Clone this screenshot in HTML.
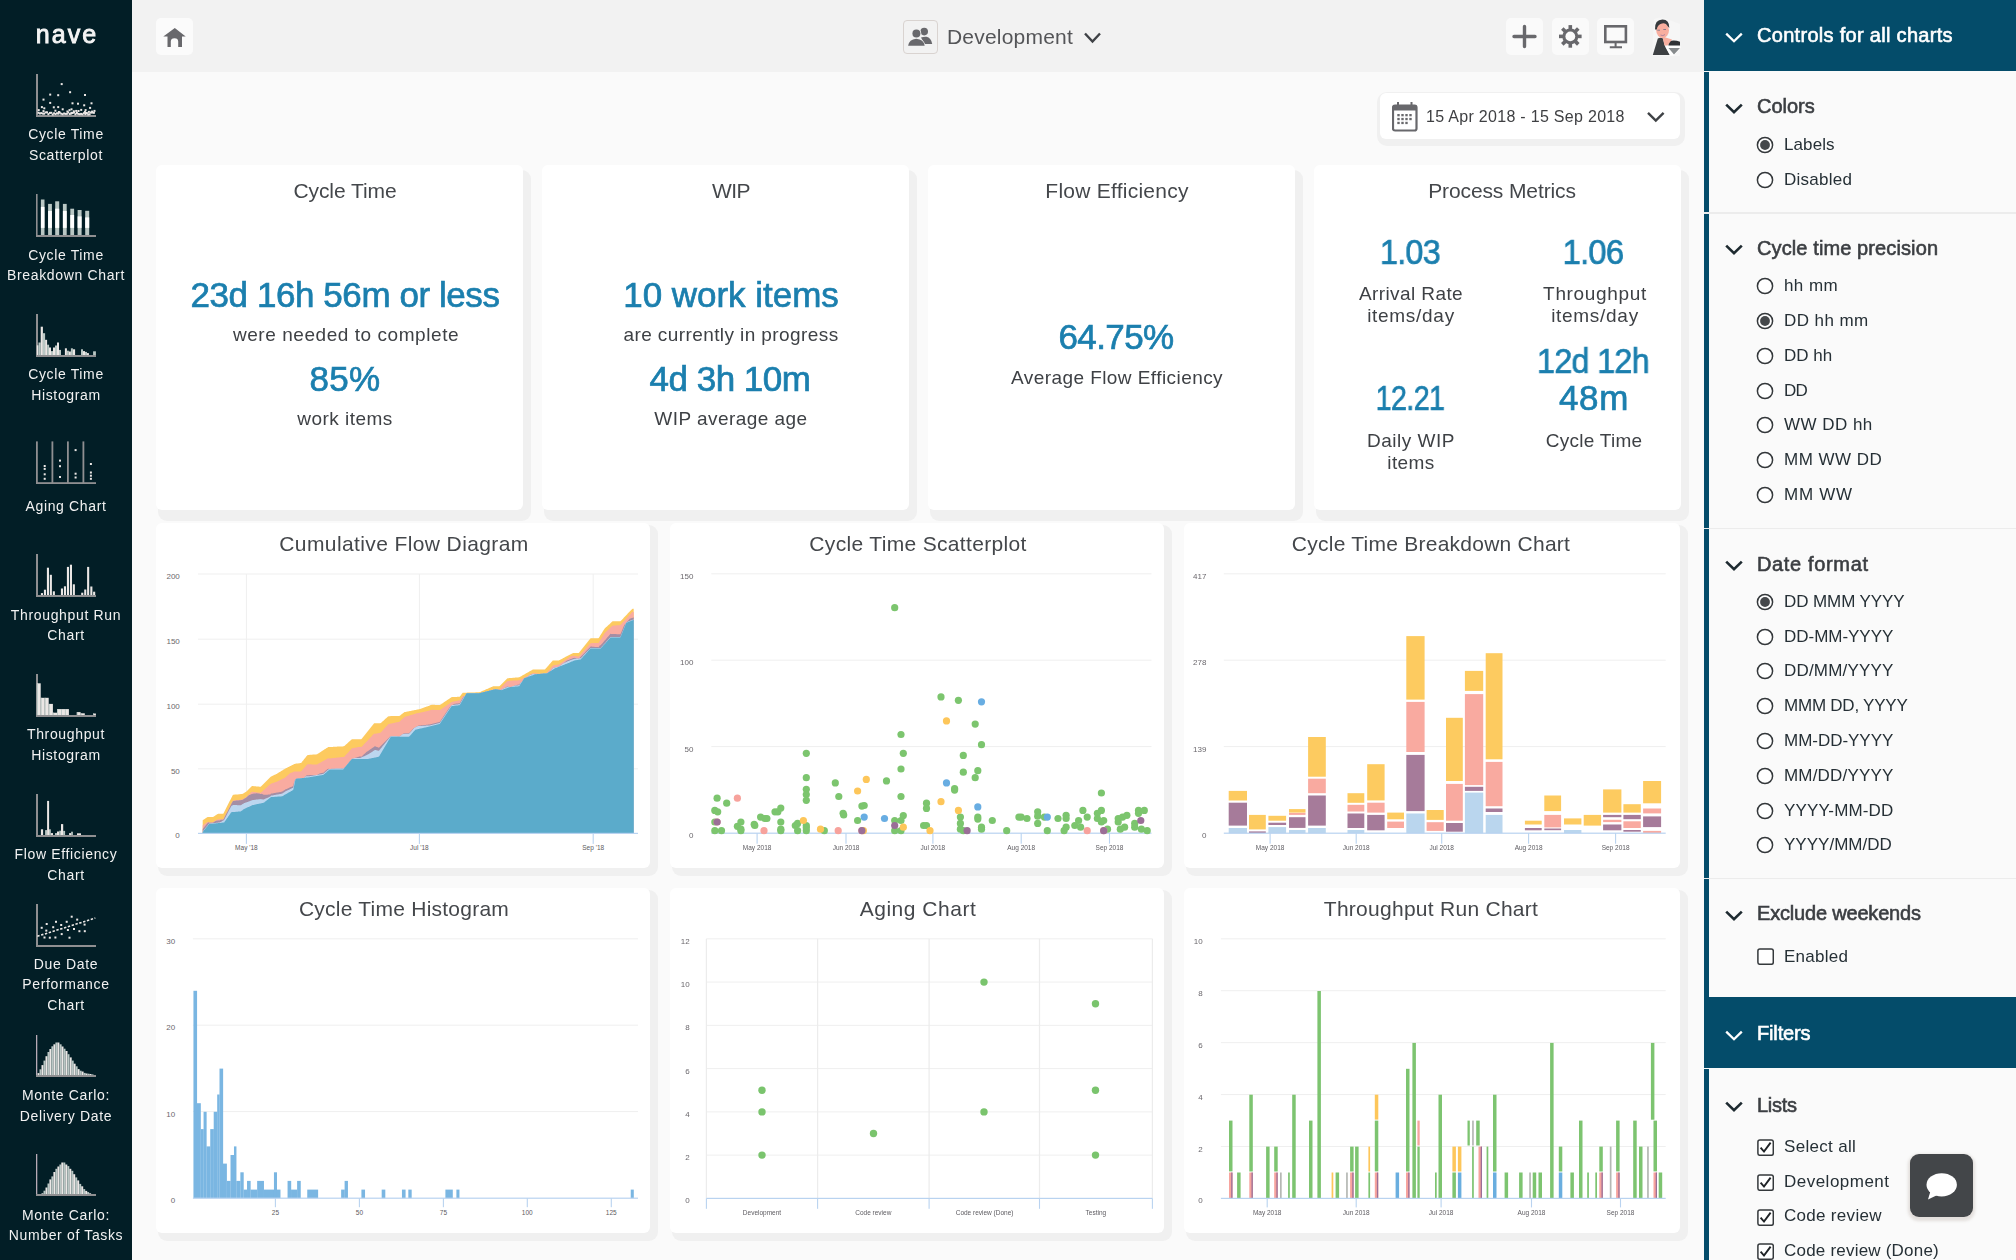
<!DOCTYPE html>
<html><head><meta charset="utf-8"><title>Nave Dashboard</title><style>
*{margin:0;padding:0;box-sizing:border-box}
html,body{width:2016px;height:1260px;overflow:hidden;background:#fafafa}
body{position:relative;font-family:"Liberation Sans",sans-serif}
.t{position:absolute;white-space:nowrap;font-family:"Liberation Sans",sans-serif;will-change:transform}
svg{display:block}
</style></head><body>
<div style="position:absolute;left:132px;top:72px;width:1572px;height:1188px;background:#fafafa"></div>
<div style="position:absolute;left:132px;top:0px;width:1572px;height:72px;background:#f2f2f2"></div>
<div style="position:absolute;left:0px;top:0px;width:132px;height:1260px;background:#021e26"></div>
<div style="position:absolute;left:156px;top:165px;width:367px;height:345px;background:#fff;border-radius:6px;box-shadow:5px 8px 0 3px #f0f0f0"></div>
<div style="position:absolute;left:542px;top:165px;width:367px;height:345px;background:#fff;border-radius:6px;box-shadow:5px 8px 0 3px #f0f0f0"></div>
<div style="position:absolute;left:928px;top:165px;width:367px;height:345px;background:#fff;border-radius:6px;box-shadow:5px 8px 0 3px #f0f0f0"></div>
<div style="position:absolute;left:1314px;top:165px;width:367px;height:345px;background:#fff;border-radius:6px;box-shadow:5px 8px 0 3px #f0f0f0"></div>
<div style="position:absolute;left:156px;top:523px;width:494px;height:345px;background:#fff;border-radius:6px;box-shadow:5px 5px 0 3px #f0f0f0"></div>
<div style="position:absolute;left:670px;top:523px;width:494px;height:345px;background:#fff;border-radius:6px;box-shadow:5px 5px 0 3px #f0f0f0"></div>
<div style="position:absolute;left:1184px;top:523px;width:496px;height:345px;background:#fff;border-radius:6px;box-shadow:5px 5px 0 3px #f0f0f0"></div>
<div style="position:absolute;left:156px;top:888px;width:494px;height:345px;background:#fff;border-radius:6px;box-shadow:5px 5px 0 3px #f0f0f0"></div>
<div style="position:absolute;left:670px;top:888px;width:494px;height:345px;background:#fff;border-radius:6px;box-shadow:5px 5px 0 3px #f0f0f0"></div>
<div style="position:absolute;left:1184px;top:888px;width:496px;height:345px;background:#fff;border-radius:6px;box-shadow:5px 5px 0 3px #f0f0f0"></div>
<div style="position:absolute;left:1704px;top:0px;width:312px;height:1260px;background:#fafafa"></div>
<div style="position:absolute;left:1704px;top:0px;width:312px;height:71px;background:#044c6a"></div>
<div style="position:absolute;left:1704px;top:72px;width:5px;height:925px;background:#044c6a"></div>
<div style="position:absolute;left:1704px;top:997px;width:312px;height:71px;background:#044c6a"></div>
<div style="position:absolute;left:1704px;top:1069px;width:5px;height:191px;background:#044c6a"></div>
<svg style="position:absolute;left:156px;top:523px" width="494" height="345" viewBox="156 523 494 345"><rect x="198.0" y="573.50" width="440.0" height="1" fill="#efefef"/><text x="179.8" y="579.0" font-size="8" fill="#6b686d" text-anchor="end" font-family="Liberation Sans">200</text><rect x="198.0" y="638.70" width="440.0" height="1" fill="#efefef"/><text x="179.8" y="644.2" font-size="8" fill="#6b686d" text-anchor="end" font-family="Liberation Sans">150</text><rect x="198.0" y="703.70" width="440.0" height="1" fill="#efefef"/><text x="179.8" y="709.2" font-size="8" fill="#6b686d" text-anchor="end" font-family="Liberation Sans">100</text><rect x="198.0" y="768.30" width="440.0" height="1" fill="#efefef"/><text x="179.8" y="773.8" font-size="8" fill="#6b686d" text-anchor="end" font-family="Liberation Sans">50</text><text x="179.8" y="838.4" font-size="8" fill="#6b686d" text-anchor="end" font-family="Liberation Sans">0</text><rect x="245.90" y="574.0" width="1" height="259.4" fill="#efefef"/><rect x="418.90" y="574.0" width="1" height="259.4" fill="#efefef"/><rect x="592.70" y="574.0" width="1" height="259.4" fill="#efefef"/><path d="M202.7 833.4 L202.7 820.2 L203.2 819.9 L203.7 819.5 L204.2 819.2 L204.7 818.9 L205.2 818.5 L205.7 818.2 L206.2 817.9 L206.7 817.5 L207.2 817.2 L207.7 817.0 L208.2 817.0 L208.7 817.0 L209.2 817.0 L209.7 817.0 L210.2 817.0 L210.7 817.0 L211.2 817.0 L211.7 817.0 L212.2 817.0 L212.7 817.0 L213.2 816.9 L213.7 816.5 L214.2 816.2 L214.7 815.9 L215.2 815.5 L215.7 815.2 L216.2 814.9 L216.7 814.5 L217.2 814.2 L217.7 813.9 L218.2 813.8 L218.7 813.8 L219.2 813.8 L219.7 813.8 L220.2 813.8 L220.7 813.8 L221.2 813.8 L221.7 813.8 L222.2 813.8 L222.7 813.8 L223.2 813.8 L223.7 813.0 L224.2 812.0 L224.7 811.0 L225.2 810.0 L225.7 809.1 L226.2 808.1 L226.7 807.1 L227.2 806.1 L227.7 805.1 L228.2 804.1 L228.7 803.1 L229.2 802.1 L229.7 801.1 L230.2 800.2 L230.7 799.2 L231.2 798.2 L231.7 797.2 L232.2 796.2 L232.7 795.2 L233.2 794.8 L233.7 794.7 L234.2 794.7 L234.7 794.6 L235.2 794.6 L235.7 794.6 L236.2 794.5 L236.7 794.5 L237.2 794.4 L237.7 794.4 L238.2 794.4 L238.7 794.3 L239.2 794.3 L239.7 794.2 L240.2 794.2 L240.7 794.1 L241.2 794.1 L241.7 794.1 L242.2 794.0 L242.7 793.8 L243.2 793.5 L243.7 793.2 L244.2 792.9 L244.7 792.6 L245.2 792.3 L245.7 792.0 L246.2 791.7 L246.7 791.2 L247.2 790.7 L247.7 790.2 L248.2 789.7 L248.7 789.2 L249.2 788.7 L249.7 788.2 L250.2 787.7 L250.7 787.2 L251.2 786.7 L251.7 786.2 L252.2 786.0 L252.7 786.1 L253.2 786.1 L253.7 786.2 L254.2 786.2 L254.7 786.3 L255.2 786.3 L255.7 786.3 L256.2 786.4 L256.7 786.4 L257.2 786.5 L257.7 786.5 L258.2 786.6 L258.7 786.6 L259.2 786.7 L259.7 786.7 L260.2 786.8 L260.7 786.7 L261.2 786.2 L261.7 785.7 L262.2 785.2 L262.7 784.7 L263.2 784.2 L263.7 783.7 L264.2 783.2 L264.7 782.7 L265.2 782.2 L265.7 781.7 L266.2 781.3 L266.7 780.8 L267.2 780.3 L267.7 779.8 L268.2 779.3 L268.7 778.8 L269.2 778.3 L269.7 777.8 L270.2 777.3 L270.7 776.8 L271.2 776.4 L271.7 776.2 L272.2 776.0 L272.7 775.7 L273.2 775.5 L273.7 775.3 L274.2 775.0 L274.7 774.8 L275.2 774.6 L275.7 774.4 L276.2 774.1 L276.7 773.9 L277.2 773.6 L277.7 773.3 L278.2 772.9 L278.7 772.6 L279.2 772.3 L279.7 772.0 L280.2 771.7 L280.7 771.4 L281.2 771.1 L281.7 770.8 L282.2 770.5 L282.7 770.2 L283.2 769.8 L283.7 769.5 L284.2 769.2 L284.7 768.9 L285.2 768.6 L285.7 768.4 L286.2 768.1 L286.7 767.9 L287.2 767.6 L287.7 767.4 L288.2 767.1 L288.7 766.9 L289.2 766.6 L289.7 766.4 L290.2 766.1 L290.7 765.9 L291.2 765.6 L291.7 765.4 L292.2 765.1 L292.7 764.9 L293.2 764.6 L293.7 764.4 L294.2 764.1 L294.7 763.9 L295.2 763.7 L295.7 763.7 L296.2 763.6 L296.7 763.6 L297.2 763.5 L297.7 763.4 L298.2 763.4 L298.7 763.3 L299.2 763.2 L299.7 763.2 L300.2 763.1 L300.7 763.1 L301.2 762.9 L301.7 762.2 L302.2 761.6 L302.7 761.0 L303.2 760.4 L303.7 759.8 L304.2 759.1 L304.7 758.5 L305.2 757.9 L305.7 757.2 L306.2 756.6 L306.7 756.0 L307.2 755.4 L307.7 755.0 L308.2 754.9 L308.7 754.9 L309.2 754.9 L309.7 754.8 L310.2 754.8 L310.7 754.8 L311.2 754.7 L311.7 754.7 L312.2 754.7 L312.7 754.6 L313.2 754.6 L313.7 754.5 L314.2 754.5 L314.7 754.5 L315.2 754.4 L315.7 754.4 L316.2 754.4 L316.7 754.3 L317.2 754.2 L317.7 753.8 L318.2 753.5 L318.7 753.2 L319.2 752.9 L319.7 752.5 L320.2 752.2 L320.7 751.9 L321.2 751.6 L321.7 751.3 L322.2 750.9 L322.7 750.6 L323.2 750.3 L323.7 750.0 L324.2 749.6 L324.7 749.3 L325.2 749.0 L325.7 748.7 L326.2 748.3 L326.7 748.0 L327.2 747.7 L327.7 747.4 L328.2 747.1 L328.7 747.1 L329.2 747.0 L329.7 747.0 L330.2 747.0 L330.7 747.0 L331.2 746.9 L331.7 746.9 L332.2 746.9 L332.7 746.9 L333.2 746.8 L333.7 746.8 L334.2 746.8 L334.7 746.8 L335.2 746.7 L335.7 746.7 L336.2 746.7 L336.7 746.7 L337.2 746.6 L337.7 746.6 L338.2 746.6 L338.7 746.6 L339.2 746.5 L339.7 746.5 L340.2 746.5 L340.7 746.5 L341.2 746.4 L341.7 746.4 L342.2 746.4 L342.7 746.4 L343.2 746.3 L343.7 746.3 L344.2 746.1 L344.7 745.7 L345.2 745.2 L345.7 744.8 L346.2 744.3 L346.7 743.9 L347.2 743.4 L347.7 743.0 L348.2 742.5 L348.7 742.1 L349.2 741.6 L349.7 741.2 L350.2 740.7 L350.7 740.3 L351.2 739.8 L351.7 739.4 L352.2 739.2 L352.7 739.2 L353.2 739.2 L353.7 739.2 L354.2 739.2 L354.7 739.2 L355.2 739.2 L355.7 739.2 L356.2 739.2 L356.7 739.2 L357.2 739.2 L357.7 739.2 L358.2 739.2 L358.7 739.2 L359.2 739.2 L359.7 739.2 L360.2 739.2 L360.7 739.2 L361.2 739.2 L361.7 738.8 L362.2 738.2 L362.7 737.6 L363.2 736.9 L363.7 736.3 L364.2 735.7 L364.7 735.1 L365.2 734.4 L365.7 733.8 L366.2 733.2 L366.7 732.6 L367.2 731.9 L367.7 731.3 L368.2 730.7 L368.7 730.1 L369.2 729.4 L369.7 728.8 L370.2 728.2 L370.7 727.6 L371.2 726.9 L371.7 726.3 L372.2 725.7 L372.7 725.1 L373.2 724.4 L373.7 723.8 L374.2 723.3 L374.7 723.3 L375.2 723.3 L375.7 723.3 L376.2 723.3 L376.7 723.3 L377.2 723.3 L377.7 723.3 L378.2 723.3 L378.7 723.3 L379.2 723.3 L379.7 723.3 L380.2 723.3 L380.7 723.1 L381.2 722.7 L381.7 722.2 L382.2 721.8 L382.7 721.3 L383.2 720.9 L383.7 720.4 L384.2 720.0 L384.7 719.5 L385.2 719.1 L385.7 718.6 L386.2 718.2 L386.7 717.7 L387.2 717.3 L387.7 716.8 L388.2 716.4 L388.7 716.2 L389.2 716.2 L389.7 716.2 L390.2 716.2 L390.7 716.1 L391.2 716.1 L391.7 716.1 L392.2 716.1 L392.7 716.1 L393.2 716.1 L393.7 716.1 L394.2 716.0 L394.7 716.0 L395.2 716.0 L395.7 716.0 L396.2 716.0 L396.7 716.0 L397.2 716.0 L397.7 715.9 L398.2 715.9 L398.7 715.9 L399.2 715.9 L399.7 715.7 L400.2 715.4 L400.7 715.0 L401.2 714.6 L401.7 714.2 L402.2 713.8 L402.7 713.4 L403.2 713.0 L403.7 712.7 L404.2 712.3 L404.7 712.1 L405.2 712.0 L405.7 711.9 L406.2 711.8 L406.7 711.7 L407.2 711.6 L407.7 711.5 L408.2 711.4 L408.7 711.3 L409.2 711.2 L409.7 711.1 L410.2 711.0 L410.7 710.9 L411.2 710.8 L411.7 710.7 L412.2 710.6 L412.7 710.5 L413.2 710.4 L413.7 710.3 L414.2 710.2 L414.7 710.1 L415.2 710.0 L415.7 709.9 L416.2 709.8 L416.7 709.7 L417.2 709.6 L417.7 709.5 L418.2 709.4 L418.7 709.3 L419.2 709.2 L419.7 709.1 L420.2 708.9 L420.7 708.7 L421.2 708.6 L421.7 708.4 L422.2 708.2 L422.7 708.0 L423.2 707.8 L423.7 707.7 L424.2 707.5 L424.7 707.3 L425.2 707.1 L425.7 706.9 L426.2 706.8 L426.7 706.6 L427.2 706.4 L427.7 706.2 L428.2 706.0 L428.7 705.9 L429.2 705.7 L429.7 705.5 L430.2 705.3 L430.7 705.1 L431.2 705.0 L431.7 704.8 L432.2 704.7 L432.7 704.7 L433.2 704.8 L433.7 704.8 L434.2 704.8 L434.7 704.8 L435.2 704.9 L435.7 704.9 L436.2 704.9 L436.7 704.9 L437.2 705.0 L437.7 705.0 L438.2 705.0 L438.7 705.0 L439.2 705.1 L439.7 705.1 L440.2 704.8 L440.7 704.5 L441.2 704.2 L441.7 703.8 L442.2 703.5 L442.7 703.2 L443.2 702.8 L443.7 702.5 L444.2 702.1 L444.7 701.8 L445.2 701.5 L445.7 701.1 L446.2 700.8 L446.7 700.5 L447.2 700.1 L447.7 699.8 L448.2 699.5 L448.7 699.1 L449.2 698.8 L449.7 698.4 L450.2 698.1 L450.7 697.8 L451.2 697.4 L451.7 697.1 L452.2 697.1 L452.7 697.1 L453.2 697.0 L453.7 697.0 L454.2 697.0 L454.7 697.0 L455.2 696.9 L455.7 696.9 L456.2 696.9 L456.7 696.9 L457.2 696.8 L457.7 696.8 L458.2 696.8 L458.7 696.8 L459.2 696.7 L459.7 696.7 L460.2 696.1 L460.7 695.4 L461.2 694.8 L461.7 694.1 L462.2 693.4 L462.7 692.8 L463.2 692.8 L463.7 692.8 L464.2 692.7 L464.7 692.7 L465.2 692.7 L465.7 692.7 L466.2 692.7 L466.7 692.7 L467.2 692.6 L467.7 692.6 L468.2 692.6 L468.7 692.6 L469.2 692.6 L469.7 692.5 L470.2 692.5 L470.7 692.5 L471.2 692.5 L471.7 692.5 L472.2 692.5 L472.7 692.4 L473.2 692.4 L473.7 692.4 L474.2 692.4 L474.7 692.4 L475.2 692.4 L475.7 692.3 L476.2 692.3 L476.7 692.3 L477.2 692.3 L477.7 692.3 L478.2 692.2 L478.7 692.2 L479.2 692.2 L479.7 692.1 L480.2 691.9 L480.7 691.7 L481.2 691.5 L481.7 691.3 L482.2 691.0 L482.7 690.8 L483.2 690.6 L483.7 690.4 L484.2 690.2 L484.7 690.0 L485.2 689.7 L485.7 689.5 L486.2 689.3 L486.7 689.1 L487.2 688.9 L487.7 688.7 L488.2 688.4 L488.7 688.2 L489.2 688.0 L489.7 687.8 L490.2 687.6 L490.7 687.4 L491.2 687.1 L491.7 686.9 L492.2 686.7 L492.7 686.5 L493.2 686.3 L493.7 686.2 L494.2 686.2 L494.7 686.2 L495.2 686.2 L495.7 686.2 L496.2 686.2 L496.7 686.2 L497.2 686.2 L497.7 686.2 L498.2 686.2 L498.7 686.2 L499.2 686.2 L499.7 685.9 L500.2 685.4 L500.7 684.9 L501.2 684.4 L501.7 683.9 L502.2 683.4 L502.7 682.9 L503.2 682.4 L503.7 681.9 L504.2 681.4 L504.7 680.9 L505.2 680.4 L505.7 679.9 L506.2 679.4 L506.7 678.9 L507.2 678.4 L507.7 678.3 L508.2 678.2 L508.7 678.2 L509.2 678.1 L509.7 678.1 L510.2 678.1 L510.7 678.0 L511.2 678.0 L511.7 677.9 L512.2 677.9 L512.7 677.8 L513.2 677.8 L513.7 677.8 L514.2 677.7 L514.7 677.7 L515.2 677.6 L515.7 677.6 L516.2 677.6 L516.7 677.5 L517.2 677.5 L517.7 677.4 L518.2 677.4 L518.7 677.3 L519.2 677.3 L519.7 677.0 L520.2 676.7 L520.7 676.4 L521.2 676.2 L521.7 675.9 L522.2 675.6 L522.7 675.3 L523.2 675.0 L523.7 674.7 L524.2 674.5 L524.7 674.2 L525.2 673.9 L525.7 673.6 L526.2 673.3 L526.7 673.0 L527.2 672.8 L527.7 672.5 L528.2 672.2 L528.7 671.9 L529.2 671.6 L529.7 671.3 L530.2 671.0 L530.7 670.8 L531.2 670.5 L531.7 670.2 L532.2 669.9 L532.7 669.6 L533.2 669.4 L533.7 669.4 L534.2 669.4 L534.7 669.4 L535.2 669.4 L535.7 669.4 L536.2 669.4 L536.7 669.4 L537.2 669.4 L537.7 669.4 L538.2 669.4 L538.7 669.4 L539.2 669.4 L539.7 669.4 L540.2 669.4 L540.7 669.4 L541.2 669.4 L541.7 669.4 L542.2 669.4 L542.7 669.4 L543.2 669.4 L543.7 669.4 L544.2 669.4 L544.7 669.4 L545.2 669.2 L545.7 668.6 L546.2 668.0 L546.7 667.5 L547.2 666.9 L547.7 666.3 L548.2 665.8 L548.7 665.2 L549.2 664.6 L549.7 664.0 L550.2 663.5 L550.7 662.9 L551.2 662.3 L551.7 661.8 L552.2 661.2 L552.7 660.6 L553.2 660.4 L553.7 660.4 L554.2 660.4 L554.7 660.4 L555.2 660.4 L555.7 660.4 L556.2 660.4 L556.7 660.4 L557.2 660.4 L557.7 660.4 L558.2 660.4 L558.7 660.4 L559.2 660.2 L559.7 660.0 L560.2 659.7 L560.7 659.5 L561.2 659.2 L561.7 658.9 L562.2 658.7 L562.7 658.4 L563.2 658.1 L563.7 657.9 L564.2 657.6 L564.7 657.4 L565.2 657.1 L565.7 656.8 L566.2 656.6 L566.7 656.3 L567.2 656.0 L567.7 655.8 L568.2 655.5 L568.7 655.3 L569.2 655.0 L569.7 654.7 L570.2 654.5 L570.7 654.2 L571.2 653.9 L571.7 653.7 L572.2 653.4 L572.7 653.2 L573.2 653.1 L573.7 653.1 L574.2 653.1 L574.7 653.1 L575.2 653.1 L575.7 653.1 L576.2 653.1 L576.7 653.1 L577.2 653.1 L577.7 653.1 L578.2 653.1 L578.7 653.1 L579.2 652.5 L579.7 651.8 L580.2 651.2 L580.7 650.6 L581.2 650.0 L581.7 649.3 L582.2 648.7 L582.7 648.1 L583.2 647.5 L583.7 646.8 L584.2 646.2 L584.7 645.6 L585.2 645.0 L585.7 644.3 L586.2 643.7 L586.7 643.1 L587.2 642.5 L587.7 641.8 L588.2 641.2 L588.7 640.6 L589.2 640.0 L589.7 639.3 L590.2 638.7 L590.7 638.2 L591.2 638.2 L591.7 638.2 L592.2 638.2 L592.7 638.2 L593.2 638.2 L593.7 638.2 L594.2 638.2 L594.7 638.2 L595.2 638.2 L595.7 638.2 L596.2 638.2 L596.7 638.2 L597.2 638.2 L597.7 638.2 L598.2 638.2 L598.7 638.0 L599.2 637.2 L599.7 636.4 L600.2 635.6 L600.7 634.8 L601.2 634.0 L601.7 633.2 L602.2 632.4 L602.7 631.6 L603.2 630.8 L603.7 630.0 L604.2 629.2 L604.7 628.5 L605.2 628.1 L605.7 627.6 L606.2 627.1 L606.7 626.7 L607.2 626.2 L607.7 625.7 L608.2 625.3 L608.7 624.8 L609.2 624.4 L609.7 623.9 L610.2 623.4 L610.7 623.0 L611.2 622.5 L611.7 622.0 L612.2 621.6 L612.7 621.3 L613.2 621.3 L613.7 621.3 L614.2 621.3 L614.7 621.3 L615.2 621.3 L615.7 621.3 L616.2 621.3 L616.7 621.3 L617.2 621.3 L617.7 621.3 L618.2 621.3 L618.7 621.3 L619.2 621.3 L619.7 621.3 L620.2 621.3 L620.7 621.0 L621.2 620.5 L621.7 619.9 L622.2 619.4 L622.7 618.9 L623.2 618.4 L623.7 617.8 L624.2 617.3 L624.7 616.8 L625.2 616.3 L625.7 615.7 L626.2 615.2 L626.7 614.7 L627.2 614.2 L627.7 613.6 L628.2 613.1 L628.7 612.6 L629.2 612.1 L629.7 611.5 L630.2 611.0 L630.7 610.5 L631.2 610.0 L631.7 609.4 L632.2 608.9 L632.7 608.8 L633.2 608.8 L633.7 608.8 L633.7 833.4 Z" fill="#fdca5f"/><path d="M202.7 833.4 L202.7 825.2 L203.2 824.9 L203.7 824.6 L204.2 824.2 L204.7 823.9 L205.2 823.6 L205.7 823.3 L206.2 823.0 L206.7 822.6 L207.2 822.3 L207.7 822.1 L208.2 822.1 L208.7 822.1 L209.2 822.2 L209.7 822.2 L210.2 822.2 L210.7 822.2 L211.2 822.2 L211.7 822.2 L212.2 822.2 L212.7 822.2 L213.2 822.1 L213.7 821.8 L214.2 821.5 L214.7 821.1 L215.2 820.8 L215.7 820.5 L216.2 820.2 L216.7 819.9 L217.2 819.5 L217.7 819.2 L218.2 819.2 L218.7 819.2 L219.2 819.2 L219.7 819.2 L220.2 819.2 L220.7 819.2 L221.2 819.2 L221.7 819.2 L222.2 819.3 L222.7 819.3 L223.2 819.3 L223.7 818.5 L224.2 817.5 L224.7 816.5 L225.2 815.6 L225.7 814.6 L226.2 813.6 L226.7 812.6 L227.2 811.7 L227.7 810.7 L228.2 809.7 L228.7 808.7 L229.2 807.7 L229.7 806.8 L230.2 805.8 L230.7 804.8 L231.2 803.8 L231.7 802.8 L232.2 801.9 L232.7 800.9 L233.2 800.5 L233.7 800.4 L234.2 800.4 L234.7 800.3 L235.2 800.3 L235.7 800.2 L236.2 800.1 L236.7 800.1 L237.2 800.0 L237.7 800.0 L238.2 799.9 L238.7 799.9 L239.2 799.8 L239.7 799.8 L240.2 799.7 L240.7 799.7 L241.2 799.6 L241.7 799.5 L242.2 799.5 L242.7 799.3 L243.2 799.0 L243.7 798.6 L244.2 798.3 L244.7 798.0 L245.2 797.7 L245.7 797.4 L246.2 797.1 L246.7 796.7 L247.2 796.2 L247.7 795.7 L248.2 795.2 L248.7 794.7 L249.2 794.3 L249.7 793.8 L250.2 793.3 L250.7 792.8 L251.2 792.3 L251.7 791.9 L252.2 791.7 L252.7 791.8 L253.2 791.8 L253.7 791.9 L254.2 792.0 L254.7 792.0 L255.2 792.1 L255.7 792.2 L256.2 792.2 L256.7 792.3 L257.2 792.4 L257.7 792.4 L258.2 792.5 L258.7 792.6 L259.2 792.6 L259.7 792.7 L260.2 792.8 L260.7 792.8 L261.2 792.3 L261.7 791.9 L262.2 791.4 L262.7 791.0 L263.2 790.5 L263.7 790.1 L264.2 789.7 L264.7 789.2 L265.2 788.8 L265.7 788.3 L266.2 787.9 L266.7 787.4 L267.2 787.0 L267.7 786.5 L268.2 786.1 L268.7 785.6 L269.2 785.2 L269.7 784.8 L270.2 784.3 L270.7 783.9 L271.2 783.6 L271.7 783.4 L272.2 783.2 L272.7 783.1 L273.2 782.9 L273.7 782.8 L274.2 782.6 L274.7 782.4 L275.2 782.3 L275.7 782.1 L276.2 782.0 L276.7 781.8 L277.2 781.5 L277.7 781.3 L278.2 781.0 L278.7 780.8 L279.2 780.6 L279.7 780.3 L280.2 780.1 L280.7 779.8 L281.2 779.6 L281.7 779.3 L282.2 779.1 L282.7 778.8 L283.2 778.6 L283.7 778.4 L284.2 778.1 L284.7 777.9 L285.2 777.5 L285.7 777.1 L286.2 776.6 L286.7 776.2 L287.2 775.7 L287.7 775.3 L288.2 774.8 L288.7 774.4 L289.2 773.9 L289.7 773.5 L290.2 773.1 L290.7 772.9 L291.2 772.8 L291.7 772.6 L292.2 772.4 L292.7 772.2 L293.2 772.0 L293.7 771.8 L294.2 771.6 L294.7 771.4 L295.2 771.4 L295.7 771.4 L296.2 771.4 L296.7 771.4 L297.2 771.4 L297.7 771.4 L298.2 771.4 L298.7 771.4 L299.2 771.4 L299.7 771.4 L300.2 771.4 L300.7 771.4 L301.2 771.3 L301.7 770.7 L302.2 770.1 L302.7 769.6 L303.2 769.0 L303.7 768.5 L304.2 767.9 L304.7 767.3 L305.2 766.8 L305.7 766.2 L306.2 765.6 L306.7 765.1 L307.2 764.5 L307.7 764.2 L308.2 764.2 L308.7 764.2 L309.2 764.3 L309.7 764.3 L310.2 764.3 L310.7 764.3 L311.2 764.3 L311.7 764.4 L312.2 764.4 L312.7 764.4 L313.2 764.4 L313.7 764.4 L314.2 764.4 L314.7 764.4 L315.2 764.4 L315.7 764.4 L316.2 764.4 L316.7 764.5 L317.2 764.4 L317.7 764.1 L318.2 763.8 L318.7 763.5 L319.2 763.2 L319.7 763.0 L320.2 762.7 L320.7 762.4 L321.2 762.1 L321.7 761.9 L322.2 761.6 L322.7 761.3 L323.2 761.0 L323.7 760.8 L324.2 760.5 L324.7 760.2 L325.2 759.9 L325.7 759.6 L326.2 759.4 L326.7 759.1 L327.2 758.8 L327.7 758.5 L328.2 758.3 L328.7 758.3 L329.2 758.4 L329.7 758.4 L330.2 758.4 L330.7 758.3 L331.2 758.3 L331.7 758.2 L332.2 758.2 L332.7 758.1 L333.2 758.1 L333.7 758.0 L334.2 757.9 L334.7 757.9 L335.2 757.8 L335.7 757.8 L336.2 757.7 L336.7 757.7 L337.2 757.6 L337.7 757.6 L338.2 757.5 L338.7 757.4 L339.2 757.4 L339.7 757.3 L340.2 757.3 L340.7 757.2 L341.2 757.2 L341.7 757.1 L342.2 757.1 L342.7 757.0 L343.2 756.9 L343.7 756.9 L344.2 756.7 L344.7 756.2 L345.2 755.7 L345.7 755.1 L346.2 754.6 L346.7 754.0 L347.2 753.5 L347.7 753.0 L348.2 752.4 L348.7 751.9 L349.2 751.3 L349.7 750.8 L350.2 750.2 L350.7 749.7 L351.2 749.1 L351.7 748.6 L352.2 748.3 L352.7 748.2 L353.2 748.1 L353.7 748.0 L354.2 747.9 L354.7 747.8 L355.2 747.7 L355.7 747.6 L356.2 747.5 L356.7 747.4 L357.2 747.3 L357.7 747.2 L358.2 747.1 L358.7 747.1 L359.2 747.0 L359.7 746.9 L360.2 746.8 L360.7 746.9 L361.2 747.0 L361.7 746.8 L362.2 746.2 L362.7 745.7 L363.2 745.2 L363.7 744.6 L364.2 744.1 L364.7 743.6 L365.2 743.0 L365.7 742.5 L366.2 742.0 L366.7 741.5 L367.2 740.9 L367.7 740.4 L368.2 739.9 L368.7 739.3 L369.2 738.8 L369.7 738.3 L370.2 737.8 L370.7 737.2 L371.2 736.7 L371.7 736.2 L372.2 735.6 L372.7 735.1 L373.2 734.6 L373.7 734.0 L374.2 733.6 L374.7 733.7 L375.2 733.8 L375.7 733.7 L376.2 733.6 L376.7 733.5 L377.2 733.4 L377.7 733.3 L378.2 733.2 L378.7 733.1 L379.2 733.0 L379.7 732.9 L380.2 732.8 L380.7 732.5 L381.2 732.0 L381.7 731.4 L382.2 730.9 L382.7 730.3 L383.2 729.8 L383.7 729.2 L384.2 728.7 L384.7 728.1 L385.2 727.6 L385.7 727.1 L386.2 726.5 L386.7 726.0 L387.2 725.4 L387.7 724.9 L388.2 724.3 L388.7 724.0 L389.2 723.9 L389.7 723.8 L390.2 723.7 L390.7 723.6 L391.2 723.5 L391.7 723.4 L392.2 723.3 L392.7 723.2 L393.2 723.1 L393.7 723.0 L394.2 722.9 L394.7 722.8 L395.2 722.6 L395.7 722.5 L396.2 722.4 L396.7 722.3 L397.2 722.2 L397.7 722.1 L398.2 722.0 L398.7 721.9 L399.2 721.8 L399.7 721.5 L400.2 721.1 L400.7 720.6 L401.2 720.1 L401.7 719.6 L402.2 719.1 L402.7 718.7 L403.2 718.2 L403.7 717.7 L404.2 717.2 L404.7 717.0 L405.2 716.8 L405.7 716.6 L406.2 716.5 L406.7 716.3 L407.2 716.2 L407.7 716.0 L408.2 715.9 L408.7 715.7 L409.2 715.6 L409.7 715.4 L410.2 715.3 L410.7 715.1 L411.2 715.0 L411.7 714.8 L412.2 714.7 L412.7 714.5 L413.2 714.4 L413.7 714.2 L414.2 714.1 L414.7 713.9 L415.2 713.8 L415.7 713.6 L416.2 713.5 L416.7 713.3 L417.2 713.2 L417.7 713.0 L418.2 712.9 L418.7 712.9 L419.2 712.8 L419.7 712.8 L420.2 712.7 L420.7 712.6 L421.2 712.5 L421.7 712.3 L422.2 712.2 L422.7 712.1 L423.2 712.0 L423.7 711.9 L424.2 711.8 L424.7 711.6 L425.2 711.5 L425.7 711.4 L426.2 711.3 L426.7 711.2 L427.2 711.0 L427.7 710.9 L428.2 710.8 L428.7 710.7 L429.2 710.6 L429.7 710.5 L430.2 710.3 L430.7 710.1 L431.2 710.0 L431.7 709.8 L432.2 709.7 L432.7 709.7 L433.2 709.8 L433.7 709.8 L434.2 709.8 L434.7 709.8 L435.2 709.9 L435.7 709.9 L436.2 709.9 L436.7 709.9 L437.2 710.0 L437.7 710.0 L438.2 710.0 L438.7 710.0 L439.2 710.1 L439.7 710.1 L440.2 709.8 L440.7 709.5 L441.2 709.2 L441.7 708.8 L442.2 708.5 L442.7 708.2 L443.2 707.8 L443.7 707.5 L444.2 707.1 L444.7 706.8 L445.2 706.5 L445.7 706.1 L446.2 705.8 L446.7 705.5 L447.2 705.1 L447.7 704.8 L448.2 704.5 L448.7 704.1 L449.2 703.8 L449.7 703.4 L450.2 703.1 L450.7 702.7 L451.2 702.3 L451.7 701.9 L452.2 701.8 L452.7 701.7 L453.2 701.6 L453.7 701.5 L454.2 701.4 L454.7 701.3 L455.2 701.2 L455.7 701.1 L456.2 701.0 L456.7 700.9 L457.2 700.8 L457.7 700.7 L458.2 700.6 L458.7 700.5 L459.2 700.4 L459.7 700.3 L460.2 699.6 L460.7 698.9 L461.2 698.2 L461.7 697.4 L462.2 696.7 L462.7 696.1 L463.2 696.1 L463.7 696.1 L464.2 696.0 L464.7 696.0 L465.2 695.6 L465.7 694.8 L466.2 693.9 L466.7 693.2 L467.2 693.2 L467.7 693.2 L468.2 693.2 L468.7 693.2 L469.2 693.2 L469.7 693.2 L470.2 693.2 L470.7 693.2 L471.2 693.2 L471.7 693.2 L472.2 693.2 L472.7 693.2 L473.2 693.2 L473.7 693.2 L474.2 693.2 L474.7 693.2 L475.2 693.2 L475.7 693.2 L476.2 693.2 L476.7 693.2 L477.2 693.2 L477.7 693.2 L478.2 693.2 L478.7 693.2 L479.2 693.2 L479.7 693.1 L480.2 693.0 L480.7 692.9 L481.2 692.8 L481.7 692.6 L482.2 692.5 L482.7 692.4 L483.2 692.3 L483.7 692.1 L484.2 692.0 L484.7 691.9 L485.2 691.8 L485.7 691.6 L486.2 691.5 L486.7 691.4 L487.2 691.3 L487.7 691.1 L488.2 691.0 L488.7 690.9 L489.2 690.8 L489.7 690.6 L490.2 690.5 L490.7 690.4 L491.2 690.2 L491.7 690.0 L492.2 689.8 L492.7 689.6 L493.2 689.3 L493.7 689.2 L494.2 689.2 L494.7 689.2 L495.2 689.2 L495.7 689.2 L496.2 689.2 L496.7 689.2 L497.2 689.2 L497.7 689.2 L498.2 689.2 L498.7 689.2 L499.2 689.2 L499.7 688.9 L500.2 688.4 L500.7 687.9 L501.2 687.4 L501.7 686.8 L502.2 686.3 L502.7 685.8 L503.2 685.3 L503.7 684.8 L504.2 684.3 L504.7 683.8 L505.2 683.2 L505.7 682.7 L506.2 682.2 L506.7 681.7 L507.2 681.2 L507.7 681.0 L508.2 681.0 L508.7 680.9 L509.2 680.9 L509.7 680.8 L510.2 680.8 L510.7 680.7 L511.2 680.7 L511.7 680.7 L512.2 680.7 L512.7 680.6 L513.2 680.6 L513.7 680.6 L514.2 680.5 L514.7 680.5 L515.2 680.5 L515.7 680.5 L516.2 680.4 L516.7 680.4 L517.2 680.4 L517.7 680.4 L518.2 680.3 L518.7 680.3 L519.2 680.3 L519.7 680.0 L520.2 679.7 L520.7 679.5 L521.2 679.2 L521.7 678.9 L522.2 678.7 L522.7 678.4 L523.2 678.1 L523.7 677.9 L524.2 677.6 L524.7 677.3 L525.2 677.0 L525.7 676.8 L526.2 676.5 L526.7 676.2 L527.2 676.0 L527.7 675.7 L528.2 675.4 L528.7 675.2 L529.2 674.9 L529.7 674.6 L530.2 674.4 L530.7 674.1 L531.2 673.9 L531.7 673.7 L532.2 673.5 L532.7 673.2 L533.2 673.1 L533.7 673.1 L534.2 673.2 L534.7 673.2 L535.2 673.3 L535.7 673.3 L536.2 673.4 L536.7 673.4 L537.2 673.5 L537.7 673.5 L538.2 673.6 L538.7 673.7 L539.2 673.7 L539.7 673.8 L540.2 673.8 L540.7 673.8 L541.2 673.8 L541.7 673.7 L542.2 673.7 L542.7 673.7 L543.2 673.6 L543.7 673.6 L544.2 673.5 L544.7 673.5 L545.2 673.5 L545.7 673.4 L546.2 673.1 L546.7 672.6 L547.2 672.1 L547.7 671.6 L548.2 671.1 L548.7 670.5 L549.2 670.0 L549.7 669.5 L550.2 668.9 L550.7 668.3 L551.2 667.6 L551.7 667.0 L552.2 666.3 L552.7 665.7 L553.2 665.4 L553.7 665.3 L554.2 665.2 L554.7 665.1 L555.2 665.0 L555.7 665.0 L556.2 664.9 L556.7 664.8 L557.2 664.7 L557.7 664.6 L558.2 664.5 L558.7 664.5 L559.2 664.2 L559.7 663.9 L560.2 663.5 L560.7 663.2 L561.2 662.8 L561.7 662.5 L562.2 662.2 L562.7 661.8 L563.2 661.5 L563.7 661.1 L564.2 660.8 L564.7 660.4 L565.2 660.1 L565.7 659.7 L566.2 659.4 L566.7 659.0 L567.2 658.7 L567.7 658.4 L568.2 658.0 L568.7 657.7 L569.2 657.3 L569.7 657.0 L570.2 656.7 L570.7 656.5 L571.2 656.3 L571.7 656.1 L572.2 655.9 L572.7 655.7 L573.2 655.7 L573.7 655.8 L574.2 655.9 L574.7 656.0 L575.2 656.0 L575.7 656.1 L576.2 656.2 L576.7 656.2 L577.2 656.3 L577.7 656.4 L578.2 656.4 L578.7 656.5 L579.2 656.0 L579.7 655.4 L580.2 654.8 L580.7 654.3 L581.2 653.7 L581.7 653.2 L582.2 652.6 L582.7 652.1 L583.2 651.5 L583.7 651.0 L584.2 650.4 L584.7 649.8 L585.2 649.3 L585.7 648.7 L586.2 648.2 L586.7 647.6 L587.2 647.1 L587.7 646.5 L588.2 646.0 L588.7 645.4 L589.2 644.8 L589.7 644.3 L590.2 643.7 L590.7 643.2 L591.2 643.2 L591.7 643.1 L592.2 643.1 L592.7 643.1 L593.2 643.1 L593.7 643.1 L594.2 643.1 L594.7 643.1 L595.2 643.0 L595.7 643.0 L596.2 643.0 L596.7 643.0 L597.2 643.0 L597.7 643.0 L598.2 643.0 L598.7 642.8 L599.2 642.0 L599.7 641.1 L600.2 640.3 L600.7 639.5 L601.2 638.7 L601.7 637.9 L602.2 637.0 L602.7 636.2 L603.2 635.4 L603.7 634.6 L604.2 633.8 L604.7 633.1 L605.2 632.6 L605.7 632.1 L606.2 631.6 L606.7 631.2 L607.2 630.7 L607.7 630.2 L608.2 629.7 L608.7 629.3 L609.2 628.8 L609.7 628.3 L610.2 627.8 L610.7 627.3 L611.2 626.8 L611.7 626.3 L612.2 625.9 L612.7 625.6 L613.2 625.5 L613.7 625.5 L614.2 625.5 L614.7 625.4 L615.2 625.4 L615.7 625.4 L616.2 625.4 L616.7 625.3 L617.2 625.3 L617.7 625.3 L618.2 625.2 L618.7 625.2 L619.2 625.2 L619.7 625.2 L620.2 625.1 L620.7 624.8 L621.2 624.2 L621.7 623.7 L622.2 623.1 L622.7 622.6 L623.2 622.0 L623.7 621.5 L624.2 620.9 L624.7 620.4 L625.2 619.8 L625.7 619.3 L626.2 618.7 L626.7 618.2 L627.2 617.6 L627.7 617.1 L628.2 616.5 L628.7 616.0 L629.2 615.4 L629.7 614.8 L630.2 614.3 L630.7 613.7 L631.2 613.2 L631.7 612.6 L632.2 612.0 L632.7 611.9 L633.2 611.9 L633.7 611.8 L633.7 833.4 Z" fill="#f9aba0"/><path d="M202.7 833.4 L202.7 829.0 L203.2 828.4 L203.7 827.8 L204.2 827.2 L204.7 826.6 L205.2 826.0 L205.7 825.3 L206.2 824.7 L206.7 824.1 L207.2 823.5 L207.7 822.9 L208.2 822.6 L208.7 822.6 L209.2 822.7 L209.7 822.7 L210.2 822.7 L210.7 822.7 L211.2 822.7 L211.7 822.7 L212.2 822.7 L212.7 822.7 L213.2 822.6 L213.7 822.3 L214.2 822.0 L214.7 821.6 L215.2 821.3 L215.7 821.0 L216.2 820.7 L216.7 820.7 L217.2 820.7 L217.7 820.6 L218.2 820.6 L218.7 820.5 L219.2 820.5 L219.7 820.5 L220.2 820.3 L220.7 819.8 L221.2 819.7 L221.7 819.7 L222.2 819.8 L222.7 819.8 L223.2 819.8 L223.7 819.0 L224.2 818.0 L224.7 817.0 L225.2 816.1 L225.7 815.1 L226.2 814.1 L226.7 813.1 L227.2 812.2 L227.7 811.2 L228.2 810.2 L228.7 809.2 L229.2 808.2 L229.7 807.3 L230.2 806.3 L230.7 805.3 L231.2 804.3 L231.7 803.3 L232.2 802.4 L232.7 801.4 L233.2 801.0 L233.7 800.9 L234.2 800.9 L234.7 800.8 L235.2 800.8 L235.7 800.7 L236.2 800.6 L236.7 800.6 L237.2 800.5 L237.7 800.5 L238.2 800.4 L238.7 800.4 L239.2 800.3 L239.7 800.3 L240.2 800.2 L240.7 800.2 L241.2 800.1 L241.7 800.0 L242.2 800.0 L242.7 799.8 L243.2 799.5 L243.7 799.1 L244.2 798.8 L244.7 798.5 L245.2 798.2 L245.7 797.9 L246.2 797.6 L246.7 797.2 L247.2 796.8 L247.7 796.3 L248.2 795.8 L248.7 795.4 L249.2 795.0 L249.7 794.9 L250.2 794.7 L250.7 794.5 L251.2 794.3 L251.7 794.1 L252.2 793.9 L252.7 793.8 L253.2 793.7 L253.7 793.6 L254.2 793.6 L254.7 793.5 L255.2 793.4 L255.7 793.4 L256.2 793.3 L256.7 793.2 L257.2 793.3 L257.7 793.4 L258.2 793.4 L258.7 793.5 L259.2 793.6 L259.7 793.7 L260.2 793.9 L260.7 794.1 L261.2 793.9 L261.7 793.7 L262.2 794.0 L262.7 794.2 L263.2 794.5 L263.7 794.8 L264.2 794.8 L264.7 794.8 L265.2 794.8 L265.7 794.7 L266.2 794.7 L266.7 794.7 L267.2 794.7 L267.7 794.7 L268.2 794.6 L268.7 794.6 L269.2 794.6 L269.7 794.6 L270.2 794.4 L270.7 794.0 L271.2 793.6 L271.7 793.6 L272.2 793.5 L272.7 793.4 L273.2 793.3 L273.7 793.2 L274.2 793.1 L274.7 793.0 L275.2 792.9 L275.7 792.8 L276.2 792.7 L276.7 792.6 L277.2 792.5 L277.7 792.4 L278.2 792.4 L278.7 792.3 L279.2 792.2 L279.7 792.1 L280.2 792.0 L280.7 791.9 L281.2 791.8 L281.7 791.7 L282.2 791.6 L282.7 791.2 L283.2 790.9 L283.7 790.5 L284.2 790.2 L284.7 789.9 L285.2 789.6 L285.7 789.3 L286.2 789.1 L286.7 788.9 L287.2 788.7 L287.7 788.4 L288.2 788.2 L288.7 788.0 L289.2 787.8 L289.7 787.6 L290.2 787.3 L290.7 787.1 L291.2 786.9 L291.7 786.7 L292.2 786.4 L292.7 786.2 L293.2 786.0 L293.7 783.7 L294.2 781.5 L294.7 780.4 L295.2 780.4 L295.7 778.9 L296.2 778.8 L296.7 778.8 L297.2 778.7 L297.7 778.6 L298.2 778.6 L298.7 778.5 L299.2 778.5 L299.7 778.4 L300.2 778.4 L300.7 778.3 L301.2 778.2 L301.7 778.2 L302.2 778.1 L302.7 778.1 L303.2 778.0 L303.7 777.9 L304.2 777.8 L304.7 777.3 L305.2 776.8 L305.7 776.3 L306.2 775.8 L306.7 775.3 L307.2 775.2 L307.7 775.2 L308.2 775.2 L308.7 775.2 L309.2 775.2 L309.7 775.1 L310.2 775.1 L310.7 775.0 L311.2 774.9 L311.7 774.9 L312.2 774.9 L312.7 774.9 L313.2 774.9 L313.7 774.9 L314.2 774.9 L314.7 774.9 L315.2 774.9 L315.7 774.9 L316.2 774.9 L316.7 775.0 L317.2 774.9 L317.7 774.6 L318.2 774.3 L318.7 774.0 L319.2 773.7 L319.7 773.5 L320.2 773.3 L320.7 773.2 L321.2 773.1 L321.7 773.0 L322.2 772.9 L322.7 772.8 L323.2 772.7 L323.7 772.4 L324.2 771.9 L324.7 771.5 L325.2 771.1 L325.7 770.6 L326.2 770.2 L326.7 769.7 L327.2 769.3 L327.7 769.0 L328.2 768.8 L328.7 768.8 L329.2 768.9 L329.7 768.9 L330.2 768.9 L330.7 768.9 L331.2 768.8 L331.7 768.8 L332.2 768.8 L332.7 768.8 L333.2 768.7 L333.7 768.7 L334.2 768.7 L334.7 768.7 L335.2 768.6 L335.7 768.6 L336.2 768.6 L336.7 768.6 L337.2 768.5 L337.7 768.5 L338.2 768.5 L338.7 768.5 L339.2 768.4 L339.7 768.4 L340.2 768.4 L340.7 768.4 L341.2 768.3 L341.7 768.3 L342.2 768.3 L342.7 768.3 L343.2 768.2 L343.7 768.2 L344.2 768.0 L344.7 767.6 L345.2 767.0 L345.7 766.4 L346.2 765.8 L346.7 765.2 L347.2 764.6 L347.7 764.0 L348.2 763.4 L348.7 762.8 L349.2 762.2 L349.7 761.6 L350.2 761.0 L350.7 760.4 L351.2 759.7 L351.7 759.1 L352.2 758.8 L352.7 758.6 L353.2 758.5 L353.7 758.3 L354.2 758.2 L354.7 758.0 L355.2 757.8 L355.7 757.7 L356.2 757.5 L356.7 757.4 L357.2 757.2 L357.7 757.0 L358.2 756.9 L358.7 756.7 L359.2 756.6 L359.7 756.4 L360.2 756.4 L360.7 756.5 L361.2 756.7 L361.7 756.5 L362.2 756.0 L362.7 755.5 L363.2 755.1 L363.7 754.6 L364.2 754.1 L364.7 753.7 L365.2 753.2 L365.7 752.7 L366.2 752.3 L366.7 751.8 L367.2 751.4 L367.7 751.2 L368.2 750.9 L368.7 750.5 L369.2 750.2 L369.7 749.8 L370.2 749.5 L370.7 749.1 L371.2 748.8 L371.7 748.4 L372.2 748.1 L372.7 747.7 L373.2 747.4 L373.7 747.0 L374.2 746.7 L374.7 746.3 L375.2 746.2 L375.7 746.4 L376.2 746.7 L376.7 746.9 L377.2 747.1 L377.7 747.3 L378.2 747.6 L378.7 747.8 L379.2 747.6 L379.7 747.1 L380.2 746.6 L380.7 746.1 L381.2 745.5 L381.7 745.0 L382.2 744.5 L382.7 744.0 L383.2 743.5 L383.7 743.0 L384.2 742.5 L384.7 742.0 L385.2 741.5 L385.7 741.0 L386.2 740.5 L386.7 740.0 L387.2 739.5 L387.7 739.0 L388.2 738.5 L388.7 738.0 L389.2 737.4 L389.7 736.9 L390.2 736.3 L390.7 736.2 L391.2 736.2 L391.7 736.2 L392.2 736.2 L392.7 736.2 L393.2 736.2 L393.7 736.3 L394.2 736.3 L394.7 736.3 L395.2 736.3 L395.7 736.3 L396.2 736.3 L396.7 736.3 L397.2 736.3 L397.7 736.4 L398.2 736.4 L398.7 736.4 L399.2 736.4 L399.7 736.3 L400.2 735.9 L400.7 735.5 L401.2 735.2 L401.7 734.8 L402.2 734.5 L402.7 734.1 L403.2 733.8 L403.7 733.5 L404.2 733.4 L404.7 733.3 L405.2 733.3 L405.7 733.3 L406.2 733.3 L406.7 733.3 L407.2 733.3 L407.7 733.3 L408.2 733.3 L408.7 733.3 L409.2 733.1 L409.7 732.5 L410.2 732.0 L410.7 731.4 L411.2 730.9 L411.7 730.3 L412.2 729.8 L412.7 729.2 L413.2 728.6 L413.7 728.2 L414.2 727.9 L414.7 727.7 L415.2 727.4 L415.7 727.1 L416.2 726.9 L416.7 726.6 L417.2 726.3 L417.7 726.1 L418.2 725.8 L418.7 725.5 L419.2 725.5 L419.7 725.4 L420.2 725.4 L420.7 725.4 L421.2 725.3 L421.7 725.3 L422.2 725.2 L422.7 725.2 L423.2 725.1 L423.7 725.1 L424.2 725.0 L424.7 725.0 L425.2 724.9 L425.7 724.9 L426.2 724.8 L426.7 724.8 L427.2 724.7 L427.7 724.7 L428.2 724.6 L428.7 724.5 L429.2 724.5 L429.7 724.4 L430.2 724.3 L430.7 724.2 L431.2 724.1 L431.7 723.9 L432.2 723.8 L432.7 723.7 L433.2 723.6 L433.7 723.4 L434.2 723.3 L434.7 723.2 L435.2 723.1 L435.7 722.9 L436.2 722.8 L436.7 722.7 L437.2 722.6 L437.7 722.4 L438.2 722.3 L438.7 722.2 L439.2 722.1 L439.7 721.9 L440.2 721.3 L440.7 720.6 L441.2 719.8 L441.7 719.1 L442.2 718.3 L442.7 717.6 L443.2 716.8 L443.7 716.1 L444.2 715.3 L444.7 714.6 L445.2 713.8 L445.7 713.1 L446.2 712.3 L446.7 711.6 L447.2 710.8 L447.7 710.1 L448.2 709.3 L448.7 708.6 L449.2 707.8 L449.7 707.3 L450.2 706.8 L450.7 706.3 L451.2 705.7 L451.7 705.2 L452.2 705.0 L452.7 704.7 L453.2 704.5 L453.7 704.3 L454.2 704.0 L454.7 703.8 L455.2 703.7 L455.7 703.7 L456.2 703.6 L456.7 703.5 L457.2 703.5 L457.7 703.4 L458.2 703.4 L458.7 703.3 L459.2 703.3 L459.7 703.2 L460.2 702.3 L460.7 701.5 L461.2 700.6 L461.7 699.8 L462.2 698.9 L462.7 698.1 L463.2 697.2 L463.7 696.6 L464.2 696.6 L464.7 696.5 L465.2 695.6 L465.7 694.8 L466.2 693.9 L466.7 693.2 L467.2 693.2 L467.7 693.2 L468.2 693.2 L468.7 693.2 L469.2 693.2 L469.7 693.2 L470.2 693.2 L470.7 693.2 L471.2 693.2 L471.7 693.2 L472.2 693.2 L472.7 693.2 L473.2 693.2 L473.7 693.2 L474.2 693.2 L474.7 693.2 L475.2 693.2 L475.7 693.2 L476.2 693.2 L476.7 693.2 L477.2 693.2 L477.7 693.2 L478.2 693.2 L478.7 693.2 L479.2 693.2 L479.7 693.1 L480.2 693.0 L480.7 692.9 L481.2 692.8 L481.7 692.6 L482.2 692.5 L482.7 692.4 L483.2 692.3 L483.7 692.1 L484.2 692.0 L484.7 691.9 L485.2 691.8 L485.7 691.6 L486.2 691.5 L486.7 691.4 L487.2 691.3 L487.7 691.1 L488.2 691.0 L488.7 690.9 L489.2 690.8 L489.7 690.6 L490.2 690.5 L490.7 690.4 L491.2 690.3 L491.7 690.1 L492.2 690.0 L492.7 689.9 L493.2 689.8 L493.7 689.6 L494.2 689.5 L494.7 689.4 L495.2 689.3 L495.7 689.3 L496.2 689.3 L496.7 689.4 L497.2 689.5 L497.7 689.6 L498.2 689.7 L498.7 689.8 L499.2 689.8 L499.7 689.9 L500.2 690.0 L500.7 690.1 L501.2 689.9 L501.7 689.6 L502.2 689.3 L502.7 689.0 L503.2 688.7 L503.7 688.5 L504.2 688.2 L504.7 687.9 L505.2 687.6 L505.7 687.3 L506.2 687.0 L506.7 686.7 L507.2 686.4 L507.7 686.5 L508.2 686.7 L508.7 686.8 L509.2 687.0 L509.7 687.2 L510.2 687.1 L510.7 687.0 L511.2 686.8 L511.7 686.7 L512.2 686.5 L512.7 686.3 L513.2 686.1 L513.7 686.0 L514.2 685.8 L514.7 685.6 L515.2 685.4 L515.7 685.3 L516.2 685.1 L516.7 684.9 L517.2 684.8 L517.7 684.7 L518.2 684.7 L518.7 684.6 L519.2 684.6 L519.7 683.8 L520.2 683.2 L520.7 682.8 L521.2 682.3 L521.7 681.9 L522.2 681.5 L522.7 680.7 L523.2 679.9 L523.7 679.1 L524.2 678.3 L524.7 678.1 L525.2 677.9 L525.7 677.7 L526.2 677.6 L526.7 677.4 L527.2 677.2 L527.7 676.9 L528.2 676.5 L528.7 676.1 L529.2 675.6 L529.7 675.2 L530.2 674.9 L530.7 674.7 L531.2 674.5 L531.7 674.4 L532.2 674.2 L532.7 674.0 L533.2 673.9 L533.7 674.0 L534.2 674.1 L534.7 674.2 L535.2 674.3 L535.7 674.2 L536.2 674.2 L536.7 674.2 L537.2 674.1 L537.7 674.1 L538.2 674.0 L538.7 674.0 L539.2 674.0 L539.7 673.9 L540.2 673.9 L540.7 673.8 L541.2 673.8 L541.7 673.7 L542.2 673.7 L542.7 673.7 L543.2 673.6 L543.7 673.6 L544.2 673.5 L544.7 673.5 L545.2 673.5 L545.7 673.4 L546.2 673.4 L546.7 673.3 L547.2 673.2 L547.7 672.9 L548.2 672.6 L548.7 672.2 L549.2 671.9 L549.7 671.6 L550.2 671.3 L550.7 670.9 L551.2 670.3 L551.7 669.6 L552.2 668.9 L552.7 668.2 L553.2 667.9 L553.7 667.8 L554.2 667.7 L554.7 667.5 L555.2 667.4 L555.7 667.3 L556.2 667.2 L556.7 667.1 L557.2 667.0 L557.7 666.9 L558.2 666.8 L558.7 666.6 L559.2 666.4 L559.7 666.0 L560.2 665.6 L560.7 665.2 L561.2 664.9 L561.7 664.5 L562.2 664.1 L562.7 663.7 L563.2 663.4 L563.7 663.0 L564.2 662.6 L564.7 662.2 L565.2 661.9 L565.7 661.5 L566.2 661.1 L566.7 660.8 L567.2 660.5 L567.7 660.3 L568.2 660.1 L568.7 659.9 L569.2 659.7 L569.7 659.5 L570.2 659.3 L570.7 659.1 L571.2 658.9 L571.7 658.7 L572.2 658.5 L572.7 658.3 L573.2 658.1 L573.7 657.9 L574.2 657.8 L574.7 657.9 L575.2 658.0 L575.7 658.1 L576.2 658.2 L576.7 658.3 L577.2 658.5 L577.7 658.6 L578.2 658.7 L578.7 658.8 L579.2 658.3 L579.7 657.8 L580.2 657.3 L580.7 656.8 L581.2 656.2 L581.7 655.7 L582.2 655.2 L582.7 654.7 L583.2 654.2 L583.7 653.7 L584.2 653.2 L584.7 652.7 L585.2 652.2 L585.7 651.6 L586.2 651.1 L586.7 650.6 L587.2 650.1 L587.7 649.6 L588.2 649.1 L588.7 648.6 L589.2 648.1 L589.7 647.6 L590.2 647.0 L590.7 646.6 L591.2 646.6 L591.7 646.6 L592.2 646.7 L592.7 646.7 L593.2 646.8 L593.7 646.8 L594.2 646.8 L594.7 646.9 L595.2 646.9 L595.7 647.0 L596.2 647.0 L596.7 647.0 L597.2 647.1 L597.7 647.1 L598.2 647.2 L598.7 647.0 L599.2 646.3 L599.7 645.5 L600.2 645.3 L600.7 645.2 L601.2 644.6 L601.7 644.0 L602.2 643.4 L602.7 642.9 L603.2 642.3 L603.7 641.7 L604.2 641.1 L604.7 640.5 L605.2 639.9 L605.7 639.4 L606.2 638.8 L606.7 638.2 L607.2 637.6 L607.7 637.0 L608.2 636.4 L608.7 635.9 L609.2 635.3 L609.7 634.7 L610.2 634.1 L610.7 633.8 L611.2 633.9 L611.7 633.9 L612.2 633.9 L612.7 633.9 L613.2 634.0 L613.7 634.0 L614.2 634.0 L614.7 634.1 L615.2 634.1 L615.7 634.1 L616.2 634.1 L616.7 634.2 L617.2 634.2 L617.7 634.2 L618.2 634.3 L618.7 634.3 L619.2 634.3 L619.7 634.3 L620.2 634.4 L620.7 633.6 L621.2 632.4 L621.7 631.2 L622.2 629.9 L622.7 628.7 L623.2 627.5 L623.7 626.2 L624.2 625.2 L624.7 624.6 L625.2 624.0 L625.7 623.4 L626.2 622.8 L626.7 622.2 L627.2 621.6 L627.7 621.1 L628.2 620.5 L628.7 619.9 L629.2 619.3 L629.7 618.7 L630.2 618.5 L630.7 618.4 L631.2 618.2 L631.7 618.0 L632.2 617.9 L632.7 617.7 L633.2 617.5 L633.7 617.4 L633.7 833.4 Z" fill="#a48ea5"/><path d="M202.7 833.4 L202.7 831.5 L203.2 830.9 L203.7 830.2 L204.2 829.6 L204.7 829.0 L205.2 828.4 L205.7 827.7 L206.2 827.1 L206.7 826.5 L207.2 825.9 L207.7 825.2 L208.2 824.6 L208.7 824.0 L209.2 823.6 L209.7 823.5 L210.2 823.5 L210.7 823.4 L211.2 823.4 L211.7 823.3 L212.2 823.3 L212.7 823.2 L213.2 823.2 L213.7 823.1 L214.2 823.0 L214.7 823.0 L215.2 822.9 L215.7 822.9 L216.2 822.8 L216.7 822.8 L217.2 822.7 L217.7 822.7 L218.2 822.6 L218.7 822.6 L219.2 822.5 L219.7 822.5 L220.2 822.3 L220.7 822.0 L221.2 821.7 L221.7 821.4 L222.2 821.1 L222.7 820.8 L223.2 820.5 L223.7 820.2 L224.2 819.8 L224.7 818.8 L225.2 817.8 L225.7 816.9 L226.2 815.9 L226.7 814.9 L227.2 814.0 L227.7 813.0 L228.2 812.0 L228.7 811.1 L229.2 810.1 L229.7 809.1 L230.2 808.2 L230.7 807.2 L231.2 806.2 L231.7 805.8 L232.2 805.5 L232.7 805.2 L233.2 805.1 L233.7 805.1 L234.2 805.1 L234.7 805.1 L235.2 805.1 L235.7 805.1 L236.2 805.1 L236.7 805.1 L237.2 805.2 L237.7 805.2 L238.2 805.2 L238.7 805.2 L239.2 805.2 L239.7 805.2 L240.2 805.2 L240.7 805.2 L241.2 805.0 L241.7 804.7 L242.2 804.3 L242.7 804.0 L243.2 803.7 L243.7 803.4 L244.2 803.1 L244.7 803.0 L245.2 802.8 L245.7 802.6 L246.2 802.4 L246.7 802.2 L247.2 802.1 L247.7 801.9 L248.2 801.7 L248.7 801.5 L249.2 801.3 L249.7 801.2 L250.2 801.0 L250.7 800.8 L251.2 800.6 L251.7 800.4 L252.2 800.2 L252.7 800.1 L253.2 800.0 L253.7 799.9 L254.2 799.9 L254.7 799.8 L255.2 799.7 L255.7 799.7 L256.2 799.6 L256.7 799.5 L257.2 799.5 L257.7 799.4 L258.2 799.4 L258.7 799.3 L259.2 799.2 L259.7 799.2 L260.2 799.1 L260.7 799.2 L261.2 799.2 L261.7 799.3 L262.2 799.3 L262.7 799.4 L263.2 799.4 L263.7 799.5 L264.2 799.3 L264.7 799.1 L265.2 798.8 L265.7 798.6 L266.2 798.4 L266.7 798.1 L267.2 797.9 L267.7 797.7 L268.2 797.4 L268.7 797.2 L269.2 797.0 L269.7 796.7 L270.2 796.4 L270.7 796.0 L271.2 795.6 L271.7 795.6 L272.2 795.5 L272.7 795.4 L273.2 795.3 L273.7 795.2 L274.2 795.1 L274.7 795.0 L275.2 794.9 L275.7 794.8 L276.2 794.7 L276.7 794.6 L277.2 794.5 L277.7 794.4 L278.2 794.4 L278.7 794.3 L279.2 794.2 L279.7 794.1 L280.2 794.0 L280.7 793.9 L281.2 793.8 L281.7 793.7 L282.2 793.6 L282.7 793.2 L283.2 792.9 L283.7 792.5 L284.2 792.2 L284.7 791.9 L285.2 791.6 L285.7 791.3 L286.2 791.1 L286.7 790.8 L287.2 790.6 L287.7 790.3 L288.2 790.1 L288.7 789.9 L289.2 789.6 L289.7 789.4 L290.2 789.1 L290.7 788.9 L291.2 788.6 L291.7 788.4 L292.2 788.1 L292.7 787.9 L293.2 787.7 L293.7 785.4 L294.2 783.1 L294.7 780.8 L295.2 780.4 L295.7 778.9 L296.2 778.8 L296.7 778.8 L297.2 778.7 L297.7 778.6 L298.2 778.6 L298.7 778.5 L299.2 778.5 L299.7 778.4 L300.2 778.4 L300.7 778.3 L301.2 778.2 L301.7 778.2 L302.2 778.1 L302.7 778.1 L303.2 778.0 L303.7 777.9 L304.2 777.8 L304.7 777.3 L305.2 776.8 L305.7 776.4 L306.2 776.3 L306.7 776.3 L307.2 776.3 L307.7 776.3 L308.2 776.3 L308.7 776.2 L309.2 776.2 L309.7 776.2 L310.2 776.1 L310.7 776.0 L311.2 775.9 L311.7 775.8 L312.2 775.8 L312.7 775.7 L313.2 775.6 L313.7 775.5 L314.2 775.4 L314.7 775.3 L315.2 775.3 L315.7 775.2 L316.2 775.1 L316.7 775.0 L317.2 774.9 L317.7 774.8 L318.2 774.8 L318.7 774.7 L319.2 774.6 L319.7 774.5 L320.2 774.4 L320.7 774.3 L321.2 774.3 L321.7 774.2 L322.2 774.1 L322.7 774.0 L323.2 773.9 L323.7 773.6 L324.2 773.1 L324.7 772.7 L325.2 772.3 L325.7 771.8 L326.2 771.4 L326.7 771.0 L327.2 770.5 L327.7 770.1 L328.2 769.7 L328.7 769.3 L329.2 768.9 L329.7 768.9 L330.2 768.9 L330.7 768.9 L331.2 768.8 L331.7 768.8 L332.2 768.8 L332.7 768.8 L333.2 768.7 L333.7 768.7 L334.2 768.7 L334.7 768.7 L335.2 768.6 L335.7 768.6 L336.2 768.6 L336.7 768.6 L337.2 768.5 L337.7 768.5 L338.2 768.5 L338.7 768.5 L339.2 768.4 L339.7 768.4 L340.2 768.4 L340.7 768.4 L341.2 768.4 L341.7 768.4 L342.2 768.4 L342.7 768.4 L343.2 768.4 L343.7 768.2 L344.2 768.0 L344.7 767.6 L345.2 767.0 L345.7 766.4 L346.2 765.8 L346.7 765.2 L347.2 764.6 L347.7 764.0 L348.2 763.4 L348.7 762.8 L349.2 762.2 L349.7 761.6 L350.2 761.0 L350.7 760.4 L351.2 759.7 L351.7 759.1 L352.2 758.8 L352.7 758.6 L353.2 758.5 L353.7 758.3 L354.2 758.2 L354.7 758.0 L355.2 758.0 L355.7 758.0 L356.2 758.0 L356.7 758.0 L357.2 758.0 L357.7 758.0 L358.2 758.0 L358.7 758.0 L359.2 758.0 L359.7 758.0 L360.2 757.9 L360.7 757.7 L361.2 757.5 L361.7 757.3 L362.2 757.0 L362.7 756.8 L363.2 756.6 L363.7 756.4 L364.2 756.2 L364.7 755.9 L365.2 755.7 L365.7 755.5 L366.2 755.3 L366.7 755.1 L367.2 754.8 L367.7 754.6 L368.2 754.3 L368.7 754.0 L369.2 753.7 L369.7 753.3 L370.2 753.0 L370.7 752.7 L371.2 752.4 L371.7 752.0 L372.2 751.7 L372.7 751.4 L373.2 751.1 L373.7 750.7 L374.2 750.4 L374.7 750.1 L375.2 750.0 L375.7 750.1 L376.2 750.2 L376.7 750.3 L377.2 750.4 L377.7 750.5 L378.2 750.7 L378.7 750.8 L379.2 750.4 L379.7 749.8 L380.2 749.2 L380.7 748.6 L381.2 748.0 L381.7 747.4 L382.2 746.7 L382.7 746.1 L383.2 745.5 L383.7 744.9 L384.2 744.3 L384.7 743.7 L385.2 743.1 L385.7 742.4 L386.2 741.8 L386.7 741.2 L387.2 740.6 L387.7 740.0 L388.2 739.4 L388.7 738.7 L389.2 738.1 L389.7 737.5 L390.2 736.8 L390.7 736.2 L391.2 736.2 L391.7 736.2 L392.2 736.2 L392.7 736.2 L393.2 736.2 L393.7 736.3 L394.2 736.3 L394.7 736.3 L395.2 736.3 L395.7 736.3 L396.2 736.3 L396.7 736.3 L397.2 736.3 L397.7 736.4 L398.2 736.4 L398.7 736.4 L399.2 736.4 L399.7 736.3 L400.2 735.9 L400.7 735.5 L401.2 735.2 L401.7 734.8 L402.2 734.5 L402.7 734.1 L403.2 734.0 L403.7 734.0 L404.2 733.9 L404.7 733.8 L405.2 733.8 L405.7 733.8 L406.2 733.8 L406.7 733.8 L407.2 733.8 L407.7 733.8 L408.2 733.8 L408.7 733.8 L409.2 733.6 L409.7 733.0 L410.2 732.5 L410.7 731.9 L411.2 731.4 L411.7 730.8 L412.2 730.2 L412.7 729.7 L413.2 729.1 L413.7 728.6 L414.2 728.0 L414.7 727.7 L415.2 727.4 L415.7 727.1 L416.2 726.9 L416.7 726.6 L417.2 726.3 L417.7 726.2 L418.2 726.1 L418.7 726.1 L419.2 726.0 L419.7 726.0 L420.2 726.0 L420.7 726.0 L421.2 725.9 L421.7 725.9 L422.2 725.9 L422.7 725.8 L423.2 725.8 L423.7 725.8 L424.2 725.8 L424.7 725.7 L425.2 725.7 L425.7 725.7 L426.2 725.6 L426.7 725.6 L427.2 725.6 L427.7 725.6 L428.2 725.5 L428.7 725.5 L429.2 725.4 L429.7 725.4 L430.2 725.3 L430.7 725.2 L431.2 725.1 L431.7 724.9 L432.2 724.8 L432.7 724.7 L433.2 724.6 L433.7 724.4 L434.2 724.3 L434.7 724.2 L435.2 724.1 L435.7 723.9 L436.2 723.8 L436.7 723.7 L437.2 723.6 L437.7 723.4 L438.2 723.3 L438.7 723.2 L439.2 723.1 L439.7 722.9 L440.2 722.3 L440.7 721.6 L441.2 720.8 L441.7 720.1 L442.2 719.3 L442.7 718.6 L443.2 717.8 L443.7 717.1 L444.2 716.3 L444.7 715.6 L445.2 714.8 L445.7 714.1 L446.2 713.3 L446.7 712.6 L447.2 711.8 L447.7 711.1 L448.2 710.3 L448.7 709.6 L449.2 708.8 L449.7 708.1 L450.2 707.3 L450.7 706.6 L451.2 705.8 L451.7 705.2 L452.2 705.0 L452.7 705.0 L453.2 704.9 L453.7 704.9 L454.2 704.8 L454.7 704.7 L455.2 704.7 L455.7 704.6 L456.2 704.5 L456.7 704.5 L457.2 704.4 L457.7 704.4 L458.2 704.3 L458.7 704.2 L459.2 704.2 L459.7 704.1 L460.2 703.2 L460.7 702.4 L461.2 701.5 L461.7 700.7 L462.2 699.8 L462.7 698.9 L463.2 698.1 L463.7 697.2 L464.2 696.6 L464.7 696.5 L465.2 695.6 L465.7 694.8 L466.2 693.9 L466.7 693.2 L467.2 693.2 L467.7 693.2 L468.2 693.2 L468.7 693.2 L469.2 693.2 L469.7 693.2 L470.2 693.2 L470.7 693.2 L471.2 693.2 L471.7 693.2 L472.2 693.2 L472.7 693.2 L473.2 693.2 L473.7 693.2 L474.2 693.2 L474.7 693.2 L475.2 693.2 L475.7 693.2 L476.2 693.2 L476.7 693.2 L477.2 693.2 L477.7 693.2 L478.2 693.2 L478.7 693.2 L479.2 693.2 L479.7 693.1 L480.2 693.0 L480.7 692.9 L481.2 692.8 L481.7 692.6 L482.2 692.5 L482.7 692.4 L483.2 692.3 L483.7 692.1 L484.2 692.0 L484.7 691.9 L485.2 691.8 L485.7 691.6 L486.2 691.5 L486.7 691.4 L487.2 691.3 L487.7 691.1 L488.2 691.0 L488.7 690.9 L489.2 690.8 L489.7 690.6 L490.2 690.5 L490.7 690.4 L491.2 690.3 L491.7 690.1 L492.2 690.0 L492.7 689.9 L493.2 689.8 L493.7 689.6 L494.2 689.5 L494.7 689.4 L495.2 689.3 L495.7 689.3 L496.2 689.3 L496.7 689.4 L497.2 689.5 L497.7 689.6 L498.2 689.7 L498.7 689.8 L499.2 689.8 L499.7 689.9 L500.2 690.0 L500.7 690.1 L501.2 689.9 L501.7 689.6 L502.2 689.3 L502.7 689.0 L503.2 688.7 L503.7 688.5 L504.2 688.2 L504.7 687.9 L505.2 687.7 L505.7 687.6 L506.2 687.4 L506.7 687.2 L507.2 687.0 L507.7 686.8 L508.2 686.7 L508.7 686.8 L509.2 687.0 L509.7 687.2 L510.2 687.1 L510.7 687.0 L511.2 686.8 L511.7 686.7 L512.2 686.5 L512.7 686.3 L513.2 686.1 L513.7 686.0 L514.2 685.8 L514.7 685.7 L515.2 685.6 L515.7 685.6 L516.2 685.5 L516.7 685.5 L517.2 685.4 L517.7 685.4 L518.2 685.3 L518.7 685.3 L519.2 685.2 L519.7 684.4 L520.2 683.6 L520.7 682.8 L521.2 682.3 L521.7 681.9 L522.2 681.5 L522.7 680.7 L523.2 679.9 L523.7 679.1 L524.2 678.3 L524.7 678.1 L525.2 677.9 L525.7 677.7 L526.2 677.6 L526.7 677.4 L527.2 677.2 L527.7 676.9 L528.2 676.5 L528.7 676.1 L529.2 675.6 L529.7 675.3 L530.2 675.1 L530.7 674.9 L531.2 674.7 L531.7 674.5 L532.2 674.3 L532.7 674.1 L533.2 673.9 L533.7 674.0 L534.2 674.1 L534.7 674.2 L535.2 674.3 L535.7 674.2 L536.2 674.2 L536.7 674.2 L537.2 674.1 L537.7 674.1 L538.2 674.0 L538.7 674.0 L539.2 674.0 L539.7 673.9 L540.2 673.9 L540.7 673.8 L541.2 673.8 L541.7 673.7 L542.2 673.7 L542.7 673.7 L543.2 673.6 L543.7 673.6 L544.2 673.5 L544.7 673.5 L545.2 673.5 L545.7 673.4 L546.2 673.4 L546.7 673.3 L547.2 673.2 L547.7 672.9 L548.2 672.6 L548.7 672.2 L549.2 671.9 L549.7 671.6 L550.2 671.3 L550.7 670.9 L551.2 670.3 L551.7 669.6 L552.2 668.9 L552.7 668.2 L553.2 667.9 L553.7 667.8 L554.2 667.7 L554.7 667.5 L555.2 667.4 L555.7 667.3 L556.2 667.2 L556.7 667.1 L557.2 667.0 L557.7 666.9 L558.2 666.8 L558.7 666.6 L559.2 666.4 L559.7 666.0 L560.2 665.6 L560.7 665.2 L561.2 664.9 L561.7 664.5 L562.2 664.1 L562.7 663.7 L563.2 663.4 L563.7 663.0 L564.2 662.8 L564.7 662.6 L565.2 662.4 L565.7 662.2 L566.2 662.0 L566.7 661.7 L567.2 661.5 L567.7 661.3 L568.2 661.1 L568.7 660.9 L569.2 660.7 L569.7 660.5 L570.2 660.3 L570.7 660.1 L571.2 659.9 L571.7 659.8 L572.2 659.6 L572.7 659.4 L573.2 659.3 L573.7 659.1 L574.2 659.0 L574.7 658.8 L575.2 658.7 L575.7 658.7 L576.2 658.6 L576.7 658.6 L577.2 658.5 L577.7 658.6 L578.2 658.7 L578.7 658.8 L579.2 658.3 L579.7 658.3 L580.2 658.2 L580.7 658.2 L581.2 657.7 L581.7 657.2 L582.2 656.7 L582.7 656.2 L583.2 655.6 L583.7 655.1 L584.2 654.6 L584.7 654.1 L585.2 653.6 L585.7 653.1 L586.2 652.6 L586.7 652.0 L587.2 651.5 L587.7 651.0 L588.2 650.5 L588.7 650.0 L589.2 649.5 L589.7 649.0 L590.2 648.4 L590.7 648.0 L591.2 648.0 L591.7 648.0 L592.2 648.0 L592.7 648.0 L593.2 648.0 L593.7 648.0 L594.2 648.0 L594.7 648.0 L595.2 648.0 L595.7 648.0 L596.2 648.0 L596.7 648.0 L597.2 648.0 L597.7 648.0 L598.2 648.0 L598.7 648.0 L599.2 648.0 L599.7 648.0 L600.2 648.0 L600.7 647.9 L601.2 647.3 L601.7 646.8 L602.2 646.2 L602.7 645.7 L603.2 645.1 L603.7 644.6 L604.2 644.0 L604.7 643.5 L605.2 642.9 L605.7 642.4 L606.2 641.8 L606.7 641.3 L607.2 640.7 L607.7 640.2 L608.2 639.6 L608.7 639.1 L609.2 638.5 L609.7 638.0 L610.2 637.4 L610.7 637.1 L611.2 637.1 L611.7 637.1 L612.2 637.1 L612.7 637.1 L613.2 637.1 L613.7 637.1 L614.2 637.1 L614.7 637.1 L615.2 637.1 L615.7 637.1 L616.2 637.1 L616.7 637.1 L617.2 637.1 L617.7 637.1 L618.2 637.1 L618.7 637.1 L619.2 637.1 L619.7 637.1 L620.2 637.1 L620.7 636.3 L621.2 635.1 L621.7 633.8 L622.2 632.6 L622.7 631.3 L623.2 630.0 L623.7 628.8 L624.2 627.5 L624.7 626.2 L625.2 625.0 L625.7 623.7 L626.2 622.8 L626.7 622.2 L627.2 621.9 L627.7 621.7 L628.2 621.5 L628.7 621.3 L629.2 621.1 L629.7 620.9 L630.2 620.7 L630.7 620.5 L631.2 620.3 L631.7 620.1 L632.2 619.9 L632.7 619.8 L633.2 619.6 L633.7 619.4 L633.7 833.4 Z" fill="#bcd6ef"/><path d="M202.7 833.4 L202.7 832.0 L203.2 831.4 L203.7 830.7 L204.2 830.1 L204.7 829.5 L205.2 828.9 L205.7 828.2 L206.2 827.6 L206.7 827.0 L207.2 826.4 L207.7 825.7 L208.2 825.1 L208.7 824.5 L209.2 824.1 L209.7 824.0 L210.2 824.0 L210.7 823.9 L211.2 823.9 L211.7 823.8 L212.2 823.8 L212.7 823.7 L213.2 823.7 L213.7 823.6 L214.2 823.5 L214.7 823.5 L215.2 823.4 L215.7 823.4 L216.2 823.3 L216.7 823.3 L217.2 823.2 L217.7 823.2 L218.2 823.1 L218.7 823.1 L219.2 823.0 L219.7 823.0 L220.2 822.9 L220.7 822.9 L221.2 822.8 L221.7 822.8 L222.2 822.7 L222.7 822.6 L223.2 822.6 L223.7 822.5 L224.2 822.4 L224.7 821.6 L225.2 820.9 L225.7 820.2 L226.2 819.5 L226.7 818.8 L227.2 818.1 L227.7 817.4 L228.2 816.6 L228.7 815.9 L229.2 815.2 L229.7 814.5 L230.2 813.8 L230.7 813.1 L231.2 812.3 L231.7 812.2 L232.2 812.1 L232.7 812.1 L233.2 812.0 L233.7 812.0 L234.2 812.0 L234.7 811.9 L235.2 811.9 L235.7 811.8 L236.2 811.8 L236.7 811.7 L237.2 811.7 L237.7 811.7 L238.2 811.6 L238.7 811.6 L239.2 811.5 L239.7 811.5 L240.2 811.5 L240.7 811.4 L241.2 811.1 L241.7 810.7 L242.2 810.4 L242.7 810.0 L243.2 809.6 L243.7 809.2 L244.2 808.9 L244.7 808.7 L245.2 808.5 L245.7 808.2 L246.2 808.0 L246.7 807.8 L247.2 807.6 L247.7 807.3 L248.2 807.1 L248.7 806.9 L249.2 806.7 L249.7 806.4 L250.2 806.2 L250.7 806.0 L251.2 805.8 L251.7 805.5 L252.2 805.3 L252.7 805.1 L253.2 805.0 L253.7 804.9 L254.2 804.8 L254.7 804.7 L255.2 804.6 L255.7 804.5 L256.2 804.3 L256.7 804.2 L257.2 804.1 L257.7 804.0 L258.2 803.9 L258.7 803.8 L259.2 803.7 L259.7 803.6 L260.2 803.5 L260.7 803.4 L261.2 803.3 L261.7 803.2 L262.2 803.0 L262.7 802.9 L263.2 802.8 L263.7 802.7 L264.2 802.4 L264.7 802.0 L265.2 801.6 L265.7 801.2 L266.2 800.8 L266.7 800.4 L267.2 800.1 L267.7 799.7 L268.2 799.3 L268.7 798.9 L269.2 798.5 L269.7 798.1 L270.2 797.7 L270.7 797.3 L271.2 797.1 L271.7 797.0 L272.2 797.0 L272.7 797.0 L273.2 796.9 L273.7 796.9 L274.2 796.9 L274.7 796.8 L275.2 796.8 L275.7 796.8 L276.2 796.7 L276.7 796.7 L277.2 796.7 L277.7 796.6 L278.2 796.6 L278.7 796.5 L279.2 796.5 L279.7 796.5 L280.2 796.4 L280.7 796.4 L281.2 796.4 L281.7 796.3 L282.2 796.2 L282.7 796.0 L283.2 795.7 L283.7 795.4 L284.2 795.1 L284.7 794.8 L285.2 794.5 L285.7 794.3 L286.2 794.0 L286.7 793.7 L287.2 793.4 L287.7 793.1 L288.2 792.8 L288.7 792.6 L289.2 792.3 L289.7 792.0 L290.2 791.7 L290.7 791.4 L291.2 791.1 L291.7 790.9 L292.2 790.6 L292.7 790.3 L293.2 790.0 L293.7 787.7 L294.2 785.4 L294.7 783.1 L295.2 780.8 L295.7 778.9 L296.2 778.8 L296.7 778.8 L297.2 778.7 L297.7 778.6 L298.2 778.6 L298.7 778.5 L299.2 778.5 L299.7 778.4 L300.2 778.4 L300.7 778.3 L301.2 778.2 L301.7 778.2 L302.2 778.1 L302.7 778.1 L303.2 778.0 L303.7 777.9 L304.2 777.9 L304.7 777.8 L305.2 777.8 L305.7 777.7 L306.2 777.6 L306.7 777.6 L307.2 777.5 L307.7 777.5 L308.2 777.4 L308.7 777.3 L309.2 777.3 L309.7 777.2 L310.2 777.1 L310.7 777.0 L311.2 776.9 L311.7 776.8 L312.2 776.8 L312.7 776.7 L313.2 776.6 L313.7 776.5 L314.2 776.4 L314.7 776.3 L315.2 776.3 L315.7 776.2 L316.2 776.1 L316.7 776.0 L317.2 775.9 L317.7 775.8 L318.2 775.8 L318.7 775.7 L319.2 775.6 L319.7 775.5 L320.2 775.4 L320.7 775.3 L321.2 775.3 L321.7 775.2 L322.2 775.1 L322.7 775.0 L323.2 774.9 L323.7 774.6 L324.2 774.1 L324.7 773.7 L325.2 773.3 L325.7 772.8 L326.2 772.4 L326.7 772.0 L327.2 771.5 L327.7 771.1 L328.2 770.7 L328.7 770.3 L329.2 769.8 L329.7 769.4 L330.2 769.4 L330.7 769.4 L331.2 769.4 L331.7 769.4 L332.2 769.4 L332.7 769.4 L333.2 769.4 L333.7 769.4 L334.2 769.4 L334.7 769.4 L335.2 769.4 L335.7 769.4 L336.2 769.4 L336.7 769.4 L337.2 769.4 L337.7 769.4 L338.2 769.4 L338.7 769.4 L339.2 769.4 L339.7 769.4 L340.2 769.4 L340.7 769.4 L341.2 769.4 L341.7 769.4 L342.2 769.4 L342.7 769.4 L343.2 769.4 L343.7 768.8 L344.2 768.2 L344.7 767.6 L345.2 767.0 L345.7 766.4 L346.2 765.8 L346.7 765.2 L347.2 764.6 L347.7 764.0 L348.2 763.4 L348.7 762.8 L349.2 762.2 L349.7 761.6 L350.2 761.0 L350.7 760.4 L351.2 759.8 L351.7 759.2 L352.2 759.0 L352.7 759.0 L353.2 759.0 L353.7 759.0 L354.2 759.0 L354.7 759.0 L355.2 759.0 L355.7 759.0 L356.2 759.0 L356.7 759.0 L357.2 759.0 L357.7 759.0 L358.2 759.0 L358.7 759.0 L359.2 759.0 L359.7 759.0 L360.2 759.0 L360.7 759.0 L361.2 759.0 L361.7 759.0 L362.2 759.0 L362.7 759.0 L363.2 759.0 L363.7 759.0 L364.2 759.0 L364.7 759.0 L365.2 759.0 L365.7 759.0 L366.2 759.0 L366.7 759.0 L367.2 759.0 L367.7 759.0 L368.2 758.9 L368.7 758.8 L369.2 758.7 L369.7 758.6 L370.2 758.5 L370.7 758.4 L371.2 758.3 L371.7 758.2 L372.2 758.1 L372.7 758.0 L373.2 757.9 L373.7 757.8 L374.2 757.7 L374.7 757.6 L375.2 757.5 L375.7 757.4 L376.2 757.3 L376.7 757.2 L377.2 757.1 L377.7 756.9 L378.2 756.8 L378.7 756.7 L379.2 756.2 L379.7 755.4 L380.2 754.5 L380.7 753.7 L381.2 752.9 L381.7 752.0 L382.2 751.2 L382.7 750.3 L383.2 749.5 L383.7 748.7 L384.2 747.8 L384.7 747.0 L385.2 746.2 L385.7 745.3 L386.2 744.5 L386.7 743.7 L387.2 742.8 L387.7 742.0 L388.2 741.1 L388.7 740.3 L389.2 739.5 L389.7 738.6 L390.2 737.8 L390.7 737.0 L391.2 736.8 L391.7 736.8 L392.2 736.8 L392.7 736.8 L393.2 736.8 L393.7 736.8 L394.2 736.8 L394.7 736.8 L395.2 736.8 L395.7 736.8 L396.2 736.8 L396.7 736.8 L397.2 736.8 L397.7 736.8 L398.2 736.8 L398.7 736.8 L399.2 736.8 L399.7 736.8 L400.2 736.8 L400.7 736.8 L401.2 736.8 L401.7 736.8 L402.2 736.8 L402.7 736.8 L403.2 736.8 L403.7 736.8 L404.2 736.8 L404.7 736.8 L405.2 736.8 L405.7 736.8 L406.2 736.8 L406.7 736.8 L407.2 736.8 L407.7 736.8 L408.2 736.8 L408.7 736.8 L409.2 736.6 L409.7 736.0 L410.2 735.5 L410.7 734.9 L411.2 734.4 L411.7 733.8 L412.2 733.2 L412.7 732.7 L413.2 732.1 L413.7 731.6 L414.2 731.0 L414.7 730.5 L415.2 729.9 L415.7 729.6 L416.2 729.5 L416.7 729.4 L417.2 729.3 L417.7 729.2 L418.2 729.1 L418.7 729.0 L419.2 728.8 L419.7 728.7 L420.2 728.6 L420.7 728.5 L421.2 728.4 L421.7 728.3 L422.2 728.2 L422.7 728.1 L423.2 728.0 L423.7 727.8 L424.2 727.7 L424.7 727.6 L425.2 727.5 L425.7 727.4 L426.2 727.3 L426.7 727.2 L427.2 727.1 L427.7 726.9 L428.2 726.8 L428.7 726.7 L429.2 726.6 L429.7 726.4 L430.2 726.3 L430.7 726.2 L431.2 726.1 L431.7 725.9 L432.2 725.8 L432.7 725.7 L433.2 725.6 L433.7 725.4 L434.2 725.3 L434.7 725.2 L435.2 725.1 L435.7 724.9 L436.2 724.8 L436.7 724.7 L437.2 724.6 L437.7 724.4 L438.2 724.3 L438.7 724.2 L439.2 724.1 L439.7 723.9 L440.2 723.3 L440.7 722.6 L441.2 721.8 L441.7 721.1 L442.2 720.3 L442.7 719.6 L443.2 718.8 L443.7 718.1 L444.2 717.3 L444.7 716.6 L445.2 715.8 L445.7 715.1 L446.2 714.3 L446.7 713.6 L447.2 712.8 L447.7 712.1 L448.2 711.3 L448.7 710.6 L449.2 709.8 L449.7 709.1 L450.2 708.3 L450.7 707.6 L451.2 706.8 L451.7 706.1 L452.2 706.0 L452.7 706.0 L453.2 705.9 L453.7 705.9 L454.2 705.8 L454.7 705.7 L455.2 705.7 L455.7 705.6 L456.2 705.5 L456.7 705.5 L457.2 705.4 L457.7 705.4 L458.2 705.3 L458.7 705.2 L459.2 705.2 L459.7 705.1 L460.2 704.2 L460.7 703.4 L461.2 702.5 L461.7 701.7 L462.2 700.8 L462.7 699.9 L463.2 699.1 L463.7 698.2 L464.2 697.3 L464.7 696.5 L465.2 695.6 L465.7 694.8 L466.2 693.9 L466.7 693.2 L467.2 693.2 L467.7 693.2 L468.2 693.2 L468.7 693.2 L469.2 693.2 L469.7 693.2 L470.2 693.2 L470.7 693.2 L471.2 693.2 L471.7 693.2 L472.2 693.2 L472.7 693.2 L473.2 693.2 L473.7 693.2 L474.2 693.2 L474.7 693.2 L475.2 693.2 L475.7 693.2 L476.2 693.2 L476.7 693.2 L477.2 693.2 L477.7 693.2 L478.2 693.2 L478.7 693.2 L479.2 693.2 L479.7 693.1 L480.2 693.0 L480.7 692.9 L481.2 692.8 L481.7 692.6 L482.2 692.5 L482.7 692.4 L483.2 692.3 L483.7 692.1 L484.2 692.0 L484.7 691.9 L485.2 691.8 L485.7 691.6 L486.2 691.5 L486.7 691.4 L487.2 691.3 L487.7 691.1 L488.2 691.0 L488.7 690.9 L489.2 690.8 L489.7 690.6 L490.2 690.5 L490.7 690.4 L491.2 690.3 L491.7 690.1 L492.2 690.0 L492.7 689.9 L493.2 689.8 L493.7 689.6 L494.2 689.5 L494.7 689.4 L495.2 689.3 L495.7 689.3 L496.2 689.3 L496.7 689.4 L497.2 689.5 L497.7 689.6 L498.2 689.7 L498.7 689.8 L499.2 689.8 L499.7 689.9 L500.2 690.0 L500.7 690.1 L501.2 690.2 L501.7 690.1 L502.2 689.9 L502.7 689.7 L503.2 689.5 L503.7 689.3 L504.2 689.1 L504.7 688.9 L505.2 688.7 L505.7 688.6 L506.2 688.4 L506.7 688.2 L507.2 688.0 L507.7 687.8 L508.2 687.6 L508.7 687.4 L509.2 687.2 L509.7 687.2 L510.2 687.1 L510.7 687.1 L511.2 687.0 L511.7 687.0 L512.2 686.9 L512.7 686.9 L513.2 686.8 L513.7 686.8 L514.2 686.7 L514.7 686.7 L515.2 686.6 L515.7 686.6 L516.2 686.5 L516.7 686.5 L517.2 686.4 L517.7 686.4 L518.2 686.3 L518.7 686.3 L519.2 686.2 L519.7 685.4 L520.2 684.6 L520.7 683.8 L521.2 683.0 L521.7 682.2 L522.2 681.5 L522.7 680.7 L523.2 679.9 L523.7 679.1 L524.2 678.3 L524.7 678.1 L525.2 677.9 L525.7 677.7 L526.2 677.6 L526.7 677.4 L527.2 677.2 L527.7 677.0 L528.2 676.8 L528.7 676.6 L529.2 676.5 L529.7 676.3 L530.2 676.1 L530.7 675.9 L531.2 675.7 L531.7 675.5 L532.2 675.4 L532.7 675.2 L533.2 675.0 L533.7 674.8 L534.2 674.6 L534.7 674.4 L535.2 674.3 L535.7 674.2 L536.2 674.2 L536.7 674.2 L537.2 674.1 L537.7 674.1 L538.2 674.0 L538.7 674.0 L539.2 674.0 L539.7 673.9 L540.2 673.9 L540.7 673.8 L541.2 673.8 L541.7 673.7 L542.2 673.7 L542.7 673.7 L543.2 673.6 L543.7 673.6 L544.2 673.5 L544.7 673.5 L545.2 673.5 L545.7 673.4 L546.2 673.4 L546.7 673.3 L547.2 673.2 L547.7 672.9 L548.2 672.6 L548.7 672.2 L549.2 671.9 L549.7 671.6 L550.2 671.3 L550.7 671.0 L551.2 670.7 L551.7 670.4 L552.2 670.1 L552.7 669.8 L553.2 669.5 L553.7 669.1 L554.2 668.8 L554.7 668.5 L555.2 668.3 L555.7 668.1 L556.2 667.9 L556.7 667.7 L557.2 667.5 L557.7 667.3 L558.2 667.1 L558.7 666.9 L559.2 666.7 L559.7 666.5 L560.2 666.3 L560.7 666.1 L561.2 665.9 L561.7 665.7 L562.2 665.5 L562.7 665.3 L563.2 665.1 L563.7 664.9 L564.2 664.7 L564.7 664.5 L565.2 664.3 L565.7 664.1 L566.2 663.9 L566.7 663.7 L567.2 663.5 L567.7 663.3 L568.2 663.1 L568.7 662.9 L569.2 662.7 L569.7 662.5 L570.2 662.2 L570.7 662.0 L571.2 661.8 L571.7 661.6 L572.2 661.4 L572.7 661.2 L573.2 661.0 L573.7 660.8 L574.2 660.6 L574.7 660.4 L575.2 660.3 L575.7 660.2 L576.2 660.2 L576.7 660.1 L577.2 660.0 L577.7 659.9 L578.2 659.8 L578.7 659.7 L579.2 659.7 L579.7 659.6 L580.2 659.5 L580.7 659.4 L581.2 658.8 L581.7 658.3 L582.2 657.7 L582.7 657.2 L583.2 656.6 L583.7 656.1 L584.2 655.5 L584.7 655.0 L585.2 654.4 L585.7 653.9 L586.2 653.3 L586.7 652.8 L587.2 652.2 L587.7 651.7 L588.2 651.1 L588.7 650.6 L589.2 650.0 L589.7 649.5 L590.2 648.9 L590.7 648.5 L591.2 648.5 L591.7 648.5 L592.2 648.5 L592.7 648.5 L593.2 648.5 L593.7 648.5 L594.2 648.5 L594.7 648.5 L595.2 648.5 L595.7 648.5 L596.2 648.5 L596.7 648.5 L597.2 648.5 L597.7 648.5 L598.2 648.5 L598.7 648.5 L599.2 648.5 L599.7 648.5 L600.2 648.5 L600.7 648.4 L601.2 647.8 L601.7 647.3 L602.2 646.7 L602.7 646.2 L603.2 645.6 L603.7 645.1 L604.2 644.5 L604.7 644.0 L605.2 643.4 L605.7 642.9 L606.2 642.3 L606.7 641.8 L607.2 641.2 L607.7 640.7 L608.2 640.1 L608.7 639.6 L609.2 639.0 L609.7 638.5 L610.2 637.9 L610.7 637.6 L611.2 637.6 L611.7 637.6 L612.2 637.6 L612.7 637.6 L613.2 637.6 L613.7 637.6 L614.2 637.6 L614.7 637.6 L615.2 637.6 L615.7 637.6 L616.2 637.6 L616.7 637.6 L617.2 637.6 L617.7 637.6 L618.2 637.6 L618.7 637.6 L619.2 637.6 L619.7 637.6 L620.2 637.6 L620.7 636.8 L621.2 635.6 L621.7 634.3 L622.2 633.1 L622.7 631.8 L623.2 630.5 L623.7 629.3 L624.2 628.0 L624.7 626.7 L625.2 625.5 L625.7 624.2 L626.2 623.0 L626.7 622.5 L627.2 622.4 L627.7 622.2 L628.2 622.0 L628.7 621.8 L629.2 621.6 L629.7 621.4 L630.2 621.2 L630.7 621.0 L631.2 620.8 L631.7 620.6 L632.2 620.4 L632.7 620.3 L633.2 620.1 L633.7 619.9 L633.7 833.4 Z" fill="#5babcb"/><rect x="198.0" y="832.80" width="440.0" height="1.2" fill="#b9d3f0"/><rect x="245.85" y="833.4" width="1.1" height="10.5" fill="#b9d3f0"/><text x="246.4" y="849.9" font-size="6.5" fill="#5d5b60" text-anchor="middle" font-family="Liberation Sans">May &#x27;18</text><rect x="418.85" y="833.4" width="1.1" height="10.5" fill="#b9d3f0"/><text x="419.4" y="849.9" font-size="6.5" fill="#5d5b60" text-anchor="middle" font-family="Liberation Sans">Jul &#x27;18</text><rect x="592.65" y="833.4" width="1.1" height="10.5" fill="#b9d3f0"/><text x="593.2" y="849.9" font-size="6.5" fill="#5d5b60" text-anchor="middle" font-family="Liberation Sans">Sep &#x27;18</text></svg>
<div class="t" style="top:533px;font-size:21px;line-height:21px;color:#44474b;letter-spacing:0.391px;left:-296.4px;width:1400px;text-align:center;">Cumulative Flow Diagram</div>
<svg style="position:absolute;left:670px;top:523px" width="494" height="345" viewBox="670 523 494 345"><rect x="711.3" y="573.30" width="440.2" height="1" fill="#efefef"/><text x="693.4" y="578.8" font-size="8" fill="#6b686d" text-anchor="end" font-family="Liberation Sans">150</text><rect x="711.3" y="659.70" width="440.2" height="1" fill="#efefef"/><text x="693.4" y="665.2" font-size="8" fill="#6b686d" text-anchor="end" font-family="Liberation Sans">100</text><rect x="711.3" y="746.10" width="440.2" height="1" fill="#efefef"/><text x="693.4" y="751.6" font-size="8" fill="#6b686d" text-anchor="end" font-family="Liberation Sans">50</text><text x="693.4" y="838.2" font-size="8" fill="#6b686d" text-anchor="end" font-family="Liberation Sans">0</text><rect x="711.3" y="832.60" width="440.2" height="1.2" fill="#b9d3f0"/><rect x="756.55" y="833.2" width="1.1" height="10.5" fill="#b9d3f0"/><text x="757.1" y="849.7" font-size="6.5" fill="#5d5b60" text-anchor="middle" font-family="Liberation Sans">May 2018</text><rect x="845.45" y="833.2" width="1.1" height="10.5" fill="#b9d3f0"/><text x="846.0" y="849.7" font-size="6.5" fill="#5d5b60" text-anchor="middle" font-family="Liberation Sans">Jun 2018</text><rect x="932.35" y="833.2" width="1.1" height="10.5" fill="#b9d3f0"/><text x="932.9" y="849.7" font-size="6.5" fill="#5d5b60" text-anchor="middle" font-family="Liberation Sans">Jul 2018</text><rect x="1020.65" y="833.2" width="1.1" height="10.5" fill="#b9d3f0"/><text x="1021.2" y="849.7" font-size="6.5" fill="#5d5b60" text-anchor="middle" font-family="Liberation Sans">Aug 2018</text><rect x="1108.95" y="833.2" width="1.1" height="10.5" fill="#b9d3f0"/><text x="1109.5" y="849.7" font-size="6.5" fill="#5d5b60" text-anchor="middle" font-family="Liberation Sans">Sep 2018</text><circle cx="717.1" cy="798.2" r="3.6" fill="#7cc56e"/><circle cx="714.8" cy="810.4" r="3.6" fill="#7cc56e"/><circle cx="717.7" cy="811.8" r="3.6" fill="#7cc56e"/><circle cx="714.8" cy="822.0" r="3.6" fill="#7cc56e"/><circle cx="714.8" cy="830.7" r="3.6" fill="#7cc56e"/><circle cx="721.5" cy="830.7" r="3.6" fill="#7cc56e"/><circle cx="726.7" cy="803.2" r="3.6" fill="#7cc56e"/><circle cx="737.4" cy="826.3" r="3.6" fill="#7cc56e"/><circle cx="740.9" cy="822.0" r="3.6" fill="#7cc56e"/><circle cx="740.9" cy="829.2" r="3.6" fill="#7cc56e"/><circle cx="740.9" cy="830.7" r="3.6" fill="#7cc56e"/><circle cx="754.2" cy="824.3" r="3.6" fill="#7cc56e"/><circle cx="754.8" cy="825.5" r="3.6" fill="#7cc56e"/><circle cx="760.6" cy="817.1" r="3.6" fill="#7cc56e"/><circle cx="764.9" cy="818.5" r="3.6" fill="#7cc56e"/><circle cx="766.9" cy="818.5" r="3.6" fill="#7cc56e"/><circle cx="775.0" cy="811.8" r="3.6" fill="#7cc56e"/><circle cx="777.9" cy="811.8" r="3.6" fill="#7cc56e"/><circle cx="780.8" cy="808.1" r="3.6" fill="#7cc56e"/><circle cx="780.8" cy="822.0" r="3.6" fill="#7cc56e"/><circle cx="780.8" cy="829.2" r="3.6" fill="#7cc56e"/><circle cx="780.8" cy="830.7" r="3.6" fill="#7cc56e"/><circle cx="795.3" cy="825.5" r="3.6" fill="#7cc56e"/><circle cx="797.6" cy="823.4" r="3.6" fill="#7cc56e"/><circle cx="797.6" cy="830.7" r="3.6" fill="#7cc56e"/><circle cx="806.3" cy="753.3" r="3.6" fill="#7cc56e"/><circle cx="806.3" cy="777.7" r="3.6" fill="#7cc56e"/><circle cx="806.3" cy="789.3" r="3.6" fill="#7cc56e"/><circle cx="806.3" cy="794.5" r="3.6" fill="#7cc56e"/><circle cx="806.3" cy="800.3" r="3.6" fill="#7cc56e"/><circle cx="806.3" cy="825.5" r="3.6" fill="#7cc56e"/><circle cx="806.3" cy="830.7" r="3.6" fill="#7cc56e"/><circle cx="806.3" cy="827.8" r="3.6" fill="#7cc56e"/><circle cx="824.3" cy="830.7" r="3.6" fill="#7cc56e"/><circle cx="835.3" cy="782.9" r="3.6" fill="#7cc56e"/><circle cx="838.8" cy="796.5" r="3.6" fill="#7cc56e"/><circle cx="843.1" cy="813.3" r="3.6" fill="#7cc56e"/><circle cx="843.7" cy="815.0" r="3.6" fill="#7cc56e"/><circle cx="857.6" cy="820.5" r="3.6" fill="#7cc56e"/><circle cx="861.9" cy="806.1" r="3.6" fill="#7cc56e"/><circle cx="864.2" cy="805.5" r="3.6" fill="#7cc56e"/><circle cx="886.5" cy="780.9" r="3.6" fill="#7cc56e"/><circle cx="894.7" cy="607.7" r="3.6" fill="#7cc56e"/><circle cx="894.7" cy="820.5" r="3.6" fill="#7cc56e"/><circle cx="894.7" cy="830.7" r="3.6" fill="#7cc56e"/><circle cx="901.0" cy="734.5" r="3.6" fill="#7cc56e"/><circle cx="903.3" cy="753.3" r="3.6" fill="#7cc56e"/><circle cx="901.0" cy="769.0" r="3.6" fill="#7cc56e"/><circle cx="901.0" cy="796.5" r="3.6" fill="#7cc56e"/><circle cx="903.3" cy="815.6" r="3.6" fill="#7cc56e"/><circle cx="901.0" cy="820.5" r="3.6" fill="#7cc56e"/><circle cx="901.0" cy="830.7" r="3.6" fill="#7cc56e"/><circle cx="923.6" cy="825.5" r="3.6" fill="#7cc56e"/><circle cx="926.5" cy="803.2" r="3.6" fill="#7cc56e"/><circle cx="926.5" cy="808.4" r="3.6" fill="#7cc56e"/><circle cx="926.5" cy="825.5" r="3.6" fill="#7cc56e"/><circle cx="941.0" cy="696.9" r="3.6" fill="#7cc56e"/><circle cx="954.6" cy="788.7" r="3.6" fill="#7cc56e"/><circle cx="954.6" cy="790.1" r="3.6" fill="#7cc56e"/><circle cx="958.4" cy="700.3" r="3.6" fill="#7cc56e"/><circle cx="960.4" cy="817.1" r="3.6" fill="#7cc56e"/><circle cx="960.4" cy="823.4" r="3.6" fill="#7cc56e"/><circle cx="960.4" cy="829.2" r="3.6" fill="#7cc56e"/><circle cx="963.3" cy="755.4" r="3.6" fill="#7cc56e"/><circle cx="963.3" cy="772.2" r="3.6" fill="#7cc56e"/><circle cx="963.3" cy="830.7" r="3.6" fill="#7cc56e"/><circle cx="975.2" cy="724.1" r="3.6" fill="#7cc56e"/><circle cx="975.2" cy="777.7" r="3.6" fill="#7cc56e"/><circle cx="977.8" cy="770.7" r="3.6" fill="#7cc56e"/><circle cx="977.8" cy="817.1" r="3.6" fill="#7cc56e"/><circle cx="977.8" cy="819.1" r="3.6" fill="#7cc56e"/><circle cx="981.5" cy="744.7" r="3.6" fill="#7cc56e"/><circle cx="981.5" cy="827.2" r="3.6" fill="#7cc56e"/><circle cx="981.5" cy="829.2" r="3.6" fill="#7cc56e"/><circle cx="992.3" cy="820.5" r="3.6" fill="#7cc56e"/><circle cx="1006.7" cy="830.7" r="3.6" fill="#7cc56e"/><circle cx="1018.9" cy="817.1" r="3.6" fill="#7cc56e"/><circle cx="1021.2" cy="817.1" r="3.6" fill="#7cc56e"/><circle cx="1027.0" cy="818.5" r="3.6" fill="#7cc56e"/><circle cx="1037.7" cy="811.8" r="3.6" fill="#7cc56e"/><circle cx="1037.7" cy="816.2" r="3.6" fill="#7cc56e"/><circle cx="1037.7" cy="823.4" r="3.6" fill="#7cc56e"/><circle cx="1044.4" cy="817.1" r="3.6" fill="#7cc56e"/><circle cx="1047.3" cy="830.7" r="3.6" fill="#7cc56e"/><circle cx="1058.0" cy="818.5" r="3.6" fill="#7cc56e"/><circle cx="1066.1" cy="815.3" r="3.6" fill="#7cc56e"/><circle cx="1066.1" cy="818.5" r="3.6" fill="#7cc56e"/><circle cx="1066.1" cy="827.2" r="3.6" fill="#7cc56e"/><circle cx="1064.1" cy="830.7" r="3.6" fill="#7cc56e"/><circle cx="1074.8" cy="825.5" r="3.6" fill="#7cc56e"/><circle cx="1078.6" cy="820.5" r="3.6" fill="#7cc56e"/><circle cx="1082.9" cy="810.4" r="3.6" fill="#7cc56e"/><circle cx="1080.6" cy="827.2" r="3.6" fill="#7cc56e"/><circle cx="1087.2" cy="817.1" r="3.6" fill="#7cc56e"/><circle cx="1097.4" cy="813.3" r="3.6" fill="#7cc56e"/><circle cx="1097.4" cy="818.5" r="3.6" fill="#7cc56e"/><circle cx="1101.4" cy="793.0" r="3.6" fill="#7cc56e"/><circle cx="1101.4" cy="810.4" r="3.6" fill="#7cc56e"/><circle cx="1101.4" cy="822.0" r="3.6" fill="#7cc56e"/><circle cx="1103.7" cy="820.5" r="3.6" fill="#7cc56e"/><circle cx="1107.5" cy="829.2" r="3.6" fill="#7cc56e"/><circle cx="1118.2" cy="818.5" r="3.6" fill="#7cc56e"/><circle cx="1118.2" cy="822.0" r="3.6" fill="#7cc56e"/><circle cx="1120.3" cy="829.2" r="3.6" fill="#7cc56e"/><circle cx="1122.6" cy="817.1" r="3.6" fill="#7cc56e"/><circle cx="1124.6" cy="827.2" r="3.6" fill="#7cc56e"/><circle cx="1126.9" cy="815.3" r="3.6" fill="#7cc56e"/><circle cx="1134.7" cy="823.4" r="3.6" fill="#7cc56e"/><circle cx="1134.7" cy="827.2" r="3.6" fill="#7cc56e"/><circle cx="1138.5" cy="810.4" r="3.6" fill="#7cc56e"/><circle cx="1138.5" cy="813.3" r="3.6" fill="#7cc56e"/><circle cx="1141.4" cy="829.2" r="3.6" fill="#7cc56e"/><circle cx="1144.3" cy="810.4" r="3.6" fill="#7cc56e"/><circle cx="1147.2" cy="830.7" r="3.6" fill="#7cc56e"/><circle cx="717.1" cy="822.0" r="3.6" fill="#f7a29c"/><circle cx="737.4" cy="798.2" r="3.6" fill="#f7a29c"/><circle cx="764.0" cy="830.7" r="3.6" fill="#f7a29c"/><circle cx="838.2" cy="830.7" r="3.6" fill="#f7a29c"/><circle cx="861.9" cy="830.7" r="3.6" fill="#f7a29c"/><circle cx="1087.2" cy="830.7" r="3.6" fill="#f7a29c"/><circle cx="1103.7" cy="830.7" r="3.6" fill="#f7a29c"/><circle cx="803.4" cy="820.5" r="3.6" fill="#fdc65a"/><circle cx="820.5" cy="829.2" r="3.6" fill="#fdc65a"/><circle cx="857.6" cy="791.0" r="3.6" fill="#fdc65a"/><circle cx="866.3" cy="779.4" r="3.6" fill="#fdc65a"/><circle cx="863.4" cy="830.7" r="3.6" fill="#fdc65a"/><circle cx="903.3" cy="827.2" r="3.6" fill="#fdc65a"/><circle cx="930.0" cy="830.7" r="3.6" fill="#fdc65a"/><circle cx="941.0" cy="801.7" r="3.6" fill="#fdc65a"/><circle cx="946.5" cy="720.9" r="3.6" fill="#fdc65a"/><circle cx="958.4" cy="810.4" r="3.6" fill="#fdc65a"/><circle cx="864.2" cy="817.1" r="3.6" fill="#68ade2"/><circle cx="884.5" cy="818.5" r="3.6" fill="#68ade2"/><circle cx="946.5" cy="782.9" r="3.6" fill="#68ade2"/><circle cx="977.8" cy="806.9" r="3.6" fill="#68ade2"/><circle cx="981.5" cy="701.8" r="3.6" fill="#68ade2"/><circle cx="1047.3" cy="817.1" r="3.6" fill="#68ade2"/><circle cx="717.1" cy="822.0" r="3.6" fill="#9a6f97"/><circle cx="861.9" cy="830.7" r="3.6" fill="#9a6f97"/><circle cx="894.7" cy="825.5" r="3.6" fill="#9a6f97"/><circle cx="967.1" cy="830.7" r="3.6" fill="#9a6f97"/><circle cx="1140.8" cy="820.5" r="3.6" fill="#9a6f97"/><circle cx="1103.7" cy="830.7" r="3.6" fill="#9a6f97"/></svg>
<div class="t" style="top:533px;font-size:21px;line-height:21px;color:#44474b;letter-spacing:0.332px;left:217.5px;width:1400px;text-align:center;">Cycle Time Scatterplot</div>
<svg style="position:absolute;left:1184px;top:523px" width="496" height="345" viewBox="1184 523 496 345"><rect x="1223.8" y="573.30" width="441.9" height="1" fill="#efefef"/><text x="1206.4" y="578.8" font-size="8" fill="#6b686d" text-anchor="end" font-family="Liberation Sans">417</text><rect x="1223.8" y="659.70" width="441.9" height="1" fill="#efefef"/><text x="1206.4" y="665.2" font-size="8" fill="#6b686d" text-anchor="end" font-family="Liberation Sans">278</text><rect x="1223.8" y="746.10" width="441.9" height="1" fill="#efefef"/><text x="1206.4" y="751.6" font-size="8" fill="#6b686d" text-anchor="end" font-family="Liberation Sans">139</text><text x="1206.4" y="838.2" font-size="8" fill="#6b686d" text-anchor="end" font-family="Liberation Sans">0</text><rect x="1228.7" y="828.0" width="18.3" height="5.2" fill="#bad6ee"/><rect x="1228.7" y="802.7" width="18.3" height="22.9" fill="#a67b9a"/><rect x="1228.7" y="790.9" width="18.3" height="9.6" fill="#fdcb60"/><rect x="1249.0" y="831.4" width="16.8" height="1.7" fill="#a67b9a"/><rect x="1249.0" y="814.9" width="16.8" height="14.5" fill="#fdcb60"/><rect x="1268.4" y="827.1" width="17.7" height="6.1" fill="#bad6ee"/><rect x="1268.4" y="822.7" width="17.7" height="2.3" fill="#a67b9a"/><rect x="1268.4" y="815.8" width="17.7" height="4.9" fill="#fdcb60"/><rect x="1289.0" y="830.0" width="16.5" height="3.2" fill="#bad6ee"/><rect x="1289.0" y="817.2" width="16.5" height="10.7" fill="#a67b9a"/><rect x="1289.0" y="812.9" width="16.5" height="2.0" fill="#f9aaa0"/><rect x="1289.0" y="809.1" width="16.5" height="3.5" fill="#fdcb60"/><rect x="1308.1" y="828.0" width="17.7" height="5.2" fill="#bad6ee"/><rect x="1308.1" y="795.5" width="17.7" height="30.1" fill="#a67b9a"/><rect x="1308.1" y="778.7" width="17.7" height="14.5" fill="#f9aaa0"/><rect x="1308.1" y="737.0" width="17.7" height="39.7" fill="#fdcb60"/><rect x="1347.5" y="830.0" width="16.8" height="3.2" fill="#bad6ee"/><rect x="1347.5" y="813.5" width="16.8" height="14.5" fill="#a67b9a"/><rect x="1347.5" y="804.8" width="16.8" height="6.7" fill="#f9aaa0"/><rect x="1347.5" y="793.2" width="16.8" height="9.6" fill="#fdcb60"/><rect x="1367.2" y="814.9" width="17.4" height="15.4" fill="#a67b9a"/><rect x="1367.2" y="802.7" width="17.4" height="9.9" fill="#f9aaa0"/><rect x="1367.2" y="764.2" width="17.4" height="36.2" fill="#fdcb60"/><rect x="1387.2" y="821.6" width="16.8" height="6.4" fill="#f9aaa0"/><rect x="1387.2" y="812.6" width="16.8" height="6.7" fill="#fdcb60"/><rect x="1406.3" y="813.5" width="18.3" height="19.7" fill="#bad6ee"/><rect x="1406.3" y="754.9" width="18.3" height="56.2" fill="#a67b9a"/><rect x="1406.3" y="701.9" width="18.3" height="50.1" fill="#f9aaa0"/><rect x="1406.3" y="636.1" width="18.3" height="63.5" fill="#fdcb60"/><rect x="1426.6" y="822.2" width="17.1" height="8.7" fill="#f9aaa0"/><rect x="1426.6" y="810.0" width="17.1" height="9.9" fill="#fdcb60"/><rect x="1446.0" y="823.0" width="16.8" height="8.7" fill="#a67b9a"/><rect x="1446.0" y="783.9" width="16.8" height="36.8" fill="#f9aaa0"/><rect x="1446.0" y="717.8" width="16.8" height="63.2" fill="#fdcb60"/><rect x="1464.9" y="792.6" width="18.3" height="40.6" fill="#bad6ee"/><rect x="1464.9" y="786.8" width="18.3" height="4.1" fill="#a67b9a"/><rect x="1464.9" y="694.1" width="18.3" height="91.0" fill="#f9aaa0"/><rect x="1464.9" y="670.9" width="18.3" height="20.0" fill="#fdcb60"/><rect x="1485.7" y="814.9" width="16.8" height="18.3" fill="#bad6ee"/><rect x="1485.7" y="808.5" width="16.8" height="3.5" fill="#a67b9a"/><rect x="1485.7" y="761.9" width="16.8" height="44.3" fill="#f9aaa0"/><rect x="1485.7" y="653.2" width="16.8" height="106.1" fill="#fdcb60"/><rect x="1524.9" y="828.0" width="16.8" height="2.3" fill="#a67b9a"/><rect x="1524.9" y="820.7" width="16.8" height="3.8" fill="#fdcb60"/><rect x="1544.3" y="828.5" width="16.8" height="1.7" fill="#a67b9a"/><rect x="1544.3" y="814.9" width="16.8" height="12.5" fill="#f9aaa0"/><rect x="1544.3" y="795.5" width="16.8" height="15.6" fill="#fdcb60"/><rect x="1564.0" y="830.0" width="17.4" height="3.2" fill="#bad6ee"/><rect x="1564.0" y="818.4" width="17.4" height="6.1" fill="#fdcb60"/><rect x="1583.7" y="814.9" width="17.4" height="10.7" fill="#fdcb60"/><rect x="1603.1" y="824.5" width="18.3" height="5.8" fill="#a67b9a"/><rect x="1603.1" y="819.8" width="18.3" height="2.3" fill="#f9aaa0"/><rect x="1603.1" y="814.9" width="18.3" height="2.3" fill="#a67b9a"/><rect x="1603.1" y="789.4" width="18.3" height="23.2" fill="#fdcb60"/><rect x="1623.4" y="830.0" width="17.4" height="1.7" fill="#a67b9a"/><rect x="1623.4" y="821.3" width="17.4" height="6.7" fill="#f9aaa0"/><rect x="1623.4" y="814.9" width="17.4" height="4.3" fill="#a67b9a"/><rect x="1623.4" y="804.2" width="17.4" height="8.4" fill="#fdcb60"/><rect x="1643.1" y="830.9" width="18.0" height="2.3" fill="#f9aaa0"/><rect x="1643.1" y="816.4" width="18.0" height="10.7" fill="#a67b9a"/><rect x="1643.1" y="808.5" width="18.0" height="4.9" fill="#f9aaa0"/><rect x="1643.1" y="781.0" width="18.0" height="22.3" fill="#fdcb60"/><rect x="1223.8" y="832.60" width="441.9" height="1.2" fill="#b9d3f0"/><rect x="1269.55" y="833.2" width="1.1" height="10.5" fill="#b9d3f0"/><text x="1270.1" y="849.7" font-size="6.5" fill="#5d5b60" text-anchor="middle" font-family="Liberation Sans">May 2018</text><rect x="1355.65" y="833.2" width="1.1" height="10.5" fill="#b9d3f0"/><text x="1356.2" y="849.7" font-size="6.5" fill="#5d5b60" text-anchor="middle" font-family="Liberation Sans">Jun 2018</text><rect x="1441.15" y="833.2" width="1.1" height="10.5" fill="#b9d3f0"/><text x="1441.7" y="849.7" font-size="6.5" fill="#5d5b60" text-anchor="middle" font-family="Liberation Sans">Jul 2018</text><rect x="1528.05" y="833.2" width="1.1" height="10.5" fill="#b9d3f0"/><text x="1528.6" y="849.7" font-size="6.5" fill="#5d5b60" text-anchor="middle" font-family="Liberation Sans">Aug 2018</text><rect x="1615.05" y="833.2" width="1.1" height="10.5" fill="#b9d3f0"/><text x="1615.6" y="849.7" font-size="6.5" fill="#5d5b60" text-anchor="middle" font-family="Liberation Sans">Sep 2018</text></svg>
<div class="t" style="top:533px;font-size:21px;line-height:21px;color:#44474b;letter-spacing:0.244px;left:731.1px;width:1400px;text-align:center;">Cycle Time Breakdown Chart</div>
<svg style="position:absolute;left:156px;top:888px" width="494" height="345" viewBox="156 888 494 345"><rect x="192.9" y="938.30" width="445.1" height="1" fill="#efefef"/><text x="175.2" y="943.8" font-size="8" fill="#6b686d" text-anchor="end" font-family="Liberation Sans">30</text><rect x="192.9" y="1024.70" width="445.1" height="1" fill="#efefef"/><text x="175.2" y="1030.2" font-size="8" fill="#6b686d" text-anchor="end" font-family="Liberation Sans">20</text><rect x="192.9" y="1111.10" width="445.1" height="1" fill="#efefef"/><text x="175.2" y="1116.6" font-size="8" fill="#6b686d" text-anchor="end" font-family="Liberation Sans">10</text><text x="175.2" y="1203.2" font-size="8" fill="#6b686d" text-anchor="end" font-family="Liberation Sans">0</text><rect x="193.44" y="990.8" width="3.63" height="207.4" fill="#7ab6e2"/><rect x="196.92" y="1103.2" width="3.91" height="95.0" fill="#7ab6e2"/><rect x="200.68" y="1129.1" width="3.05" height="69.1" fill="#7ab6e2"/><rect x="203.58" y="1111.8" width="3.05" height="86.4" fill="#7ab6e2"/><rect x="206.47" y="1146.4" width="3.91" height="51.8" fill="#7ab6e2"/><rect x="210.24" y="1129.1" width="3.63" height="69.1" fill="#7ab6e2"/><rect x="213.71" y="1111.8" width="3.63" height="86.4" fill="#7ab6e2"/><rect x="217.19" y="1094.5" width="2.47" height="103.7" fill="#7ab6e2"/><rect x="219.50" y="1068.6" width="3.63" height="129.6" fill="#7ab6e2"/><rect x="222.98" y="1163.6" width="3.91" height="34.6" fill="#7ab6e2"/><rect x="226.74" y="1180.9" width="3.91" height="17.3" fill="#7ab6e2"/><rect x="230.51" y="1155.0" width="3.63" height="43.2" fill="#7ab6e2"/><rect x="233.98" y="1146.4" width="2.47" height="51.8" fill="#7ab6e2"/><rect x="236.30" y="1180.9" width="4.20" height="17.3" fill="#7ab6e2"/><rect x="240.36" y="1172.3" width="3.34" height="25.9" fill="#7ab6e2"/><rect x="243.54" y="1189.6" width="3.63" height="8.6" fill="#7ab6e2"/><rect x="247.02" y="1180.9" width="3.63" height="17.3" fill="#7ab6e2"/><rect x="250.49" y="1189.6" width="6.81" height="8.6" fill="#7ab6e2"/><rect x="257.15" y="1180.9" width="6.81" height="17.3" fill="#7ab6e2"/><rect x="263.81" y="1189.6" width="10.29" height="8.6" fill="#7ab6e2"/><rect x="273.95" y="1172.3" width="3.05" height="25.9" fill="#7ab6e2"/><rect x="276.85" y="1189.6" width="3.63" height="8.6" fill="#7ab6e2"/><rect x="287.56" y="1180.9" width="3.63" height="17.3" fill="#7ab6e2"/><rect x="291.04" y="1189.6" width="6.23" height="8.6" fill="#7ab6e2"/><rect x="297.12" y="1180.9" width="3.63" height="17.3" fill="#7ab6e2"/><rect x="307.25" y="1189.6" width="10.87" height="8.6" fill="#7ab6e2"/><rect x="341.14" y="1189.6" width="3.63" height="8.6" fill="#7ab6e2"/><rect x="344.61" y="1180.9" width="3.34" height="17.3" fill="#7ab6e2"/><rect x="361.41" y="1189.6" width="3.63" height="8.6" fill="#7ab6e2"/><rect x="381.68" y="1189.6" width="3.63" height="8.6" fill="#7ab6e2"/><rect x="401.95" y="1189.6" width="3.63" height="8.6" fill="#7ab6e2"/><rect x="408.33" y="1189.6" width="3.34" height="8.6" fill="#7ab6e2"/><rect x="445.40" y="1189.6" width="7.39" height="8.6" fill="#7ab6e2"/><rect x="456.40" y="1189.6" width="3.05" height="8.6" fill="#7ab6e2"/><rect x="630.74" y="1189.6" width="3.05" height="8.6" fill="#7ab6e2"/><rect x="192.9" y="1197.60" width="445.1" height="1.2" fill="#b9d3f0"/><rect x="274.85" y="1198.2" width="1.1" height="9.0" fill="#b9d3f0"/><text x="275.4" y="1214.7" font-size="6.5" fill="#5d5b60" text-anchor="middle" font-family="Liberation Sans">25</text><rect x="358.85" y="1198.2" width="1.1" height="9.0" fill="#b9d3f0"/><text x="359.4" y="1214.7" font-size="6.5" fill="#5d5b60" text-anchor="middle" font-family="Liberation Sans">50</text><rect x="442.85" y="1198.2" width="1.1" height="9.0" fill="#b9d3f0"/><text x="443.4" y="1214.7" font-size="6.5" fill="#5d5b60" text-anchor="middle" font-family="Liberation Sans">75</text><rect x="526.75" y="1198.2" width="1.1" height="9.0" fill="#b9d3f0"/><text x="527.3" y="1214.7" font-size="6.5" fill="#5d5b60" text-anchor="middle" font-family="Liberation Sans">100</text><rect x="610.75" y="1198.2" width="1.1" height="9.0" fill="#b9d3f0"/><text x="611.3" y="1214.7" font-size="6.5" fill="#5d5b60" text-anchor="middle" font-family="Liberation Sans">125</text></svg>
<div class="t" style="top:898px;font-size:21px;line-height:21px;color:#44474b;letter-spacing:0.243px;left:-296.5px;width:1400px;text-align:center;">Cycle Time Histogram</div>
<svg style="position:absolute;left:670px;top:888px" width="494" height="345" viewBox="670 888 494 345"><rect x="706.4" y="938.30" width="446.0" height="1" fill="#efefef"/><text x="689.6" y="943.8" font-size="8" fill="#6b686d" text-anchor="end" font-family="Liberation Sans">12</text><rect x="706.4" y="981.57" width="446.0" height="1" fill="#efefef"/><text x="689.6" y="987.1" font-size="8" fill="#6b686d" text-anchor="end" font-family="Liberation Sans">10</text><rect x="706.4" y="1024.83" width="446.0" height="1" fill="#efefef"/><text x="689.6" y="1030.3" font-size="8" fill="#6b686d" text-anchor="end" font-family="Liberation Sans">8</text><rect x="706.4" y="1068.10" width="446.0" height="1" fill="#efefef"/><text x="689.6" y="1073.6" font-size="8" fill="#6b686d" text-anchor="end" font-family="Liberation Sans">6</text><rect x="706.4" y="1111.37" width="446.0" height="1" fill="#efefef"/><text x="689.6" y="1116.9" font-size="8" fill="#6b686d" text-anchor="end" font-family="Liberation Sans">4</text><rect x="706.4" y="1154.63" width="446.0" height="1" fill="#efefef"/><text x="689.6" y="1160.1" font-size="8" fill="#6b686d" text-anchor="end" font-family="Liberation Sans">2</text><text x="689.6" y="1203.4" font-size="8" fill="#6b686d" text-anchor="end" font-family="Liberation Sans">0</text><rect x="705.80" y="938.8" width="1.2" height="259.6" fill="#ececec"/><rect x="817.00" y="938.8" width="1.2" height="259.6" fill="#ececec"/><rect x="928.50" y="938.8" width="1.2" height="259.6" fill="#ececec"/><rect x="1038.90" y="938.8" width="1.2" height="259.6" fill="#ececec"/><rect x="1151.80" y="938.8" width="1.2" height="259.6" fill="#ececec"/><rect x="706.4" y="1197.80" width="446.0" height="1.2" fill="#b9d3f0"/><rect x="705.85" y="1198.4" width="1.1" height="10.4" fill="#b9d3f0"/><rect x="817.05" y="1198.4" width="1.1" height="10.4" fill="#b9d3f0"/><rect x="928.55" y="1198.4" width="1.1" height="10.4" fill="#b9d3f0"/><rect x="1038.95" y="1198.4" width="1.1" height="10.4" fill="#b9d3f0"/><rect x="1151.85" y="1198.4" width="1.1" height="10.4" fill="#b9d3f0"/><text x="762.0" y="1214.8" font-size="6.5" fill="#5d5b60" text-anchor="middle" font-family="Liberation Sans">Development</text><text x="873.3" y="1214.8" font-size="6.5" fill="#5d5b60" text-anchor="middle" font-family="Liberation Sans">Code review</text><text x="984.6" y="1214.8" font-size="6.5" fill="#5d5b60" text-anchor="middle" font-family="Liberation Sans">Code review (Done)</text><text x="1095.9" y="1214.8" font-size="6.5" fill="#5d5b60" text-anchor="middle" font-family="Liberation Sans">Testing</text><circle cx="762" cy="1090.2" r="3.7" fill="#7ac46d"/><circle cx="762" cy="1111.9" r="3.7" fill="#7ac46d"/><circle cx="762" cy="1155.1" r="3.7" fill="#7ac46d"/><circle cx="873.5" cy="1133.5" r="3.7" fill="#7ac46d"/><circle cx="984" cy="982.1" r="3.7" fill="#7ac46d"/><circle cx="984" cy="1111.9" r="3.7" fill="#7ac46d"/><circle cx="1095.5" cy="1003.7" r="3.7" fill="#7ac46d"/><circle cx="1095.5" cy="1090.2" r="3.7" fill="#7ac46d"/><circle cx="1095.5" cy="1155.1" r="3.7" fill="#7ac46d"/></svg>
<div class="t" style="top:898px;font-size:21px;line-height:21px;color:#44474b;letter-spacing:0.514px;left:217.6px;width:1400px;text-align:center;">Aging Chart</div>
<svg style="position:absolute;left:1184px;top:888px" width="496" height="345" viewBox="1184 888 496 345"><rect x="1220.9" y="938.30" width="444.8" height="1" fill="#efefef"/><text x="1202.6" y="943.8" font-size="8" fill="#6b686d" text-anchor="end" font-family="Liberation Sans">10</text><rect x="1220.9" y="990.22" width="444.8" height="1" fill="#efefef"/><text x="1202.6" y="995.7" font-size="8" fill="#6b686d" text-anchor="end" font-family="Liberation Sans">8</text><rect x="1220.9" y="1042.14" width="444.8" height="1" fill="#efefef"/><text x="1202.6" y="1047.6" font-size="8" fill="#6b686d" text-anchor="end" font-family="Liberation Sans">6</text><rect x="1220.9" y="1094.06" width="444.8" height="1" fill="#efefef"/><text x="1202.6" y="1099.6" font-size="8" fill="#6b686d" text-anchor="end" font-family="Liberation Sans">4</text><rect x="1220.9" y="1145.98" width="444.8" height="1" fill="#efefef"/><text x="1202.6" y="1151.5" font-size="8" fill="#6b686d" text-anchor="end" font-family="Liberation Sans">2</text><text x="1202.6" y="1203.4" font-size="8" fill="#6b686d" text-anchor="end" font-family="Liberation Sans">0</text><rect x="1229.0" y="1172.5" width="3.5" height="25.9" fill="#f7a49e"/><rect x="1231.2" y="1172.5" width="1.3" height="25.9" fill="#9a6f97"/><rect x="1229.0" y="1120.6" width="3.5" height="50.8" fill="#7dc470"/><rect x="1237.1" y="1172.5" width="3.5" height="25.9" fill="#7dc470"/><rect x="1249.3" y="1172.5" width="3.5" height="25.9" fill="#f7a49e"/><rect x="1251.5" y="1172.5" width="1.3" height="25.9" fill="#9a6f97"/><rect x="1249.3" y="1094.7" width="3.5" height="76.8" fill="#7dc470"/><rect x="1266.1" y="1146.6" width="3.5" height="51.8" fill="#7dc470"/><rect x="1274.2" y="1172.5" width="3.5" height="25.9" fill="#f7a49e"/><rect x="1276.4" y="1172.5" width="1.3" height="25.9" fill="#9a6f97"/><rect x="1274.2" y="1146.6" width="3.5" height="24.9" fill="#7dc470"/><rect x="1280.0" y="1172.5" width="1.7" height="25.9" fill="#b5b8b4"/><rect x="1288.1" y="1172.5" width="1.7" height="25.9" fill="#7dc470"/><rect x="1292.2" y="1094.7" width="3.5" height="103.7" fill="#7dc470"/><rect x="1309.0" y="1120.6" width="3.5" height="77.8" fill="#7dc470"/><rect x="1317.4" y="991.0" width="3.5" height="207.4" fill="#7dc470"/><rect x="1331.6" y="1172.5" width="1.7" height="25.9" fill="#fdc65a"/><rect x="1335.6" y="1172.5" width="3.5" height="25.9" fill="#7dc470"/><rect x="1346.1" y="1172.5" width="1.7" height="25.9" fill="#b5b8b4"/><rect x="1350.1" y="1172.5" width="3.5" height="25.9" fill="#f7a49e"/><rect x="1352.3" y="1172.5" width="1.3" height="25.9" fill="#9a6f97"/><rect x="1350.1" y="1146.6" width="3.5" height="24.9" fill="#7dc470"/><rect x="1355.1" y="1146.6" width="3.5" height="51.8" fill="#7dc470"/><rect x="1368.4" y="1172.5" width="1.7" height="25.9" fill="#7dc470"/><rect x="1368.4" y="1146.6" width="1.7" height="24.9" fill="#fdc65a"/><rect x="1374.8" y="1172.5" width="3.5" height="25.9" fill="#f7a49e"/><rect x="1376.9" y="1172.5" width="1.3" height="25.9" fill="#9a6f97"/><rect x="1374.8" y="1120.6" width="3.5" height="50.8" fill="#7dc470"/><rect x="1374.8" y="1094.7" width="3.5" height="24.9" fill="#fdc65a"/><rect x="1395.6" y="1172.5" width="3.5" height="25.9" fill="#6aaedf"/><rect x="1406.0" y="1172.5" width="3.5" height="25.9" fill="#f7a49e"/><rect x="1408.2" y="1172.5" width="1.3" height="25.9" fill="#9a6f97"/><rect x="1406.0" y="1068.8" width="3.5" height="102.7" fill="#7dc470"/><rect x="1412.4" y="1042.9" width="3.5" height="155.5" fill="#7dc470"/><rect x="1417.4" y="1146.6" width="2.3" height="51.8" fill="#7dc470"/><rect x="1417.4" y="1120.6" width="2.3" height="24.9" fill="#f7a49e"/><rect x="1435.0" y="1172.5" width="1.7" height="25.9" fill="#7dc470"/><rect x="1438.5" y="1094.7" width="3.5" height="103.7" fill="#7dc470"/><rect x="1452.4" y="1172.5" width="3.5" height="25.9" fill="#7dc470"/><rect x="1452.4" y="1146.6" width="3.5" height="24.9" fill="#fdc65a"/><rect x="1457.9" y="1172.5" width="3.5" height="25.9" fill="#6aaedf"/><rect x="1457.9" y="1146.6" width="3.5" height="24.9" fill="#fdc65a"/><rect x="1467.5" y="1120.6" width="2.3" height="24.9" fill="#7dc470"/><rect x="1472.1" y="1146.6" width="1.7" height="51.8" fill="#7dc470"/><rect x="1472.1" y="1120.6" width="1.7" height="24.9" fill="#b5b8b4"/><rect x="1476.2" y="1120.6" width="3.5" height="24.9" fill="#7dc470"/><rect x="1478.5" y="1146.6" width="3.5" height="51.8" fill="#f7a49e"/><rect x="1480.7" y="1146.6" width="1.3" height="51.8" fill="#9a6f97"/><rect x="1486.6" y="1146.6" width="1.7" height="51.8" fill="#7dc470"/><rect x="1493.0" y="1172.5" width="3.5" height="25.9" fill="#6aaedf"/><rect x="1493.0" y="1094.7" width="3.5" height="76.8" fill="#7dc470"/><rect x="1504.6" y="1172.5" width="3.5" height="25.9" fill="#7dc470"/><rect x="1519.1" y="1172.5" width="3.5" height="25.9" fill="#7dc470"/><rect x="1529.2" y="1172.5" width="1.7" height="25.9" fill="#b5b8b4"/><rect x="1532.7" y="1172.5" width="3.5" height="25.9" fill="#7dc470"/><rect x="1538.5" y="1172.5" width="3.5" height="25.9" fill="#7dc470"/><rect x="1550.1" y="1042.9" width="3.5" height="155.5" fill="#7dc470"/><rect x="1558.8" y="1172.5" width="3.5" height="25.9" fill="#6aaedf"/><rect x="1558.8" y="1146.6" width="3.5" height="24.9" fill="#7dc470"/><rect x="1570.4" y="1172.5" width="3.5" height="25.9" fill="#7dc470"/><rect x="1579.0" y="1120.6" width="3.5" height="77.8" fill="#7dc470"/><rect x="1587.2" y="1172.5" width="1.7" height="25.9" fill="#7dc470"/><rect x="1595.3" y="1172.5" width="1.7" height="25.9" fill="#7dc470"/><rect x="1599.3" y="1172.5" width="3.5" height="25.9" fill="#f7a49e"/><rect x="1601.5" y="1172.5" width="1.3" height="25.9" fill="#9a6f97"/><rect x="1599.3" y="1146.6" width="3.5" height="24.9" fill="#7dc470"/><rect x="1609.8" y="1146.6" width="1.7" height="51.8" fill="#b5b8b4"/><rect x="1616.1" y="1172.5" width="3.5" height="25.9" fill="#f7a49e"/><rect x="1618.3" y="1172.5" width="1.3" height="25.9" fill="#9a6f97"/><rect x="1616.1" y="1120.6" width="3.5" height="50.8" fill="#7dc470"/><rect x="1633.2" y="1120.6" width="3.5" height="77.8" fill="#7dc470"/><rect x="1639.0" y="1146.6" width="3.5" height="51.8" fill="#7dc470"/><rect x="1647.1" y="1146.6" width="1.7" height="51.8" fill="#b5b8b4"/><rect x="1650.9" y="1042.9" width="3.5" height="76.8" fill="#7dc470"/><rect x="1653.5" y="1172.5" width="3.5" height="25.9" fill="#f7a49e"/><rect x="1655.7" y="1172.5" width="1.3" height="25.9" fill="#9a6f97"/><rect x="1653.5" y="1120.6" width="3.5" height="50.8" fill="#7dc470"/><rect x="1658.7" y="1172.5" width="3.5" height="25.9" fill="#7dc470"/><rect x="1220.9" y="1197.80" width="444.8" height="1.2" fill="#b9d3f0"/><rect x="1266.65" y="1198.4" width="1.1" height="9.0" fill="#b9d3f0"/><text x="1267.2" y="1214.9" font-size="6.5" fill="#5d5b60" text-anchor="middle" font-family="Liberation Sans">May 2018</text><rect x="1355.65" y="1198.4" width="1.1" height="9.0" fill="#b9d3f0"/><text x="1356.2" y="1214.9" font-size="6.5" fill="#5d5b60" text-anchor="middle" font-family="Liberation Sans">Jun 2018</text><rect x="1440.55" y="1198.4" width="1.1" height="9.0" fill="#b9d3f0"/><text x="1441.1" y="1214.9" font-size="6.5" fill="#5d5b60" text-anchor="middle" font-family="Liberation Sans">Jul 2018</text><rect x="1530.95" y="1198.4" width="1.1" height="9.0" fill="#b9d3f0"/><text x="1531.5" y="1214.9" font-size="6.5" fill="#5d5b60" text-anchor="middle" font-family="Liberation Sans">Aug 2018</text><rect x="1619.95" y="1198.4" width="1.1" height="9.0" fill="#b9d3f0"/><text x="1620.5" y="1214.9" font-size="6.5" fill="#5d5b60" text-anchor="middle" font-family="Liberation Sans">Sep 2018</text></svg>
<div class="t" style="top:898px;font-size:21px;line-height:21px;color:#44474b;letter-spacing:0.27px;left:731.1px;width:1400px;text-align:center;">Throughput Run Chart</div>
<div style="position:absolute;left:156px;top:18px;width:37px;height:37px;background:#fbfbfb;border-radius:5px"></div>
<svg style="position:absolute;left:156px;top:18px;" width="37" height="37" viewBox="0 0 37 37"><path d="M7.3 18.4 L18.8 9.9 L29.7 18.4 L26 18.4 L26 28.9 L22.2 28.9 L22.2 23.6 Q22.2 20.2 18.5 20.2 Q14.8 20.2 14.8 23.6 L14.8 28.9 L11.5 28.9 L11.5 18.4 Z" fill="#68686c"/></svg>
<div style="position:absolute;left:903px;top:20px;width:35px;height:34px;border:1px solid #d9d3d0;border-radius:4px"></div>
<svg style="position:absolute;left:903px;top:20px;" width="35" height="34" viewBox="0 0 35 34"><circle cx="21.2" cy="11.6" r="3.8" fill="#68686c"/><path d="M18 17.6 Q20.5 16.6 23.5 16.8 Q28 17.5 29.2 23.9 L21.5 23.9 Z" fill="#68686c"/><circle cx="13.4" cy="13.4" r="4.9" fill="#f2f2f2"/><circle cx="13.4" cy="13.4" r="4.0" fill="#68686c"/><path d="M4.3 26.4 Q5 19 13.3 18 Q21.7 19 22.5 26.4 Z" fill="#f2f2f2"/><path d="M5.1 25.8 Q6 19.3 13.3 18.7 Q20.8 19.3 21.7 25.8 Z" fill="#68686c"/></svg>
<div class="t" style="top:26px;font-size:21px;line-height:21px;color:#545558;letter-spacing:0.2px;left:947.0px;">Development</div>
<svg style="position:absolute;left:1080px;top:28px;" width="24" height="20" viewBox="0 0 24 20"><path d="M5 5.5 L12.5 13.5 L20 5.5" fill="none" stroke="#3f4246" stroke-width="2.4"/></svg>
<div style="position:absolute;left:1506px;top:18px;width:37px;height:37px;background:#fafafa;border-radius:5px"></div>
<div style="position:absolute;left:1552px;top:18px;width:37px;height:37px;background:#fafafa;border-radius:5px"></div>
<div style="position:absolute;left:1597px;top:18px;width:37px;height:37px;background:#fafafa;border-radius:5px"></div>
<svg style="position:absolute;left:1506px;top:18px;" width="37" height="37" viewBox="0 0 37 37"><path d="M18.5 8.5 V28.5 M8 18.5 H29" stroke="#68686c" stroke-width="3.4" stroke-linecap="round"/></svg>
<svg style="position:absolute;left:1552px;top:18px;" width="37" height="37" viewBox="0 0 37 37"><circle cx="18.3" cy="18.4" r="8" fill="#68686c"/><rect x="16.5" y="7.1" width="3.6" height="5" fill="#68686c" transform="rotate(0 18.3 18.4)"/><rect x="16.5" y="7.1" width="3.6" height="5" fill="#68686c" transform="rotate(45 18.3 18.4)"/><rect x="16.5" y="7.1" width="3.6" height="5" fill="#68686c" transform="rotate(90 18.3 18.4)"/><rect x="16.5" y="7.1" width="3.6" height="5" fill="#68686c" transform="rotate(135 18.3 18.4)"/><rect x="16.5" y="7.1" width="3.6" height="5" fill="#68686c" transform="rotate(180 18.3 18.4)"/><rect x="16.5" y="7.1" width="3.6" height="5" fill="#68686c" transform="rotate(225 18.3 18.4)"/><rect x="16.5" y="7.1" width="3.6" height="5" fill="#68686c" transform="rotate(270 18.3 18.4)"/><rect x="16.5" y="7.1" width="3.6" height="5" fill="#68686c" transform="rotate(315 18.3 18.4)"/><circle cx="18.3" cy="18.4" r="4.9" fill="#fafafa"/></svg>
<svg style="position:absolute;left:1597px;top:18px;" width="37" height="37" viewBox="0 0 37 37"><rect x="8.3" y="8.3" width="20.6" height="15.7" fill="none" stroke="#68686c" stroke-width="2.6"/><path d="M18.6 24.5 V28.5 M12.8 29.3 H25" stroke="#68686c" stroke-width="2"/></svg>
<svg style="position:absolute;left:1645px;top:14px;" width="45" height="45" viewBox="0 0 45 45"><path d="M9 5 Q17 2 24 6 L35 10 L35 42 L7 42 Z" fill="#f6f6f6"/><path d="M7.8 41 L12.8 24.5 Q15.5 23 18 24.5 L19.5 31 L25 41 Z" fill="#3d4043"/><path d="M23.5 27.5 Q29 25.5 35 27.8 L35 31.5 L23.5 31.5 Z" fill="#2f3235"/><path d="M17.5 22.5 L27 25.5 L22.5 31.5 L19.5 31.5 Z" fill="#f8ae9f"/><ellipse cx="17.6" cy="16.3" rx="6.4" ry="7.6" fill="#f8ae9f"/><path d="M10 15.5 Q9.5 5.5 17.5 5.5 Q24.5 5.5 24.3 14 L22.5 12 Q21 8.5 17 9.5 Q12.5 10.5 11.8 15.5 Z" fill="#373a3d"/><path d="M12.3 16.2 H15 M18.3 15.5 H21" stroke="#8a7d8d" stroke-width="1"/><path d="M15.5 21 Q18 22.5 20 20.5" fill="none" stroke="#a07aa0" stroke-width="0.8"/><path d="M20 32.2 L35.5 32.2 L35.5 34 L29 41.5 L25 41.5 Z" fill="#ffffff"/><path d="M23.5 34 L35 34 L29 40.5 Z" fill="#878b8d"/></svg>
<div style="position:absolute;left:1380px;top:93px;width:300px;height:46px;background:#fff;border-radius:6px;box-shadow:1px 3px 0 4px #f0f0f0"></div>
<svg style="position:absolute;left:1392px;top:102px;" width="26" height="30" viewBox="0 0 26 30"><rect x="1" y="3.5" width="23.5" height="25" rx="2" fill="none" stroke="#68686c" stroke-width="2.2"/><rect x="1" y="3.5" width="23.5" height="5" fill="#68686c"/><path d="M6 0 V5 M19.5 0 V5" stroke="#68686c" stroke-width="2"/><rect x="5.3" y="12.0" width="2.4" height="2.3" fill="#68686c"/><rect x="9.3" y="12.0" width="2.4" height="2.3" fill="#68686c"/><rect x="13.3" y="12.0" width="2.4" height="2.3" fill="#68686c"/><rect x="17.3" y="12.0" width="2.4" height="2.3" fill="#68686c"/><rect x="5.3" y="15.9" width="2.4" height="2.3" fill="#68686c"/><rect x="9.3" y="15.9" width="2.4" height="2.3" fill="#68686c"/><rect x="13.3" y="15.9" width="2.4" height="2.3" fill="#68686c"/><rect x="17.3" y="15.9" width="2.4" height="2.3" fill="#68686c"/><rect x="5.3" y="19.8" width="2.4" height="2.3" fill="#68686c"/><rect x="9.3" y="19.8" width="2.4" height="2.3" fill="#68686c"/><rect x="13.3" y="19.8" width="2.4" height="2.3" fill="#68686c"/></svg>
<div class="t" style="top:109px;font-size:16px;line-height:16px;color:#3f4043;letter-spacing:0.3px;left:1425.5px;">15 Apr 2018 - 15 Sep 2018</div>
<svg style="position:absolute;left:1644px;top:108px;" width="24" height="18" viewBox="0 0 24 18"><path d="M4 4.8 L11.8 12.6 L19.6 4.8" fill="none" stroke="#3f4246" stroke-width="2.4"/></svg>
<div class="t" style="top:22px;font-size:25px;line-height:25px;color:#f4f4f4;letter-spacing:2.027px;left:-633.3px;width:1400px;text-align:center;-webkit-text-stroke:0.9px #f4f4f4">nave</div>
<svg style="position:absolute;left:36px;top:74px;" width="60" height="43" viewBox="0 0 60 43"><rect x="0" y="0" width="2" height="43" fill="#8f8f91"/><rect x="0" y="41" width="60" height="2" fill="#8f8f91"/><rect x="24.7" y="9.1" width="2" height="2" fill="#ebe7e5"/><rect x="33.1" y="17.2" width="2" height="2" fill="#ebe7e5"/><rect x="13.2" y="19.6" width="2" height="2" fill="#ebe7e5"/><rect x="21.2" y="20.2" width="2" height="2" fill="#ebe7e5"/><rect x="48.0" y="20.0" width="2" height="2" fill="#ebe7e5"/><rect x="6.5" y="24.6" width="2" height="2" fill="#ebe7e5"/><rect x="13.2" y="27.9" width="2" height="2" fill="#ebe7e5"/><rect x="35.5" y="28.3" width="2" height="2" fill="#ebe7e5"/><rect x="41.0" y="28.7" width="2" height="2" fill="#ebe7e5"/><rect x="47.2" y="30.3" width="2" height="2" fill="#ebe7e5"/><rect x="54.5" y="28.3" width="2" height="2" fill="#ebe7e5"/><rect x="4.9" y="32.1" width="2" height="2" fill="#ebe7e5"/><rect x="7.3" y="33.3" width="2" height="2" fill="#ebe7e5"/><rect x="16.8" y="32.3" width="2" height="2" fill="#ebe7e5"/><rect x="21.2" y="32.1" width="2" height="2" fill="#ebe7e5"/><rect x="53.1" y="32.9" width="2" height="2" fill="#ebe7e5"/><rect x="1.7" y="35.1" width="2" height="2" fill="#ebe7e5"/><rect x="6.5" y="36.1" width="2" height="2" fill="#ebe7e5"/><rect x="25.7" y="34.3" width="2" height="2" fill="#ebe7e5"/><rect x="32.5" y="35.1" width="2" height="2" fill="#ebe7e5"/><rect x="34.5" y="34.3" width="2" height="2" fill="#ebe7e5"/><rect x="44.2" y="34.9" width="2" height="2" fill="#ebe7e5"/><rect x="48.6" y="35.1" width="2" height="2" fill="#ebe7e5"/><rect x="57.5" y="35.9" width="2" height="2" fill="#ebe7e5"/><rect x="1.5" y="37.8" width="2" height="2" fill="#ebe7e5"/><rect x="2.9" y="38.5" width="2" height="2" fill="#ebe7e5"/><rect x="4.3" y="38.1" width="2" height="2" fill="#ebe7e5"/><rect x="5.8" y="38.6" width="2" height="2" fill="#ebe7e5"/><rect x="7.2" y="38.7" width="2" height="2" fill="#ebe7e5"/><rect x="8.6" y="37.4" width="2" height="2" fill="#ebe7e5"/><rect x="10.0" y="37.3" width="2" height="2" fill="#ebe7e5"/><rect x="11.4" y="39.1" width="2" height="2" fill="#ebe7e5"/><rect x="12.9" y="37.9" width="2" height="2" fill="#ebe7e5"/><rect x="14.3" y="37.8" width="2" height="2" fill="#ebe7e5"/><rect x="15.7" y="39.5" width="2" height="2" fill="#ebe7e5"/><rect x="17.1" y="38.3" width="2" height="2" fill="#ebe7e5"/><rect x="18.5" y="39.1" width="2" height="2" fill="#ebe7e5"/><rect x="20.0" y="38.3" width="2" height="2" fill="#ebe7e5"/><rect x="21.4" y="38.7" width="2" height="2" fill="#ebe7e5"/><rect x="22.8" y="37.6" width="2" height="2" fill="#ebe7e5"/><rect x="24.2" y="38.7" width="2" height="2" fill="#ebe7e5"/><rect x="25.6" y="39.2" width="2" height="2" fill="#ebe7e5"/><rect x="27.1" y="38.5" width="2" height="2" fill="#ebe7e5"/><rect x="28.5" y="38.9" width="2" height="2" fill="#ebe7e5"/><rect x="29.9" y="38.8" width="2" height="2" fill="#ebe7e5"/><rect x="31.3" y="37.4" width="2" height="2" fill="#ebe7e5"/><rect x="32.7" y="39.0" width="2" height="2" fill="#ebe7e5"/><rect x="34.2" y="38.6" width="2" height="2" fill="#ebe7e5"/><rect x="35.6" y="38.0" width="2" height="2" fill="#ebe7e5"/><rect x="37.0" y="37.4" width="2" height="2" fill="#ebe7e5"/><rect x="38.4" y="39.2" width="2" height="2" fill="#ebe7e5"/><rect x="39.8" y="38.3" width="2" height="2" fill="#ebe7e5"/><rect x="41.3" y="38.9" width="2" height="2" fill="#ebe7e5"/><rect x="42.7" y="39.2" width="2" height="2" fill="#ebe7e5"/><rect x="44.1" y="38.9" width="2" height="2" fill="#ebe7e5"/><rect x="45.5" y="39.3" width="2" height="2" fill="#ebe7e5"/><rect x="46.9" y="38.2" width="2" height="2" fill="#ebe7e5"/><rect x="48.4" y="39.1" width="2" height="2" fill="#ebe7e5"/><rect x="49.8" y="38.3" width="2" height="2" fill="#ebe7e5"/><rect x="51.2" y="39.4" width="2" height="2" fill="#ebe7e5"/><rect x="52.6" y="39.2" width="2" height="2" fill="#ebe7e5"/><rect x="54.0" y="37.5" width="2" height="2" fill="#ebe7e5"/><rect x="55.5" y="37.6" width="2" height="2" fill="#ebe7e5"/><rect x="56.9" y="37.8" width="2" height="2" fill="#ebe7e5"/><rect x="55.1" y="36.6" width="2" height="2" fill="#ebe7e5"/><rect x="36.8" y="36.3" width="2" height="2" fill="#ebe7e5"/><rect x="30.4" y="36.5" width="2" height="2" fill="#ebe7e5"/><rect x="21.9" y="37.0" width="2" height="2" fill="#ebe7e5"/><rect x="34.5" y="37.8" width="2" height="2" fill="#ebe7e5"/><rect x="39.8" y="37.8" width="2" height="2" fill="#ebe7e5"/><rect x="49.2" y="38.0" width="2" height="2" fill="#ebe7e5"/><rect x="39.2" y="35.9" width="2" height="2" fill="#ebe7e5"/><rect x="49.5" y="37.9" width="2" height="2" fill="#ebe7e5"/><rect x="51.9" y="36.9" width="2" height="2" fill="#ebe7e5"/><rect x="41.5" y="36.0" width="2" height="2" fill="#ebe7e5"/><rect x="47.9" y="36.9" width="2" height="2" fill="#ebe7e5"/><rect x="18.4" y="35.7" width="2" height="2" fill="#ebe7e5"/><rect x="49.1" y="38.0" width="2" height="2" fill="#ebe7e5"/></svg>
<div class="t" style="top:127px;font-size:14px;line-height:14px;color:#f2f2f2;letter-spacing:0.65px;left:-633.7px;width:1400px;text-align:center;">Cycle Time</div>
<div class="t" style="top:148px;font-size:14px;line-height:14px;color:#f2f2f2;letter-spacing:0.65px;left:-633.7px;width:1400px;text-align:center;">Scatterplot</div>
<svg style="position:absolute;left:36px;top:194px;" width="60" height="43" viewBox="0 0 60 43"><rect x="0" y="0" width="1.6" height="43" fill="#8f8f91"/><rect x="0" y="41" width="60" height="2" fill="#8f8f91"/><rect x="4.9" y="5.5" width="3.6" height="35.5" fill="#b9c7c4"/><rect x="4.9" y="12.9" width="3.6" height="21.0" fill="#fff"/><rect x="12.1" y="9.9" width="3.8" height="31.1" fill="#b9c7c4"/><rect x="12.1" y="17.0" width="3.8" height="16.9" fill="#fff"/><rect x="19.2" y="7.3" width="4.0" height="33.7" fill="#b9c7c4"/><rect x="19.2" y="14.7" width="4.0" height="19.2" fill="#fff"/><rect x="26.9" y="9.9" width="3.8" height="31.1" fill="#b9c7c4"/><rect x="26.9" y="17.0" width="3.8" height="16.9" fill="#fff"/><rect x="34.3" y="14.7" width="3.8" height="26.3" fill="#b9c7c4"/><rect x="34.3" y="21.0" width="3.8" height="12.9" fill="#fff"/><rect x="41.6" y="16.0" width="4.0" height="25.0" fill="#b9c7c4"/><rect x="41.6" y="22.4" width="4.0" height="11.5" fill="#fff"/><rect x="49.2" y="16.8" width="4.0" height="24.2" fill="#b9c7c4"/><rect x="49.2" y="23.4" width="4.0" height="10.5" fill="#fff"/></svg>
<div class="t" style="top:248px;font-size:14px;line-height:14px;color:#f2f2f2;letter-spacing:0.65px;left:-633.7px;width:1400px;text-align:center;">Cycle Time</div>
<div class="t" style="top:268px;font-size:14px;line-height:14px;color:#f2f2f2;letter-spacing:0.65px;left:-633.7px;width:1400px;text-align:center;">Breakdown Chart</div>
<svg style="position:absolute;left:36px;top:314px;" width="60" height="43" viewBox="0 0 60 43"><rect x="0" y="0" width="2" height="43" fill="#8f8f91"/><rect x="0" y="41" width="60" height="2" fill="#8f8f91"/><rect x="0.9" y="31.3" width="1.6" height="9.7" fill="#ebe7e5"/><rect x="2.5" y="28.5" width="2.2" height="12.5" fill="#b9c7c4"/><rect x="4.7" y="12.7" width="2.2" height="28.3" fill="#ebe7e5"/><rect x="6.9" y="19.2" width="2.2" height="21.8" fill="#b9c7c4"/><rect x="9.1" y="25.8" width="2.0" height="15.2" fill="#ebe7e5"/><rect x="11.1" y="30.7" width="2.0" height="10.3" fill="#b9c7c4"/><rect x="13.0" y="33.5" width="2.0" height="7.5" fill="#ebe7e5"/><rect x="15.0" y="37.1" width="2.0" height="3.9" fill="#b9c7c4"/><rect x="17.0" y="33.5" width="2.0" height="7.5" fill="#ebe7e5"/><rect x="19.0" y="31.5" width="2.0" height="9.5" fill="#b9c7c4"/><rect x="21.0" y="28.5" width="2.0" height="12.5" fill="#ebe7e5"/><rect x="23.0" y="35.9" width="2.0" height="5.1" fill="#b9c7c4"/><rect x="28.9" y="34.3" width="2.0" height="6.7" fill="#ebe7e5"/><rect x="30.9" y="36.7" width="2.0" height="4.3" fill="#b9c7c4"/><rect x="32.9" y="37.5" width="2.0" height="3.5" fill="#ebe7e5"/><rect x="34.9" y="34.3" width="2.0" height="6.7" fill="#b9c7c4"/><rect x="36.9" y="35.3" width="2.2" height="5.7" fill="#ebe7e5"/><rect x="45.0" y="35.3" width="2.0" height="5.7" fill="#b9c7c4"/><rect x="47.0" y="37.1" width="2.0" height="3.9" fill="#ebe7e5"/><rect x="49.0" y="37.9" width="2.0" height="3.1" fill="#b9c7c4"/><rect x="50.9" y="39.1" width="2.0" height="1.9" fill="#ebe7e5"/><rect x="57.1" y="37.3" width="2.8" height="3.7" fill="#b9c7c4"/></svg>
<div class="t" style="top:367px;font-size:14px;line-height:14px;color:#f2f2f2;letter-spacing:0.65px;left:-633.7px;width:1400px;text-align:center;">Cycle Time</div>
<div class="t" style="top:388px;font-size:14px;line-height:14px;color:#f2f2f2;letter-spacing:0.65px;left:-633.7px;width:1400px;text-align:center;">Histogram</div>
<svg style="position:absolute;left:36px;top:441px;" width="60" height="43" viewBox="0 0 60 43"><rect x="0" y="41.2" width="60" height="1.8" fill="#8f8f91"/><rect x="0.0" y="0.4" width="1.8" height="42" fill="#8f8f91"/><rect x="15.5" y="0.4" width="1.8" height="42" fill="#8f8f91"/><rect x="31.0" y="0.4" width="1.8" height="42" fill="#8f8f91"/><rect x="46.5" y="0.4" width="1.8" height="42" fill="#8f8f91"/><rect x="7.7" y="24.0" width="2" height="2" fill="#ebe7e5"/><rect x="7.7" y="26.9" width="2" height="2" fill="#ebe7e5"/><rect x="7.7" y="32.3" width="2" height="2" fill="#ebe7e5"/><rect x="7.7" y="36.8" width="2" height="2" fill="#ebe7e5"/><rect x="23.0" y="18.6" width="2" height="2" fill="#ebe7e5"/><rect x="23.0" y="24.2" width="2" height="2" fill="#ebe7e5"/><rect x="23.0" y="35.0" width="2" height="2" fill="#ebe7e5"/><rect x="38.6" y="8.1" width="2" height="2" fill="#ebe7e5"/><rect x="38.6" y="31.7" width="2" height="2" fill="#ebe7e5"/><rect x="38.6" y="35.5" width="2" height="2" fill="#ebe7e5"/><rect x="53.9" y="22.0" width="2" height="2" fill="#ebe7e5"/><rect x="53.9" y="30.5" width="2" height="2" fill="#ebe7e5"/><rect x="53.9" y="33.7" width="2" height="2" fill="#ebe7e5"/><rect x="53.9" y="36.8" width="2" height="2" fill="#ebe7e5"/></svg>
<div class="t" style="top:499px;font-size:14px;line-height:14px;color:#f2f2f2;letter-spacing:0.65px;left:-633.7px;width:1400px;text-align:center;">Aging Chart</div>
<svg style="position:absolute;left:36px;top:554px;" width="60" height="43" viewBox="0 0 60 43"><rect x="0" y="0" width="2" height="43" fill="#8f8f91"/><rect x="0" y="41" width="60" height="2" fill="#8f8f91"/><rect x="4.9" y="39.1" width="2.1" height="1.9" fill="#ebe7e5"/><rect x="7.9" y="35.7" width="2.1" height="5.3" fill="#ebe7e5"/><rect x="10.9" y="13.7" width="2.1" height="27.3" fill="#ebe7e5"/><rect x="13.8" y="20.8" width="2.1" height="20.2" fill="#ebe7e5"/><rect x="16.8" y="37.3" width="2.1" height="3.7" fill="#ebe7e5"/><rect x="24.9" y="34.5" width="2.1" height="6.5" fill="#ebe7e5"/><rect x="27.9" y="32.3" width="2.1" height="8.7" fill="#ebe7e5"/><rect x="30.9" y="12.9" width="2.1" height="28.1" fill="#ebe7e5"/><rect x="33.9" y="10.7" width="2.1" height="30.3" fill="#ebe7e5"/><rect x="36.8" y="30.3" width="2.1" height="10.7" fill="#ebe7e5"/><rect x="45.2" y="38.7" width="2.1" height="2.3" fill="#ebe7e5"/><rect x="48.2" y="35.5" width="2.1" height="5.5" fill="#ebe7e5"/><rect x="51.1" y="12.9" width="2.1" height="28.1" fill="#ebe7e5"/><rect x="54.3" y="32.5" width="2.1" height="8.5" fill="#ebe7e5"/><rect x="57.1" y="37.7" width="2.1" height="3.3" fill="#ebe7e5"/></svg>
<div class="t" style="top:608px;font-size:14px;line-height:14px;color:#f2f2f2;letter-spacing:0.65px;left:-633.7px;width:1400px;text-align:center;">Throughput Run</div>
<div class="t" style="top:628px;font-size:14px;line-height:14px;color:#f2f2f2;letter-spacing:0.65px;left:-633.7px;width:1400px;text-align:center;">Chart</div>
<svg style="position:absolute;left:36px;top:674px;" width="60" height="43" viewBox="0 0 60 43"><rect x="0" y="0" width="2" height="43" fill="#8f8f91"/><rect x="0" y="41" width="60" height="2" fill="#8f8f91"/><rect x="0.9" y="9.3" width="3.8" height="31.7" fill="#ebe7e5"/><rect x="0.9" y="9.3" width="0.9" height="31.7" fill="#b9c7c4"/><rect x="4.7" y="23.8" width="4.0" height="17.2" fill="#ebe7e5"/><rect x="4.7" y="23.8" width="0.9" height="17.2" fill="#b9c7c4"/><rect x="8.7" y="23.8" width="4.0" height="17.2" fill="#ebe7e5"/><rect x="8.7" y="23.8" width="0.9" height="17.2" fill="#b9c7c4"/><rect x="12.7" y="29.9" width="4.2" height="11.1" fill="#ebe7e5"/><rect x="12.7" y="29.9" width="0.9" height="11.1" fill="#b9c7c4"/><rect x="16.8" y="38.7" width="4.2" height="2.3" fill="#ebe7e5"/><rect x="16.8" y="38.7" width="0.9" height="2.3" fill="#b9c7c4"/><rect x="21.0" y="35.1" width="4.0" height="5.9" fill="#ebe7e5"/><rect x="21.0" y="35.1" width="0.9" height="5.9" fill="#b9c7c4"/><rect x="25.0" y="35.1" width="4.0" height="5.9" fill="#ebe7e5"/><rect x="25.0" y="35.1" width="0.9" height="5.9" fill="#b9c7c4"/><rect x="28.9" y="35.1" width="4.0" height="5.9" fill="#ebe7e5"/><rect x="28.9" y="35.1" width="0.9" height="5.9" fill="#b9c7c4"/><rect x="40.8" y="38.1" width="3.8" height="2.9" fill="#ebe7e5"/><rect x="40.8" y="38.1" width="0.9" height="2.9" fill="#b9c7c4"/><rect x="44.6" y="39.3" width="4.2" height="1.7" fill="#ebe7e5"/><rect x="44.6" y="39.3" width="0.9" height="1.7" fill="#b9c7c4"/><rect x="57.1" y="39.5" width="2.8" height="1.5" fill="#ebe7e5"/><rect x="57.1" y="39.5" width="0.9" height="1.5" fill="#b9c7c4"/></svg>
<div class="t" style="top:727px;font-size:14px;line-height:14px;color:#f2f2f2;letter-spacing:0.65px;left:-633.7px;width:1400px;text-align:center;">Throughput</div>
<div class="t" style="top:748px;font-size:14px;line-height:14px;color:#f2f2f2;letter-spacing:0.65px;left:-633.7px;width:1400px;text-align:center;">Histogram</div>
<svg style="position:absolute;left:36px;top:794px;" width="60" height="43" viewBox="0 0 60 43"><rect x="0" y="0" width="2" height="43" fill="#8f8f91"/><rect x="0" y="41" width="60" height="2" fill="#8f8f91"/><rect x="4.9" y="35.3" width="2.2" height="5.7" fill="#ebe7e5"/><rect x="9.1" y="36.1" width="2.0" height="4.9" fill="#b9c7c4"/><rect x="11.1" y="6.9" width="2.0" height="34.1" fill="#ebe7e5"/><rect x="13.0" y="35.3" width="1.8" height="5.7" fill="#b9c7c4"/><rect x="14.8" y="39.1" width="2.2" height="1.9" fill="#ebe7e5"/><rect x="19.0" y="39.1" width="2.0" height="1.9" fill="#b9c7c4"/><rect x="21.0" y="37.5" width="2.2" height="3.5" fill="#ebe7e5"/><rect x="23.2" y="36.7" width="1.8" height="4.3" fill="#b9c7c4"/><rect x="25.0" y="30.1" width="2.2" height="10.9" fill="#ebe7e5"/><rect x="27.1" y="36.9" width="2.0" height="4.1" fill="#b9c7c4"/><rect x="33.1" y="39.1" width="2.0" height="1.9" fill="#ebe7e5"/><rect x="35.1" y="37.7" width="1.8" height="3.3" fill="#b9c7c4"/><rect x="41.0" y="39.3" width="4.0" height="1.7" fill="#ebe7e5"/></svg>
<div class="t" style="top:847px;font-size:14px;line-height:14px;color:#f2f2f2;letter-spacing:0.65px;left:-633.7px;width:1400px;text-align:center;">Flow Efficiency</div>
<div class="t" style="top:868px;font-size:14px;line-height:14px;color:#f2f2f2;letter-spacing:0.65px;left:-633.7px;width:1400px;text-align:center;">Chart</div>
<svg style="position:absolute;left:36px;top:904px;" width="60" height="43" viewBox="0 0 60 43"><rect x="0" y="0" width="2" height="43" fill="#8f8f91"/><rect x="0" y="41" width="60" height="2" fill="#8f8f91"/><path d="M1.3 32.3 L59.3 14.1" stroke="#ebe7e5" stroke-width="1.6" stroke-dasharray="2.4 1.6"/><rect x="4.7" y="22.8" width="2" height="2" fill="#ebe7e5"/><rect x="7.5" y="32.5" width="2" height="2" fill="#ebe7e5"/><rect x="9.7" y="19.0" width="2" height="2" fill="#ebe7e5"/><rect x="9.3" y="25.6" width="2" height="2" fill="#ebe7e5"/><rect x="12.8" y="32.7" width="2" height="2" fill="#ebe7e5"/><rect x="16.2" y="22.2" width="2" height="2" fill="#ebe7e5"/><rect x="19.0" y="16.8" width="2" height="2" fill="#ebe7e5"/><rect x="18.4" y="32.5" width="2" height="2" fill="#ebe7e5"/><rect x="24.2" y="20.0" width="2" height="2" fill="#ebe7e5"/><rect x="24.7" y="29.1" width="2" height="2" fill="#ebe7e5"/><rect x="29.7" y="16.8" width="2" height="2" fill="#ebe7e5"/><rect x="30.9" y="25.0" width="2" height="2" fill="#ebe7e5"/><rect x="32.5" y="32.7" width="2" height="2" fill="#ebe7e5"/><rect x="34.7" y="11.7" width="2" height="2" fill="#ebe7e5"/><rect x="37.0" y="24.0" width="2" height="2" fill="#ebe7e5"/><rect x="40.2" y="14.6" width="2" height="2" fill="#ebe7e5"/><rect x="42.4" y="26.2" width="2" height="2" fill="#ebe7e5"/><rect x="47.6" y="19.6" width="2" height="2" fill="#ebe7e5"/><rect x="47.8" y="26.2" width="2" height="2" fill="#ebe7e5"/></svg>
<div class="t" style="top:957px;font-size:14px;line-height:14px;color:#f2f2f2;letter-spacing:0.65px;left:-633.7px;width:1400px;text-align:center;">Due Date</div>
<div class="t" style="top:977px;font-size:14px;line-height:14px;color:#f2f2f2;letter-spacing:0.65px;left:-633.7px;width:1400px;text-align:center;">Performance</div>
<div class="t" style="top:998px;font-size:14px;line-height:14px;color:#f2f2f2;letter-spacing:0.65px;left:-633.7px;width:1400px;text-align:center;">Chart</div>
<svg style="position:absolute;left:36px;top:1034px;" width="60" height="43" viewBox="0 0 60 43"><rect x="0" y="1" width="1.3" height="42" fill="#b7aab5"/><rect x="0" y="41" width="60" height="2" fill="#8f8f91"/><rect x="1.5" y="39.1" width="2" height="1.9" fill="#ebe7e5"/><rect x="3.5" y="35.3" width="2" height="5.7" fill="#b9c7c4"/><rect x="5.5" y="31.1" width="2" height="9.9" fill="#ebe7e5"/><rect x="7.5" y="26.6" width="2" height="14.4" fill="#b9c7c4"/><rect x="9.5" y="22.2" width="2" height="18.8" fill="#ebe7e5"/><rect x="11.5" y="18.0" width="2" height="23.0" fill="#b9c7c4"/><rect x="13.4" y="15.0" width="2" height="26.0" fill="#ebe7e5"/><rect x="15.4" y="12.3" width="2" height="28.7" fill="#b9c7c4"/><rect x="17.4" y="10.3" width="2" height="30.7" fill="#ebe7e5"/><rect x="19.4" y="8.5" width="2" height="32.5" fill="#b9c7c4"/><rect x="21.4" y="8.5" width="2" height="32.5" fill="#ebe7e5"/><rect x="23.6" y="10.3" width="2" height="30.7" fill="#b9c7c4"/><rect x="25.5" y="12.5" width="2" height="28.5" fill="#ebe7e5"/><rect x="27.5" y="14.7" width="2" height="26.3" fill="#b9c7c4"/><rect x="29.5" y="17.0" width="2" height="24.0" fill="#ebe7e5"/><rect x="31.5" y="20.2" width="2" height="20.8" fill="#b9c7c4"/><rect x="33.7" y="23.4" width="2" height="17.6" fill="#ebe7e5"/><rect x="35.7" y="26.6" width="2" height="14.4" fill="#b9c7c4"/><rect x="37.6" y="29.7" width="2" height="11.3" fill="#ebe7e5"/><rect x="39.6" y="32.3" width="2" height="8.7" fill="#b9c7c4"/><rect x="41.6" y="35.1" width="2" height="5.9" fill="#ebe7e5"/><rect x="43.6" y="36.7" width="2" height="4.3" fill="#b9c7c4"/><rect x="45.6" y="37.5" width="2" height="3.5" fill="#ebe7e5"/><rect x="47.6" y="38.9" width="2" height="2.1" fill="#b9c7c4"/><rect x="49.5" y="39.5" width="2" height="1.5" fill="#ebe7e5"/><rect x="51.5" y="39.7" width="2" height="1.3" fill="#b9c7c4"/><rect x="53.5" y="40.0" width="2" height="1.0" fill="#ebe7e5"/><rect x="55.5" y="40.4" width="2" height="0.6" fill="#b9c7c4"/><rect x="57.5" y="41.2" width="2" height="-0.2" fill="#ebe7e5"/></svg>
<div class="t" style="top:1088px;font-size:14px;line-height:14px;color:#f2f2f2;letter-spacing:0.65px;left:-633.7px;width:1400px;text-align:center;">Monte Carlo:</div>
<div class="t" style="top:1109px;font-size:14px;line-height:14px;color:#f2f2f2;letter-spacing:0.65px;left:-633.7px;width:1400px;text-align:center;">Delivery Date</div>
<svg style="position:absolute;left:36px;top:1153px;" width="60" height="43" viewBox="0 0 60 43"><rect x="0" y="1" width="1.3" height="42" fill="#b7aab5"/><rect x="0" y="41" width="60" height="2" fill="#8f8f91"/><rect x="1.5" y="41.8" width="2" height="-0.8" fill="#ebe7e5"/><rect x="3.5" y="41.0" width="2" height="-0.0" fill="#b9c7c4"/><rect x="5.5" y="40.3" width="2" height="0.7" fill="#ebe7e5"/><rect x="7.5" y="37.7" width="2" height="3.3" fill="#b9c7c4"/><rect x="9.5" y="34.5" width="2" height="6.5" fill="#ebe7e5"/><rect x="11.5" y="30.5" width="2" height="10.5" fill="#b9c7c4"/><rect x="13.4" y="26.4" width="2" height="14.6" fill="#ebe7e5"/><rect x="15.4" y="23.4" width="2" height="17.6" fill="#b9c7c4"/><rect x="17.4" y="19.0" width="2" height="22.0" fill="#ebe7e5"/><rect x="19.4" y="15.8" width="2" height="25.2" fill="#b9c7c4"/><rect x="21.4" y="13.5" width="2" height="27.5" fill="#ebe7e5"/><rect x="23.4" y="11.5" width="2" height="29.5" fill="#b9c7c4"/><rect x="25.3" y="9.5" width="2" height="31.5" fill="#ebe7e5"/><rect x="27.3" y="9.5" width="2" height="31.5" fill="#b9c7c4"/><rect x="29.3" y="11.5" width="2" height="29.5" fill="#ebe7e5"/><rect x="31.3" y="13.1" width="2" height="27.9" fill="#b9c7c4"/><rect x="33.3" y="15.8" width="2" height="25.2" fill="#ebe7e5"/><rect x="35.3" y="17.8" width="2" height="23.2" fill="#b9c7c4"/><rect x="37.2" y="21.2" width="2" height="19.8" fill="#ebe7e5"/><rect x="39.2" y="24.4" width="2" height="16.6" fill="#b9c7c4"/><rect x="41.2" y="27.4" width="2" height="13.6" fill="#ebe7e5"/><rect x="43.2" y="30.9" width="2" height="10.1" fill="#b9c7c4"/><rect x="45.2" y="33.3" width="2" height="7.7" fill="#ebe7e5"/><rect x="47.2" y="36.1" width="2" height="4.9" fill="#b9c7c4"/><rect x="49.2" y="37.9" width="2" height="3.1" fill="#ebe7e5"/><rect x="51.1" y="39.1" width="2" height="1.9" fill="#b9c7c4"/><rect x="53.1" y="40.3" width="2" height="0.7" fill="#ebe7e5"/><rect x="55.1" y="41.0" width="2" height="-0.0" fill="#b9c7c4"/><rect x="57.1" y="41.6" width="2" height="-0.6" fill="#ebe7e5"/><rect x="58.5" y="42.0" width="2" height="-1.0" fill="#b9c7c4"/></svg>
<div class="t" style="top:1208px;font-size:14px;line-height:14px;color:#f2f2f2;letter-spacing:0.65px;left:-633.7px;width:1400px;text-align:center;">Monte Carlo:</div>
<div class="t" style="top:1228px;font-size:14px;line-height:14px;color:#f2f2f2;letter-spacing:0.65px;left:-633.7px;width:1400px;text-align:center;">Number of Tasks</div>
<div class="t" style="top:180px;font-size:21px;line-height:21px;color:#44474b;letter-spacing:-0.062px;left:-354.8px;width:1400px;text-align:center;">Cycle Time</div>
<div class="t" style="top:180px;font-size:21px;line-height:21px;color:#44474b;letter-spacing:-0.528px;left:30.8px;width:1400px;text-align:center;">WIP</div>
<div class="t" style="top:180px;font-size:21px;line-height:21px;color:#44474b;letter-spacing:0.24px;left:416.8px;width:1400px;text-align:center;">Flow Efficiency</div>
<div class="t" style="top:180px;font-size:21px;line-height:21px;color:#44474b;letter-spacing:-0.11px;left:802.2px;width:1400px;text-align:center;">Process Metrics</div>
<div class="t" style="top:277px;font-size:35px;line-height:35px;color:#1b7fae;letter-spacing:-0.431px;left:-355.2px;width:1400px;text-align:center;-webkit-text-stroke:0.7px #1b7fae">23d 16h 56m or less</div>
<div class="t" style="top:325px;font-size:19px;line-height:19px;color:#3e4145;letter-spacing:0.559px;left:-354.4px;width:1400px;text-align:center;">were needed to complete</div>
<div class="t" style="top:361px;font-size:35px;line-height:35px;color:#1b7fae;letter-spacing:0.319px;left:-354.8px;width:1400px;text-align:center;-webkit-text-stroke:0.7px #1b7fae">85%</div>
<div class="t" style="top:409px;font-size:19px;line-height:19px;color:#3e4145;letter-spacing:0.447px;left:-354.6px;width:1400px;text-align:center;">work items</div>
<div class="t" style="top:277px;font-size:35px;line-height:35px;color:#1b7fae;letter-spacing:-0.034px;left:30.5px;width:1400px;text-align:center;-webkit-text-stroke:0.7px #1b7fae">10 work items</div>
<div class="t" style="top:325px;font-size:19px;line-height:19px;color:#3e4145;letter-spacing:0.411px;left:31.2px;width:1400px;text-align:center;">are currently in progress</div>
<div class="t" style="top:361px;font-size:35px;line-height:35px;color:#1b7fae;letter-spacing:-0.513px;left:30.2px;width:1400px;text-align:center;-webkit-text-stroke:0.7px #1b7fae">4d 3h 10m</div>
<div class="t" style="top:409px;font-size:19px;line-height:19px;color:#3e4145;letter-spacing:0.454px;left:31.2px;width:1400px;text-align:center;">WIP average age</div>
<div class="t" style="top:319px;font-size:35px;line-height:35px;color:#1b7fae;letter-spacing:-0.624px;left:416.4px;width:1400px;text-align:center;-webkit-text-stroke:0.7px #1b7fae">64.75%</div>
<div class="t" style="top:368px;font-size:19px;line-height:19px;color:#3e4145;letter-spacing:0.435px;left:417.1px;width:1400px;text-align:center;">Average Flow Efficiency</div>
<div class="t" style="top:234px;font-size:35px;line-height:35px;color:#1b7fae;letter-spacing:-0.8px;left:710.2px;width:1400px;text-align:center;transform:scaleX(0.9251);transform-origin:50% 0;-webkit-text-stroke:0.7px #1b7fae">1.03</div>
<div class="t" style="top:284px;font-size:19px;line-height:19px;color:#3e4145;letter-spacing:0.415px;left:710.8px;width:1400px;text-align:center;">Arrival Rate</div>
<div class="t" style="top:306px;font-size:19px;line-height:19px;color:#3e4145;letter-spacing:0.713px;left:711.0px;width:1400px;text-align:center;">items/day</div>
<div class="t" style="top:234px;font-size:35px;line-height:35px;color:#1b7fae;letter-spacing:-0.8px;left:892.8px;width:1400px;text-align:center;transform:scaleX(0.9372);transform-origin:50% 0;-webkit-text-stroke:0.7px #1b7fae">1.06</div>
<div class="t" style="top:284px;font-size:19px;line-height:19px;color:#3e4145;letter-spacing:0.66px;left:894.6px;width:1400px;text-align:center;">Throughput</div>
<div class="t" style="top:306px;font-size:19px;line-height:19px;color:#3e4145;letter-spacing:0.713px;left:894.7px;width:1400px;text-align:center;">items/day</div>
<div class="t" style="top:380px;font-size:35px;line-height:35px;color:#1b7fae;letter-spacing:-0.8px;left:709.8px;width:1400px;text-align:center;transform:scaleX(0.8223);transform-origin:50% 0;-webkit-text-stroke:0.7px #1b7fae">12.21</div>
<div class="t" style="top:431px;font-size:19px;line-height:19px;color:#3e4145;letter-spacing:0.514px;left:710.9px;width:1400px;text-align:center;">Daily WIP</div>
<div class="t" style="top:453px;font-size:19px;line-height:19px;color:#3e4145;letter-spacing:0.402px;left:710.8px;width:1400px;text-align:center;">items</div>
<div class="t" style="top:343px;font-size:35px;line-height:35px;color:#1b7fae;letter-spacing:-0.8px;left:893.0px;width:1400px;text-align:center;transform:scaleX(0.9266);transform-origin:50% 0;-webkit-text-stroke:0.7px #1b7fae">12d 12h</div>
<div class="t" style="top:380px;font-size:35px;line-height:35px;color:#1b7fae;letter-spacing:0.653px;left:893.5px;width:1400px;text-align:center;-webkit-text-stroke:0.7px #1b7fae">48m</div>
<div class="t" style="top:431px;font-size:19px;line-height:19px;color:#3e4145;letter-spacing:0.272px;left:893.9px;width:1400px;text-align:center;">Cycle Time</div>
<svg style="position:absolute;left:1724px;top:31px;" width="20" height="14" viewBox="0 0 20 14"><path d="M2.2 2.6 L10 10.2 L17.8 2.6" fill="none" stroke="#ffffff" stroke-width="2.3"/></svg>
<div class="t" style="top:25px;font-size:20px;line-height:20px;color:#ffffff;letter-spacing:0.301px;left:1757.0px;-webkit-text-stroke:0.6px #fff">Controls for all charts</div>
<svg style="position:absolute;left:1724px;top:102px;" width="20" height="14" viewBox="0 0 20 14"><path d="M2.2 2.6 L10 10.2 L17.8 2.6" fill="none" stroke="#1e2a30" stroke-width="2.6"/></svg>
<div class="t" style="top:96px;font-size:20px;line-height:20px;color:#3b3e42;letter-spacing:-0.016px;left:1757.3px;-webkit-text-stroke:0.6px #3b3e42">Colors</div>
<svg style="position:absolute;left:1756.3px;top:136.3px;" width="18" height="18" viewBox="0 0 18 18"><circle cx="9" cy="9" r="7.6" fill="#fff" stroke="#34383b" stroke-width="1.5"/><circle cx="9" cy="9" r="4.9" fill="#45484b"/></svg>
<div class="t" style="top:136px;font-size:17px;line-height:17px;color:#263036;letter-spacing:0.101px;left:1784.0px;">Labels</div>
<svg style="position:absolute;left:1756.3px;top:170.9px;" width="18" height="18" viewBox="0 0 18 18"><circle cx="9" cy="9" r="7.6" fill="#fff" stroke="#34383b" stroke-width="1.5"/></svg>
<div class="t" style="top:171px;font-size:17px;line-height:17px;color:#263036;letter-spacing:0.263px;left:1784.0px;">Disabled</div>
<div style="position:absolute;left:1704px;top:212px;width:312px;height:1.6px;background:#ececec"></div>
<svg style="position:absolute;left:1724px;top:243px;" width="20" height="14" viewBox="0 0 20 14"><path d="M2.2 2.6 L10 10.2 L17.8 2.6" fill="none" stroke="#1e2a30" stroke-width="2.6"/></svg>
<div class="t" style="top:238px;font-size:20px;line-height:20px;color:#3b3e42;letter-spacing:0.109px;left:1757.3px;-webkit-text-stroke:0.6px #3b3e42">Cycle time precision</div>
<svg style="position:absolute;left:1756.3px;top:277.0px;" width="18" height="18" viewBox="0 0 18 18"><circle cx="9" cy="9" r="7.6" fill="#fff" stroke="#34383b" stroke-width="1.5"/></svg>
<div class="t" style="top:277px;font-size:17px;line-height:17px;color:#263036;letter-spacing:0.416px;left:1784.0px;">hh mm</div>
<svg style="position:absolute;left:1756.3px;top:311.87px;" width="18" height="18" viewBox="0 0 18 18"><circle cx="9" cy="9" r="7.6" fill="#fff" stroke="#34383b" stroke-width="1.5"/><circle cx="9" cy="9" r="4.9" fill="#45484b"/></svg>
<div class="t" style="top:312px;font-size:17px;line-height:17px;color:#263036;letter-spacing:0.426px;left:1784.0px;">DD hh mm</div>
<svg style="position:absolute;left:1756.3px;top:346.74px;" width="18" height="18" viewBox="0 0 18 18"><circle cx="9" cy="9" r="7.6" fill="#fff" stroke="#34383b" stroke-width="1.5"/></svg>
<div class="t" style="top:347px;font-size:17px;line-height:17px;color:#263036;letter-spacing:0.028px;left:1784.0px;">DD hh</div>
<svg style="position:absolute;left:1756.3px;top:381.61px;" width="18" height="18" viewBox="0 0 18 18"><circle cx="9" cy="9" r="7.6" fill="#fff" stroke="#34383b" stroke-width="1.5"/></svg>
<div class="t" style="top:382px;font-size:17px;line-height:17px;color:#263036;letter-spacing:-0.8px;left:1784.0px;transform:scaleX(0.989);transform-origin:0 0;">DD</div>
<svg style="position:absolute;left:1756.3px;top:416.48px;" width="18" height="18" viewBox="0 0 18 18"><circle cx="9" cy="9" r="7.6" fill="#fff" stroke="#34383b" stroke-width="1.5"/></svg>
<div class="t" style="top:416px;font-size:17px;line-height:17px;color:#263036;letter-spacing:0.471px;left:1784.0px;">WW DD hh</div>
<svg style="position:absolute;left:1756.3px;top:451.35px;" width="18" height="18" viewBox="0 0 18 18"><circle cx="9" cy="9" r="7.6" fill="#fff" stroke="#34383b" stroke-width="1.5"/></svg>
<div class="t" style="top:451px;font-size:17px;line-height:17px;color:#263036;letter-spacing:0.485px;left:1784.0px;">MM WW DD</div>
<svg style="position:absolute;left:1756.3px;top:486.21999999999997px;" width="18" height="18" viewBox="0 0 18 18"><circle cx="9" cy="9" r="7.6" fill="#fff" stroke="#34383b" stroke-width="1.5"/></svg>
<div class="t" style="top:486px;font-size:17px;line-height:17px;color:#263036;letter-spacing:0.719px;left:1784.0px;">MM WW</div>
<div style="position:absolute;left:1704px;top:527.5px;width:312px;height:1.6px;background:#ececec"></div>
<svg style="position:absolute;left:1724px;top:559px;" width="20" height="14" viewBox="0 0 20 14"><path d="M2.2 2.6 L10 10.2 L17.8 2.6" fill="none" stroke="#1e2a30" stroke-width="2.6"/></svg>
<div class="t" style="top:554px;font-size:20px;line-height:20px;color:#3b3e42;letter-spacing:0.65px;left:1757.3px;-webkit-text-stroke:0.6px #3b3e42">Date format</div>
<svg style="position:absolute;left:1756.3px;top:592.8px;" width="18" height="18" viewBox="0 0 18 18"><circle cx="9" cy="9" r="7.6" fill="#fff" stroke="#34383b" stroke-width="1.5"/><circle cx="9" cy="9" r="4.9" fill="#45484b"/></svg>
<div class="t" style="top:593px;font-size:17px;line-height:17px;color:#263036;letter-spacing:-0.083px;left:1784.0px;">DD MMM YYYY</div>
<svg style="position:absolute;left:1756.3px;top:627.5999999999999px;" width="18" height="18" viewBox="0 0 18 18"><circle cx="9" cy="9" r="7.6" fill="#fff" stroke="#34383b" stroke-width="1.5"/></svg>
<div class="t" style="top:628px;font-size:17px;line-height:17px;color:#263036;letter-spacing:-0.029px;left:1784.0px;">DD-MM-YYYY</div>
<svg style="position:absolute;left:1756.3px;top:662.4px;" width="18" height="18" viewBox="0 0 18 18"><circle cx="9" cy="9" r="7.6" fill="#fff" stroke="#34383b" stroke-width="1.5"/></svg>
<div class="t" style="top:662px;font-size:17px;line-height:17px;color:#263036;letter-spacing:0.179px;left:1784.0px;">DD/MM/YYYY</div>
<svg style="position:absolute;left:1756.3px;top:697.1999999999999px;" width="18" height="18" viewBox="0 0 18 18"><circle cx="9" cy="9" r="7.6" fill="#fff" stroke="#34383b" stroke-width="1.5"/></svg>
<div class="t" style="top:697px;font-size:17px;line-height:17px;color:#263036;letter-spacing:-0.223px;left:1784.0px;">MMM DD, YYYY</div>
<svg style="position:absolute;left:1756.3px;top:732.0px;" width="18" height="18" viewBox="0 0 18 18"><circle cx="9" cy="9" r="7.6" fill="#fff" stroke="#34383b" stroke-width="1.5"/></svg>
<div class="t" style="top:732px;font-size:17px;line-height:17px;color:#263036;letter-spacing:-0.029px;left:1784.0px;">MM-DD-YYYY</div>
<svg style="position:absolute;left:1756.3px;top:766.8px;" width="18" height="18" viewBox="0 0 18 18"><circle cx="9" cy="9" r="7.6" fill="#fff" stroke="#34383b" stroke-width="1.5"/></svg>
<div class="t" style="top:767px;font-size:17px;line-height:17px;color:#263036;letter-spacing:0.179px;left:1784.0px;">MM/DD/YYYY</div>
<svg style="position:absolute;left:1756.3px;top:801.5999999999999px;" width="18" height="18" viewBox="0 0 18 18"><circle cx="9" cy="9" r="7.6" fill="#fff" stroke="#34383b" stroke-width="1.5"/></svg>
<div class="t" style="top:802px;font-size:17px;line-height:17px;color:#263036;letter-spacing:0.144px;left:1784.0px;">YYYY-MM-DD</div>
<svg style="position:absolute;left:1756.3px;top:836.3999999999999px;" width="18" height="18" viewBox="0 0 18 18"><circle cx="9" cy="9" r="7.6" fill="#fff" stroke="#34383b" stroke-width="1.5"/></svg>
<div class="t" style="top:836px;font-size:17px;line-height:17px;color:#263036;letter-spacing:0.012px;left:1784.0px;">YYYY/MM/DD</div>
<div style="position:absolute;left:1704px;top:877.5px;width:312px;height:1.6px;background:#ececec"></div>
<svg style="position:absolute;left:1724px;top:909px;" width="20" height="14" viewBox="0 0 20 14"><path d="M2.2 2.6 L10 10.2 L17.8 2.6" fill="none" stroke="#1e2a30" stroke-width="2.6"/></svg>
<div class="t" style="top:903px;font-size:20px;line-height:20px;color:#3b3e42;letter-spacing:-0.185px;left:1757.3px;-webkit-text-stroke:0.6px #3b3e42">Exclude weekends</div>
<svg style="position:absolute;left:1756.8px;top:948.2px;" width="17.2" height="17.2" viewBox="0 0 17.2 17.2"><rect x="0.9" y="0.9" width="15.4" height="15.4" rx="2" fill="#fff" stroke="#34383b" stroke-width="1.5"/></svg>
<div class="t" style="top:948px;font-size:17px;line-height:17px;color:#263036;letter-spacing:0.268px;left:1784.0px;">Enabled</div>
<svg style="position:absolute;left:1724px;top:1028.5px;" width="20" height="14" viewBox="0 0 20 14"><path d="M2.2 2.6 L10 10.2 L17.8 2.6" fill="none" stroke="#ffffff" stroke-width="2.3"/></svg>
<div class="t" style="top:1023px;font-size:20px;line-height:20px;color:#ffffff;letter-spacing:-0.156px;left:1757.4px;-webkit-text-stroke:0.6px #ffffff">Filters</div>
<svg style="position:absolute;left:1724px;top:1100px;" width="20" height="14" viewBox="0 0 20 14"><path d="M2.2 2.6 L10 10.2 L17.8 2.6" fill="none" stroke="#1e2a30" stroke-width="2.6"/></svg>
<div class="t" style="top:1095px;font-size:20px;line-height:20px;color:#3b3e42;letter-spacing:-0.281px;left:1757.3px;-webkit-text-stroke:0.6px #3b3e42">Lists</div>
<svg style="position:absolute;left:1756.8px;top:1138.9px;" width="17.2" height="17.2" viewBox="0 0 17.2 17.2"><rect x="0.9" y="0.9" width="15.4" height="15.4" rx="2" fill="#fff" stroke="#34383b" stroke-width="1.5"/><path d="M3.6 8.6 L7 12.6 L13.6 3.6" fill="none" stroke="#1f2326" stroke-width="1.9"/></svg>
<div class="t" style="top:1138px;font-size:17px;line-height:17px;color:#263036;letter-spacing:0.313px;left:1783.5px;">Select all</div>
<svg style="position:absolute;left:1756.8px;top:1173.75px;" width="17.2" height="17.2" viewBox="0 0 17.2 17.2"><rect x="0.9" y="0.9" width="15.4" height="15.4" rx="2" fill="#fff" stroke="#34383b" stroke-width="1.5"/><path d="M3.6 8.6 L7 12.6 L13.6 3.6" fill="none" stroke="#1f2326" stroke-width="1.9"/></svg>
<div class="t" style="top:1173px;font-size:17px;line-height:17px;color:#263036;letter-spacing:0.484px;left:1783.5px;">Development</div>
<svg style="position:absolute;left:1756.8px;top:1208.6000000000001px;" width="17.2" height="17.2" viewBox="0 0 17.2 17.2"><rect x="0.9" y="0.9" width="15.4" height="15.4" rx="2" fill="#fff" stroke="#34383b" stroke-width="1.5"/><path d="M3.6 8.6 L7 12.6 L13.6 3.6" fill="none" stroke="#1f2326" stroke-width="1.9"/></svg>
<div class="t" style="top:1207px;font-size:17px;line-height:17px;color:#263036;letter-spacing:0.302px;left:1783.5px;">Code review</div>
<svg style="position:absolute;left:1756.8px;top:1243.45px;" width="17.2" height="17.2" viewBox="0 0 17.2 17.2"><rect x="0.9" y="0.9" width="15.4" height="15.4" rx="2" fill="#fff" stroke="#34383b" stroke-width="1.5"/><path d="M3.6 8.6 L7 12.6 L13.6 3.6" fill="none" stroke="#1f2326" stroke-width="1.9"/></svg>
<div class="t" style="top:1242px;font-size:17px;line-height:17px;color:#263036;letter-spacing:0.208px;left:1783.5px;">Code review (Done)</div>
<div style="position:absolute;left:1910px;top:1154px;width:63px;height:63px;background:#434649;border-radius:9px;box-shadow:0 2px 3px 2px rgba(200,190,185,0.45)"></div>
<svg style="position:absolute;left:1910px;top:1154px;" width="63" height="63" viewBox="0 0 63 63"><ellipse cx="31.7" cy="30.8" rx="15.2" ry="11.6" fill="#fff"/><path d="M20.5 37 L18 45.5 L28.5 40.5 Z" fill="#fff"/></svg>
</body></html>
